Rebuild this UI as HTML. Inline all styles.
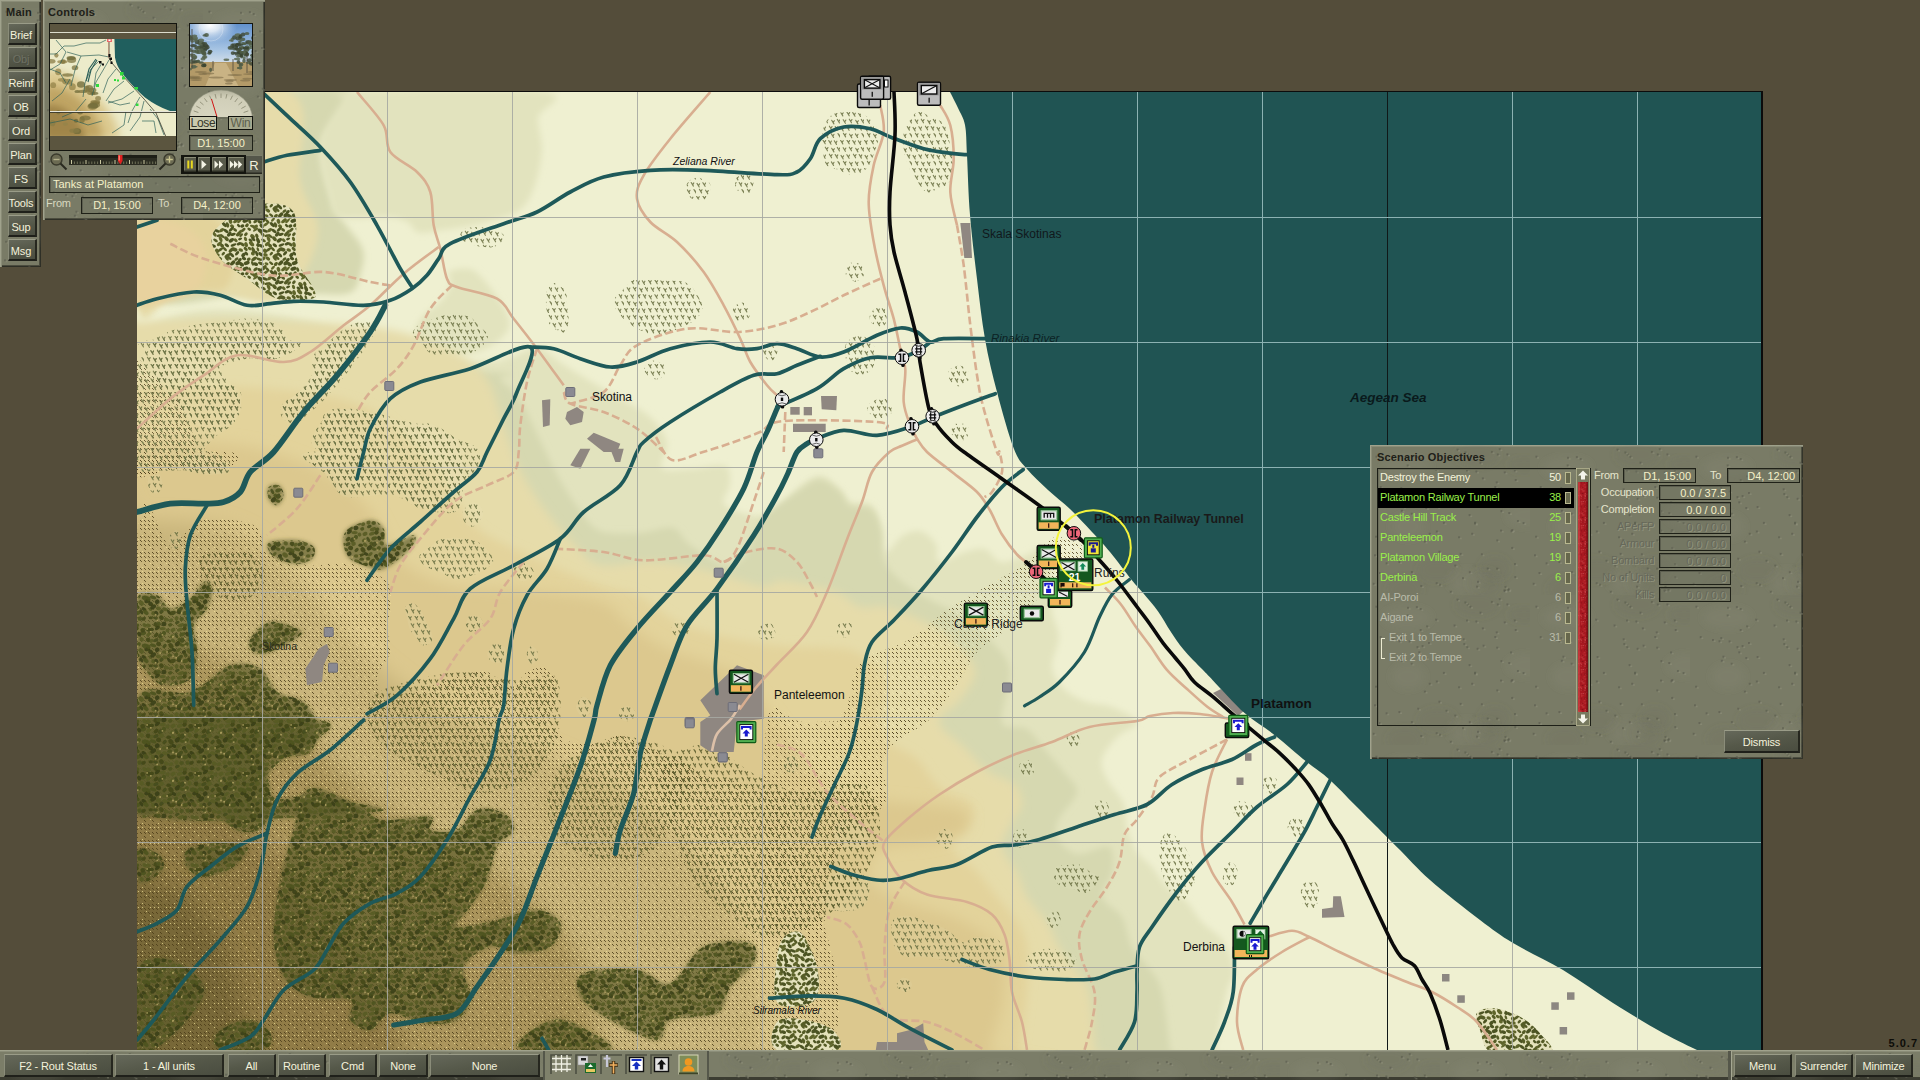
<!DOCTYPE html>
<html><head><meta charset="utf-8"><title>Command Ops - Tanks at Platamon</title>
<style>
html,body{margin:0;padding:0;background:#544d3a;overflow:hidden;}
body{width:1920px;height:1080px;position:relative;font-family:"Liberation Sans",Arial,sans-serif;}
#map{position:absolute;left:0;top:0;width:1920px;height:1080px;}

.p{position:absolute;background:#797b66;box-shadow:inset 1px 1px 0 #a0a28c,inset 2px 2px 0 #8a8c77,inset -1px -1px 0 #2e2f26,inset -2px -2px 0 #4b4c3e;overflow:hidden;}
.p svg.tx{position:absolute;left:0;top:0;width:100%;height:100%;pointer-events:none;}
.a{position:absolute;white-space:nowrap;}
.t{position:absolute;font-weight:bold;font-size:11px;color:#1e2018;letter-spacing:0.25px;white-space:nowrap;}
.b{position:absolute;box-sizing:border-box;background:linear-gradient(170deg,#65685a 0%,#555849 50%,#4a4d40 100%);border-top:1px solid #9a9c88;border-left:1px solid #8a8c79;border-bottom:2px solid #1f201a;border-right:2px solid #26271f;color:#f4f2dc;font-size:11px;text-align:center;white-space:nowrap;letter-spacing:-0.15px;}
.b.dis{color:#6e7164;text-shadow:1px 1px 0 #4a4c40;}
.f{position:absolute;box-sizing:border-box;border:1px solid #1f2118;background:rgba(110,112,94,0.35);color:#f4f0c8;font-size:11px;white-space:nowrap;letter-spacing:0;box-shadow:inset 1px 1px 0 #5c5e4f;}
.lab{position:absolute;color:#e6e5cc;font-size:11px;white-space:nowrap;letter-spacing:-0.25px;}
.lab.dis,.f.dis{color:#66685a;text-shadow:1px 1px 0 #92947e;}
.row{position:absolute;left:1378px;width:196px;height:20px;font-size:11px;letter-spacing:-0.2px;white-space:nowrap;}
.row span{position:absolute;top:3px;}
.row .n{left:2px;}
.row .v{right:13px;text-align:right;}
.row i{position:absolute;left:187px;top:4px;width:4px;height:10px;border:1px solid #b9b88f;background:#66674c;box-sizing:content-box;}

</style></head><body>
<svg id="map" width="1920" height="1080" viewBox="0 0 1920 1080">
<defs><clipPath id="mapclip"><rect x="137" y="92" width="1625" height="958"/></clipPath><filter id="b1" x="-20%" y="-20%" width="140%" height="140%"><feGaussianBlur stdDeviation="0.6"/></filter><filter id="b2" x="-20%" y="-20%" width="140%" height="140%"><feGaussianBlur stdDeviation="2"/></filter><filter id="b3" x="-20%" y="-20%" width="140%" height="140%"><feGaussianBlur stdDeviation="3"/></filter><filter id="b4" x="-20%" y="-20%" width="140%" height="140%"><feGaussianBlur stdDeviation="4"/></filter><filter id="b5" x="-20%" y="-20%" width="140%" height="140%"><feGaussianBlur stdDeviation="5"/></filter><filter id="b6" x="-20%" y="-20%" width="140%" height="140%"><feGaussianBlur stdDeviation="6"/></filter><filter id="b7" x="-20%" y="-20%" width="140%" height="140%"><feGaussianBlur stdDeviation="7"/></filter><filter id="b8" x="-20%" y="-20%" width="140%" height="140%"><feGaussianBlur stdDeviation="8"/></filter><filter id="b10" x="-20%" y="-20%" width="140%" height="140%"><feGaussianBlur stdDeviation="10"/></filter><filter id="b12" x="-20%" y="-20%" width="140%" height="140%"><feGaussianBlur stdDeviation="12"/></filter><filter id="b14" x="-20%" y="-20%" width="140%" height="140%"><feGaussianBlur stdDeviation="14"/></filter><filter id="b20" x="-20%" y="-20%" width="140%" height="140%"><feGaussianBlur stdDeviation="20"/></filter><pattern id="woods" width="24" height="28" patternUnits="userSpaceOnUse"><rect width="24" height="28" fill="#f2f2dc" fill-opacity="0.07"/><path d="M0.6 0.3l2.200 3.600M3.2 0.7l-1 1.700" stroke="#6a7042" stroke-width="1.15" stroke-linecap="round" stroke-opacity="0.85" fill="none"/><path d="M7.0 0.2l2.200 3.600M9.6 0.6l-1 1.700" stroke="#6a7042" stroke-width="1.15" stroke-linecap="round" stroke-opacity="0.85" fill="none"/><path d="M12.8 0.6l2.200 3.600M15.4 1.0l-1 1.700" stroke="#6a7042" stroke-width="1.15" stroke-linecap="round" stroke-opacity="0.85" fill="none"/><path d="M18.3 0.8l2.200 3.600M20.9 1.2l-1 1.700" stroke="#6a7042" stroke-width="1.15" stroke-linecap="round" stroke-opacity="0.85" fill="none"/><path d="M3.2 7.7l2.200 3.600M5.8 8.1l-1 1.700" stroke="#6a7042" stroke-width="1.15" stroke-linecap="round" stroke-opacity="0.85" fill="none"/><path d="M9.3 7.2l2.200 3.600M11.9 7.6l-1 1.700" stroke="#6a7042" stroke-width="1.15" stroke-linecap="round" stroke-opacity="0.85" fill="none"/><path d="M15.7 8.3l2.200 3.600M18.3 8.7l-1 1.700" stroke="#6a7042" stroke-width="1.15" stroke-linecap="round" stroke-opacity="0.85" fill="none"/><path d="M21.3 7.4l2.200 3.600M23.9 7.8l-1 1.700" stroke="#6a7042" stroke-width="1.15" stroke-linecap="round" stroke-opacity="0.85" fill="none"/><path d="M1.0 15.4l2.200 3.600M3.6 15.8l-1 1.700" stroke="#6a7042" stroke-width="1.15" stroke-linecap="round" stroke-opacity="0.85" fill="none"/><path d="M6.9 14.7l2.200 3.600M9.5 15.1l-1 1.700" stroke="#6a7042" stroke-width="1.15" stroke-linecap="round" stroke-opacity="0.85" fill="none"/><path d="M13.4 14.2l2.200 3.600M16.0 14.6l-1 1.700" stroke="#6a7042" stroke-width="1.15" stroke-linecap="round" stroke-opacity="0.85" fill="none"/><path d="M19.2 14.5l2.200 3.600M21.8 14.9l-1 1.700" stroke="#6a7042" stroke-width="1.15" stroke-linecap="round" stroke-opacity="0.85" fill="none"/><path d="M3.4 21.3l2.200 3.600M6.0 21.7l-1 1.700" stroke="#6a7042" stroke-width="1.15" stroke-linecap="round" stroke-opacity="0.85" fill="none"/><path d="M9.6 22.2l2.200 3.600M12.2 22.6l-1 1.700" stroke="#6a7042" stroke-width="1.15" stroke-linecap="round" stroke-opacity="0.85" fill="none"/><path d="M15.4 21.9l2.200 3.600M18.0 22.3l-1 1.700" stroke="#6a7042" stroke-width="1.15" stroke-linecap="round" stroke-opacity="0.85" fill="none"/><path d="M22.0 21.6l2.200 3.600M24.6 22.0l-1 1.700" stroke="#6a7042" stroke-width="1.15" stroke-linecap="round" stroke-opacity="0.85" fill="none"/></pattern><pattern id="woodsd" width="24" height="28" patternUnits="userSpaceOnUse"><path d="M0.6 0.3l2.200 3.600M3.2 0.7l-1 1.700" stroke="#5a5c2c" stroke-width="1.15" stroke-linecap="round" stroke-opacity="0.85" fill="none"/><path d="M7.0 0.2l2.200 3.600M9.6 0.6l-1 1.700" stroke="#5a5c2c" stroke-width="1.15" stroke-linecap="round" stroke-opacity="0.85" fill="none"/><path d="M12.8 0.6l2.200 3.600M15.4 1.0l-1 1.700" stroke="#5a5c2c" stroke-width="1.15" stroke-linecap="round" stroke-opacity="0.85" fill="none"/><path d="M18.3 0.8l2.200 3.600M20.9 1.2l-1 1.700" stroke="#5a5c2c" stroke-width="1.15" stroke-linecap="round" stroke-opacity="0.85" fill="none"/><path d="M3.2 7.7l2.200 3.600M5.8 8.1l-1 1.700" stroke="#5a5c2c" stroke-width="1.15" stroke-linecap="round" stroke-opacity="0.85" fill="none"/><path d="M9.3 7.2l2.200 3.600M11.9 7.6l-1 1.700" stroke="#5a5c2c" stroke-width="1.15" stroke-linecap="round" stroke-opacity="0.85" fill="none"/><path d="M15.7 8.3l2.200 3.600M18.3 8.7l-1 1.700" stroke="#5a5c2c" stroke-width="1.15" stroke-linecap="round" stroke-opacity="0.85" fill="none"/><path d="M21.3 7.4l2.200 3.600M23.9 7.8l-1 1.700" stroke="#5a5c2c" stroke-width="1.15" stroke-linecap="round" stroke-opacity="0.85" fill="none"/><path d="M1.0 15.4l2.200 3.600M3.6 15.8l-1 1.700" stroke="#5a5c2c" stroke-width="1.15" stroke-linecap="round" stroke-opacity="0.85" fill="none"/><path d="M6.9 14.7l2.200 3.600M9.5 15.1l-1 1.700" stroke="#5a5c2c" stroke-width="1.15" stroke-linecap="round" stroke-opacity="0.85" fill="none"/><path d="M13.4 14.2l2.200 3.600M16.0 14.6l-1 1.700" stroke="#5a5c2c" stroke-width="1.15" stroke-linecap="round" stroke-opacity="0.85" fill="none"/><path d="M19.2 14.5l2.200 3.600M21.8 14.9l-1 1.700" stroke="#5a5c2c" stroke-width="1.15" stroke-linecap="round" stroke-opacity="0.85" fill="none"/><path d="M3.4 21.3l2.200 3.600M6.0 21.7l-1 1.700" stroke="#5a5c2c" stroke-width="1.15" stroke-linecap="round" stroke-opacity="0.85" fill="none"/><path d="M9.6 22.2l2.200 3.600M12.2 22.6l-1 1.700" stroke="#5a5c2c" stroke-width="1.15" stroke-linecap="round" stroke-opacity="0.85" fill="none"/><path d="M15.4 21.9l2.200 3.600M18.0 22.3l-1 1.700" stroke="#5a5c2c" stroke-width="1.15" stroke-linecap="round" stroke-opacity="0.85" fill="none"/><path d="M22.0 21.6l2.200 3.600M24.6 22.0l-1 1.700" stroke="#5a5c2c" stroke-width="1.15" stroke-linecap="round" stroke-opacity="0.85" fill="none"/></pattern><pattern id="orch" width="48" height="48" patternUnits="userSpaceOnUse"><g filter="url(#b1)"><ellipse cx="0.1" cy="-1.1" rx="2.1" ry="1.3" transform="rotate(-20 0.1 -1.1)" fill="#4c5322"/><ellipse cx="0.1" cy="46.9" rx="2.1" ry="1.3" transform="rotate(-20 0.1 46.9)" fill="#4c5322"/><ellipse cx="48.1" cy="-1.1" rx="2.1" ry="1.3" transform="rotate(-20 48.1 -1.1)" fill="#4c5322"/><ellipse cx="48.1" cy="46.9" rx="2.1" ry="1.3" transform="rotate(-20 48.1 46.9)" fill="#4c5322"/><ellipse cx="2.2" cy="4.3" rx="2.8" ry="1.5" transform="rotate(35 2.2 4.3)" fill="#555c26"/><ellipse cx="50.2" cy="4.3" rx="2.8" ry="1.5" transform="rotate(35 50.2 4.3)" fill="#555c26"/><ellipse cx="0.8" cy="10.1" rx="2.3" ry="1.6" transform="rotate(20 0.8 10.1)" fill="#5e652c"/><ellipse cx="48.8" cy="10.1" rx="2.3" ry="1.6" transform="rotate(20 48.8 10.1)" fill="#5e652c"/><ellipse cx="3.4" cy="15.0" rx="2.4" ry="1.9" transform="rotate(-45 3.4 15.0)" fill="#4c5322"/><ellipse cx="-0.2" cy="19.9" rx="2.2" ry="1.5" transform="rotate(-45 -0.2 19.9)" fill="#4c5322"/><ellipse cx="47.8" cy="19.9" rx="2.2" ry="1.5" transform="rotate(-45 47.8 19.9)" fill="#4c5322"/><ellipse cx="1.3" cy="24.2" rx="3.0" ry="1.8" transform="rotate(35 1.3 24.2)" fill="#4c5322"/><ellipse cx="49.3" cy="24.2" rx="3.0" ry="1.8" transform="rotate(35 49.3 24.2)" fill="#4c5322"/><ellipse cx="-0.4" cy="28.8" rx="3.0" ry="1.2" transform="rotate(-45 -0.4 28.8)" fill="#5e652c"/><ellipse cx="47.6" cy="28.8" rx="3.0" ry="1.2" transform="rotate(-45 47.6 28.8)" fill="#5e652c"/><ellipse cx="2.3" cy="34.0" rx="2.1" ry="1.7" transform="rotate(-20 2.3 34.0)" fill="#4c5322"/><ellipse cx="50.3" cy="34.0" rx="2.1" ry="1.7" transform="rotate(-20 50.3 34.0)" fill="#4c5322"/><ellipse cx="1.3" cy="39.2" rx="2.4" ry="1.5" transform="rotate(-20 1.3 39.2)" fill="#5e652c"/><ellipse cx="49.3" cy="39.2" rx="2.4" ry="1.5" transform="rotate(-20 49.3 39.2)" fill="#5e652c"/><ellipse cx="1.2" cy="43.1" rx="2.2" ry="1.3" transform="rotate(-45 1.2 43.1)" fill="#555c26"/><ellipse cx="49.2" cy="43.1" rx="2.2" ry="1.3" transform="rotate(-45 49.2 43.1)" fill="#555c26"/><ellipse cx="5.5" cy="-1.0" rx="2.3" ry="1.5" transform="rotate(70 5.5 -1.0)" fill="#5e652c"/><ellipse cx="5.5" cy="47.0" rx="2.3" ry="1.5" transform="rotate(70 5.5 47.0)" fill="#5e652c"/><ellipse cx="6.1" cy="4.7" rx="2.7" ry="1.8" transform="rotate(70 6.1 4.7)" fill="#5e652c"/><ellipse cx="5.7" cy="9.0" rx="2.5" ry="1.5" transform="rotate(45 5.7 9.0)" fill="#555c26"/><ellipse cx="6.3" cy="13.6" rx="2.3" ry="1.4" transform="rotate(45 6.3 13.6)" fill="#4c5322"/><ellipse cx="4.0" cy="18.6" rx="2.2" ry="1.6" transform="rotate(20 4.0 18.6)" fill="#4c5322"/><ellipse cx="6.7" cy="23.0" rx="3.1" ry="1.9" transform="rotate(-20 6.7 23.0)" fill="#4c5322"/><ellipse cx="5.4" cy="28.7" rx="3.1" ry="1.9" transform="rotate(-20 5.4 28.7)" fill="#4c5322"/><ellipse cx="6.9" cy="33.3" rx="2.1" ry="1.6" transform="rotate(-45 6.9 33.3)" fill="#555c26"/><ellipse cx="3.7" cy="37.6" rx="2.2" ry="1.4" transform="rotate(-45 3.7 37.6)" fill="#555c26"/><ellipse cx="5.9" cy="42.3" rx="2.1" ry="1.5" transform="rotate(-45 5.9 42.3)" fill="#555c26"/><ellipse cx="10.6" cy="0.3" rx="2.2" ry="1.4" transform="rotate(35 10.6 0.3)" fill="#4c5322"/><ellipse cx="10.6" cy="48.3" rx="2.2" ry="1.4" transform="rotate(35 10.6 48.3)" fill="#4c5322"/><ellipse cx="11.6" cy="3.8" rx="3.1" ry="1.9" transform="rotate(45 11.6 3.8)" fill="#5e652c"/><ellipse cx="9.6" cy="8.5" rx="2.1" ry="1.4" transform="rotate(35 9.6 8.5)" fill="#5e652c"/><ellipse cx="12.9" cy="13.5" rx="2.0" ry="1.9" transform="rotate(20 12.9 13.5)" fill="#5e652c"/><ellipse cx="8.7" cy="19.3" rx="2.0" ry="1.6" transform="rotate(-20 8.7 19.3)" fill="#555c26"/><ellipse cx="12.5" cy="23.4" rx="2.5" ry="1.3" transform="rotate(70 12.5 23.4)" fill="#555c26"/><ellipse cx="9.7" cy="29.5" rx="2.4" ry="1.4" transform="rotate(70 9.7 29.5)" fill="#555c26"/><ellipse cx="12.8" cy="34.4" rx="3.0" ry="1.4" transform="rotate(20 12.8 34.4)" fill="#5e652c"/><ellipse cx="9.2" cy="37.2" rx="2.0" ry="1.4" transform="rotate(35 9.2 37.2)" fill="#555c26"/><ellipse cx="12.5" cy="44.4" rx="2.6" ry="1.9" transform="rotate(35 12.5 44.4)" fill="#5e652c"/><ellipse cx="13.3" cy="-1.0" rx="2.6" ry="1.4" transform="rotate(45 13.3 -1.0)" fill="#4c5322"/><ellipse cx="13.3" cy="47.0" rx="2.6" ry="1.4" transform="rotate(45 13.3 47.0)" fill="#4c5322"/><ellipse cx="18.1" cy="5.1" rx="2.0" ry="1.8" transform="rotate(35 18.1 5.1)" fill="#4c5322"/><ellipse cx="13.3" cy="10.0" rx="3.2" ry="1.7" transform="rotate(70 13.3 10.0)" fill="#555c26"/><ellipse cx="16.7" cy="13.6" rx="3.0" ry="1.4" transform="rotate(70 16.7 13.6)" fill="#4c5322"/><ellipse cx="14.1" cy="18.9" rx="3.2" ry="1.7" transform="rotate(-35 14.1 18.9)" fill="#555c26"/><ellipse cx="15.6" cy="24.2" rx="2.6" ry="1.7" transform="rotate(20 15.6 24.2)" fill="#4c5322"/><ellipse cx="15.6" cy="29.2" rx="2.5" ry="1.6" transform="rotate(-35 15.6 29.2)" fill="#555c26"/><ellipse cx="15.5" cy="34.8" rx="2.8" ry="1.6" transform="rotate(-35 15.5 34.8)" fill="#5e652c"/><ellipse cx="15.7" cy="37.6" rx="3.1" ry="1.2" transform="rotate(-35 15.7 37.6)" fill="#5e652c"/><ellipse cx="16.8" cy="43.9" rx="2.4" ry="1.6" transform="rotate(70 16.8 43.9)" fill="#555c26"/><ellipse cx="18.1" cy="0.6" rx="3.2" ry="1.7" transform="rotate(70 18.1 0.6)" fill="#4c5322"/><ellipse cx="18.1" cy="48.6" rx="3.2" ry="1.7" transform="rotate(70 18.1 48.6)" fill="#4c5322"/><ellipse cx="21.4" cy="5.9" rx="2.7" ry="1.6" transform="rotate(20 21.4 5.9)" fill="#4c5322"/><ellipse cx="17.9" cy="9.4" rx="2.2" ry="1.2" transform="rotate(70 17.9 9.4)" fill="#555c26"/><ellipse cx="20.7" cy="14.3" rx="2.9" ry="1.6" transform="rotate(35 20.7 14.3)" fill="#4c5322"/><ellipse cx="19.2" cy="19.3" rx="3.0" ry="1.3" transform="rotate(20 19.2 19.3)" fill="#555c26"/><ellipse cx="20.9" cy="23.4" rx="3.0" ry="1.6" transform="rotate(20 20.9 23.4)" fill="#555c26"/><ellipse cx="19.9" cy="29.9" rx="2.6" ry="1.6" transform="rotate(20 19.9 29.9)" fill="#4c5322"/><ellipse cx="21.6" cy="34.1" rx="2.6" ry="1.6" transform="rotate(45 21.6 34.1)" fill="#4c5322"/><ellipse cx="20.3" cy="38.9" rx="3.1" ry="1.9" transform="rotate(35 20.3 38.9)" fill="#4c5322"/><ellipse cx="22.6" cy="42.4" rx="2.6" ry="1.5" transform="rotate(45 22.6 42.4)" fill="#5e652c"/><ellipse cx="23.5" cy="0.4" rx="2.6" ry="1.3" transform="rotate(35 23.5 0.4)" fill="#555c26"/><ellipse cx="23.5" cy="48.4" rx="2.6" ry="1.3" transform="rotate(35 23.5 48.4)" fill="#555c26"/><ellipse cx="27.4" cy="3.9" rx="2.9" ry="1.7" transform="rotate(-35 27.4 3.9)" fill="#5e652c"/><ellipse cx="25.0" cy="10.8" rx="2.3" ry="1.9" transform="rotate(45 25.0 10.8)" fill="#5e652c"/><ellipse cx="25.5" cy="14.8" rx="2.3" ry="1.7" transform="rotate(20 25.5 14.8)" fill="#5e652c"/><ellipse cx="23.6" cy="18.4" rx="2.4" ry="1.7" transform="rotate(-45 23.6 18.4)" fill="#5e652c"/><ellipse cx="26.5" cy="23.8" rx="2.0" ry="1.4" transform="rotate(20 26.5 23.8)" fill="#5e652c"/><ellipse cx="24.0" cy="27.7" rx="3.3" ry="1.8" transform="rotate(-45 24.0 27.7)" fill="#555c26"/><ellipse cx="25.8" cy="32.4" rx="3.0" ry="1.4" transform="rotate(-35 25.8 32.4)" fill="#5e652c"/><ellipse cx="24.9" cy="38.9" rx="3.2" ry="1.5" transform="rotate(20 24.9 38.9)" fill="#4c5322"/><ellipse cx="26.6" cy="43.7" rx="2.1" ry="1.2" transform="rotate(-20 26.6 43.7)" fill="#555c26"/><ellipse cx="28.6" cy="-1.1" rx="3.2" ry="1.6" transform="rotate(70 28.6 -1.1)" fill="#5e652c"/><ellipse cx="28.6" cy="46.9" rx="3.2" ry="1.6" transform="rotate(70 28.6 46.9)" fill="#5e652c"/><ellipse cx="30.1" cy="5.7" rx="2.1" ry="1.8" transform="rotate(45 30.1 5.7)" fill="#555c26"/><ellipse cx="28.4" cy="9.7" rx="3.2" ry="1.4" transform="rotate(-35 28.4 9.7)" fill="#555c26"/><ellipse cx="31.3" cy="13.7" rx="2.1" ry="1.3" transform="rotate(-45 31.3 13.7)" fill="#555c26"/><ellipse cx="28.0" cy="18.7" rx="2.4" ry="1.7" transform="rotate(35 28.0 18.7)" fill="#5e652c"/><ellipse cx="31.2" cy="23.2" rx="2.5" ry="1.2" transform="rotate(35 31.2 23.2)" fill="#555c26"/><ellipse cx="27.5" cy="29.4" rx="2.7" ry="1.3" transform="rotate(45 27.5 29.4)" fill="#555c26"/><ellipse cx="32.3" cy="32.6" rx="3.1" ry="1.5" transform="rotate(45 32.3 32.6)" fill="#4c5322"/><ellipse cx="29.7" cy="38.1" rx="2.7" ry="1.7" transform="rotate(-35 29.7 38.1)" fill="#5e652c"/><ellipse cx="30.4" cy="44.2" rx="2.9" ry="1.3" transform="rotate(35 30.4 44.2)" fill="#555c26"/><ellipse cx="34.5" cy="-1.3" rx="2.8" ry="1.8" transform="rotate(45 34.5 -1.3)" fill="#555c26"/><ellipse cx="34.5" cy="46.7" rx="2.8" ry="1.8" transform="rotate(45 34.5 46.7)" fill="#555c26"/><ellipse cx="34.8" cy="5.2" rx="2.5" ry="1.6" transform="rotate(35 34.8 5.2)" fill="#4c5322"/><ellipse cx="32.9" cy="9.1" rx="2.6" ry="1.3" transform="rotate(45 32.9 9.1)" fill="#555c26"/><ellipse cx="35.4" cy="15.6" rx="3.3" ry="1.6" transform="rotate(-35 35.4 15.6)" fill="#555c26"/><ellipse cx="34.8" cy="18.7" rx="2.5" ry="1.2" transform="rotate(45 34.8 18.7)" fill="#555c26"/><ellipse cx="35.9" cy="24.0" rx="2.3" ry="1.6" transform="rotate(-45 35.9 24.0)" fill="#555c26"/><ellipse cx="33.0" cy="27.7" rx="2.5" ry="1.2" transform="rotate(-45 33.0 27.7)" fill="#5e652c"/><ellipse cx="35.5" cy="32.9" rx="2.8" ry="1.6" transform="rotate(70 35.5 32.9)" fill="#555c26"/><ellipse cx="34.0" cy="39.0" rx="3.1" ry="1.5" transform="rotate(35 34.0 39.0)" fill="#4c5322"/><ellipse cx="37.3" cy="42.3" rx="2.9" ry="1.7" transform="rotate(-45 37.3 42.3)" fill="#4c5322"/><ellipse cx="39.4" cy="0.3" rx="3.0" ry="1.8" transform="rotate(-35 39.4 0.3)" fill="#4c5322"/><ellipse cx="39.4" cy="48.3" rx="3.0" ry="1.8" transform="rotate(-35 39.4 48.3)" fill="#4c5322"/><ellipse cx="41.5" cy="5.0" rx="3.1" ry="1.2" transform="rotate(-20 41.5 5.0)" fill="#4c5322"/><ellipse cx="39.2" cy="10.1" rx="3.2" ry="1.7" transform="rotate(-45 39.2 10.1)" fill="#555c26"/><ellipse cx="39.6" cy="14.8" rx="3.2" ry="1.5" transform="rotate(45 39.6 14.8)" fill="#4c5322"/><ellipse cx="37.2" cy="17.9" rx="2.7" ry="1.4" transform="rotate(35 37.2 17.9)" fill="#555c26"/><ellipse cx="40.7" cy="22.9" rx="3.2" ry="1.8" transform="rotate(-45 40.7 22.9)" fill="#4c5322"/><ellipse cx="38.5" cy="29.4" rx="2.6" ry="1.8" transform="rotate(70 38.5 29.4)" fill="#5e652c"/><ellipse cx="40.1" cy="34.3" rx="2.3" ry="1.7" transform="rotate(45 40.1 34.3)" fill="#5e652c"/><ellipse cx="39.3" cy="37.3" rx="3.2" ry="1.4" transform="rotate(-45 39.3 37.3)" fill="#4c5322"/><ellipse cx="41.1" cy="42.4" rx="2.8" ry="1.4" transform="rotate(-20 41.1 42.4)" fill="#4c5322"/><ellipse cx="43.7" cy="0.3" rx="2.2" ry="1.5" transform="rotate(45 43.7 0.3)" fill="#5e652c"/><ellipse cx="43.7" cy="48.3" rx="2.2" ry="1.5" transform="rotate(45 43.7 48.3)" fill="#5e652c"/><ellipse cx="46.8" cy="3.8" rx="2.3" ry="1.5" transform="rotate(-20 46.8 3.8)" fill="#4c5322"/><ellipse cx="-1.2" cy="3.8" rx="2.3" ry="1.5" transform="rotate(-20 -1.2 3.8)" fill="#4c5322"/><ellipse cx="42.6" cy="9.5" rx="3.0" ry="1.9" transform="rotate(20 42.6 9.5)" fill="#555c26"/><ellipse cx="45.1" cy="13.3" rx="2.6" ry="1.4" transform="rotate(-45 45.1 13.3)" fill="#4c5322"/><ellipse cx="-2.9" cy="13.3" rx="2.6" ry="1.4" transform="rotate(-45 -2.9 13.3)" fill="#4c5322"/><ellipse cx="44.4" cy="19.1" rx="2.3" ry="1.3" transform="rotate(-35 44.4 19.1)" fill="#555c26"/><ellipse cx="45.8" cy="23.1" rx="2.7" ry="1.9" transform="rotate(-35 45.8 23.1)" fill="#4c5322"/><ellipse cx="-2.2" cy="23.1" rx="2.7" ry="1.9" transform="rotate(-35 -2.2 23.1)" fill="#4c5322"/><ellipse cx="44.0" cy="28.8" rx="3.2" ry="1.7" transform="rotate(-35 44.0 28.8)" fill="#5e652c"/><ellipse cx="46.6" cy="33.6" rx="2.0" ry="1.2" transform="rotate(45 46.6 33.6)" fill="#4c5322"/><ellipse cx="-1.4" cy="33.6" rx="2.0" ry="1.2" transform="rotate(45 -1.4 33.6)" fill="#4c5322"/><ellipse cx="43.1" cy="37.9" rx="2.2" ry="1.4" transform="rotate(35 43.1 37.9)" fill="#555c26"/><ellipse cx="46.5" cy="41.9" rx="3.0" ry="1.8" transform="rotate(-45 46.5 41.9)" fill="#555c26"/><ellipse cx="-1.5" cy="41.9" rx="3.0" ry="1.8" transform="rotate(-45 -1.5 41.9)" fill="#555c26"/></g></pattern><pattern id="dense" width="48" height="48" patternUnits="userSpaceOnUse"><g filter="url(#b1)"><ellipse cx="0.7" cy="1.3" rx="2.4" ry="1.8" transform="rotate(40 0.7 1.3)" fill="#565b26" fill-opacity="0.9"/><ellipse cx="0.7" cy="49.3" rx="2.4" ry="1.8" transform="rotate(40 0.7 49.3)" fill="#565b26" fill-opacity="0.9"/><ellipse cx="48.7" cy="1.3" rx="2.4" ry="1.8" transform="rotate(40 48.7 1.3)" fill="#565b26" fill-opacity="0.9"/><ellipse cx="48.7" cy="49.3" rx="2.4" ry="1.8" transform="rotate(40 48.7 49.3)" fill="#565b26" fill-opacity="0.9"/><ellipse cx="4.2" cy="5.6" rx="2.5" ry="1.9" transform="rotate(20 4.2 5.6)" fill="#434819" fill-opacity="0.9"/><ellipse cx="-0.7" cy="9.2" rx="2.9" ry="2.1" transform="rotate(-20 -0.7 9.2)" fill="#4e5320" fill-opacity="0.9"/><ellipse cx="47.3" cy="9.2" rx="2.9" ry="2.1" transform="rotate(-20 47.3 9.2)" fill="#4e5320" fill-opacity="0.9"/><ellipse cx="4.1" cy="15.8" rx="2.4" ry="2.2" transform="rotate(40 4.1 15.8)" fill="#434819" fill-opacity="0.9"/><ellipse cx="1.0" cy="21.7" rx="3.2" ry="2.3" transform="rotate(0 1.0 21.7)" fill="#4e5320" fill-opacity="0.9"/><ellipse cx="49.0" cy="21.7" rx="3.2" ry="2.3" transform="rotate(0 49.0 21.7)" fill="#4e5320" fill-opacity="0.9"/><ellipse cx="3.3" cy="25.2" rx="3.0" ry="1.9" transform="rotate(-20 3.3 25.2)" fill="#3b4015" fill-opacity="0.9"/><ellipse cx="51.3" cy="25.2" rx="3.0" ry="1.9" transform="rotate(-20 51.3 25.2)" fill="#3b4015" fill-opacity="0.9"/><ellipse cx="-0.0" cy="33.3" rx="2.7" ry="1.7" transform="rotate(40 -0.0 33.3)" fill="#3b4015" fill-opacity="0.9"/><ellipse cx="48.0" cy="33.3" rx="2.7" ry="1.7" transform="rotate(40 48.0 33.3)" fill="#3b4015" fill-opacity="0.9"/><ellipse cx="1.9" cy="36.5" rx="3.0" ry="2.1" transform="rotate(40 1.9 36.5)" fill="#4e5320" fill-opacity="0.9"/><ellipse cx="49.9" cy="36.5" rx="3.0" ry="2.1" transform="rotate(40 49.9 36.5)" fill="#4e5320" fill-opacity="0.9"/><ellipse cx="-0.6" cy="42.8" rx="2.5" ry="1.7" transform="rotate(-20 -0.6 42.8)" fill="#434819" fill-opacity="0.9"/><ellipse cx="47.4" cy="42.8" rx="2.5" ry="1.7" transform="rotate(-20 47.4 42.8)" fill="#434819" fill-opacity="0.9"/><ellipse cx="4.4" cy="1.3" rx="2.6" ry="1.7" transform="rotate(20 4.4 1.3)" fill="#565b26" fill-opacity="0.9"/><ellipse cx="4.4" cy="49.3" rx="2.6" ry="1.7" transform="rotate(20 4.4 49.3)" fill="#565b26" fill-opacity="0.9"/><ellipse cx="7.7" cy="5.5" rx="2.3" ry="1.7" transform="rotate(0 7.7 5.5)" fill="#434819" fill-opacity="0.9"/><ellipse cx="4.8" cy="10.2" rx="3.1" ry="1.7" transform="rotate(-40 4.8 10.2)" fill="#565b26" fill-opacity="0.9"/><ellipse cx="7.6" cy="16.8" rx="2.3" ry="1.7" transform="rotate(-40 7.6 16.8)" fill="#565b26" fill-opacity="0.9"/><ellipse cx="4.6" cy="22.8" rx="2.2" ry="2.0" transform="rotate(60 4.6 22.8)" fill="#4e5320" fill-opacity="0.9"/><ellipse cx="6.6" cy="27.9" rx="2.5" ry="2.1" transform="rotate(40 6.6 27.9)" fill="#3b4015" fill-opacity="0.9"/><ellipse cx="6.4" cy="33.2" rx="2.0" ry="1.5" transform="rotate(60 6.4 33.2)" fill="#565b26" fill-opacity="0.9"/><ellipse cx="9.4" cy="37.3" rx="2.1" ry="2.3" transform="rotate(0 9.4 37.3)" fill="#565b26" fill-opacity="0.9"/><ellipse cx="6.8" cy="41.8" rx="2.1" ry="1.6" transform="rotate(0 6.8 41.8)" fill="#434819" fill-opacity="0.9"/><ellipse cx="12.1" cy="0.7" rx="2.8" ry="2.2" transform="rotate(40 12.1 0.7)" fill="#434819" fill-opacity="0.9"/><ellipse cx="12.1" cy="48.7" rx="2.8" ry="2.2" transform="rotate(40 12.1 48.7)" fill="#434819" fill-opacity="0.9"/><ellipse cx="13.4" cy="3.9" rx="3.0" ry="1.7" transform="rotate(-40 13.4 3.9)" fill="#3b4015" fill-opacity="0.9"/><ellipse cx="13.4" cy="51.9" rx="3.0" ry="1.7" transform="rotate(-40 13.4 51.9)" fill="#3b4015" fill-opacity="0.9"/><ellipse cx="12.1" cy="11.1" rx="2.7" ry="1.9" transform="rotate(-40 12.1 11.1)" fill="#434819" fill-opacity="0.9"/><ellipse cx="11.9" cy="16.1" rx="2.8" ry="1.8" transform="rotate(-20 11.9 16.1)" fill="#474c1c" fill-opacity="0.9"/><ellipse cx="9.1" cy="21.4" rx="3.3" ry="1.8" transform="rotate(20 9.1 21.4)" fill="#4e5320" fill-opacity="0.9"/><ellipse cx="13.2" cy="25.8" rx="2.3" ry="2.4" transform="rotate(60 13.2 25.8)" fill="#3b4015" fill-opacity="0.9"/><ellipse cx="9.2" cy="31.0" rx="3.2" ry="2.1" transform="rotate(-40 9.2 31.0)" fill="#3b4015" fill-opacity="0.9"/><ellipse cx="12.4" cy="37.1" rx="2.5" ry="1.9" transform="rotate(60 12.4 37.1)" fill="#3b4015" fill-opacity="0.9"/><ellipse cx="11.4" cy="42.2" rx="2.5" ry="1.5" transform="rotate(20 11.4 42.2)" fill="#474c1c" fill-opacity="0.9"/><ellipse cx="14.6" cy="-0.0" rx="2.3" ry="2.2" transform="rotate(-20 14.6 -0.0)" fill="#4e5320" fill-opacity="0.9"/><ellipse cx="14.6" cy="48.0" rx="2.3" ry="2.2" transform="rotate(-20 14.6 48.0)" fill="#4e5320" fill-opacity="0.9"/><ellipse cx="18.5" cy="4.6" rx="3.2" ry="1.6" transform="rotate(0 18.5 4.6)" fill="#565b26" fill-opacity="0.9"/><ellipse cx="16.3" cy="11.9" rx="2.6" ry="2.3" transform="rotate(-40 16.3 11.9)" fill="#474c1c" fill-opacity="0.9"/><ellipse cx="17.5" cy="15.6" rx="2.3" ry="2.4" transform="rotate(-20 17.5 15.6)" fill="#565b26" fill-opacity="0.9"/><ellipse cx="14.6" cy="19.9" rx="2.5" ry="2.3" transform="rotate(20 14.6 19.9)" fill="#434819" fill-opacity="0.9"/><ellipse cx="20.2" cy="28.0" rx="2.4" ry="1.7" transform="rotate(0 20.2 28.0)" fill="#565b26" fill-opacity="0.9"/><ellipse cx="14.5" cy="32.5" rx="2.5" ry="1.8" transform="rotate(20 14.5 32.5)" fill="#565b26" fill-opacity="0.9"/><ellipse cx="17.5" cy="35.7" rx="2.4" ry="1.8" transform="rotate(-40 17.5 35.7)" fill="#474c1c" fill-opacity="0.9"/><ellipse cx="17.5" cy="41.7" rx="2.5" ry="2.2" transform="rotate(40 17.5 41.7)" fill="#434819" fill-opacity="0.9"/><ellipse cx="19.9" cy="-0.1" rx="2.5" ry="2.3" transform="rotate(-20 19.9 -0.1)" fill="#3b4015" fill-opacity="0.9"/><ellipse cx="19.9" cy="47.9" rx="2.5" ry="2.3" transform="rotate(-20 19.9 47.9)" fill="#3b4015" fill-opacity="0.9"/><ellipse cx="23.5" cy="6.6" rx="2.0" ry="1.9" transform="rotate(60 23.5 6.6)" fill="#565b26" fill-opacity="0.9"/><ellipse cx="19.9" cy="9.2" rx="2.1" ry="2.3" transform="rotate(20 19.9 9.2)" fill="#4e5320" fill-opacity="0.9"/><ellipse cx="24.7" cy="17.3" rx="2.4" ry="1.7" transform="rotate(0 24.7 17.3)" fill="#434819" fill-opacity="0.9"/><ellipse cx="20.6" cy="22.0" rx="2.4" ry="1.7" transform="rotate(-40 20.6 22.0)" fill="#474c1c" fill-opacity="0.9"/><ellipse cx="25.3" cy="27.1" rx="3.2" ry="1.5" transform="rotate(-20 25.3 27.1)" fill="#434819" fill-opacity="0.9"/><ellipse cx="21.2" cy="33.4" rx="3.2" ry="1.8" transform="rotate(20 21.2 33.4)" fill="#565b26" fill-opacity="0.9"/><ellipse cx="24.9" cy="36.1" rx="2.6" ry="1.5" transform="rotate(60 24.9 36.1)" fill="#3b4015" fill-opacity="0.9"/><ellipse cx="22.4" cy="43.5" rx="2.8" ry="1.8" transform="rotate(20 22.4 43.5)" fill="#565b26" fill-opacity="0.9"/><ellipse cx="26.2" cy="0.9" rx="2.1" ry="1.7" transform="rotate(-20 26.2 0.9)" fill="#4e5320" fill-opacity="0.9"/><ellipse cx="26.2" cy="48.9" rx="2.1" ry="1.7" transform="rotate(-20 26.2 48.9)" fill="#4e5320" fill-opacity="0.9"/><ellipse cx="29.0" cy="5.8" rx="2.6" ry="2.0" transform="rotate(-20 29.0 5.8)" fill="#565b26" fill-opacity="0.9"/><ellipse cx="27.9" cy="12.2" rx="2.3" ry="1.6" transform="rotate(-40 27.9 12.2)" fill="#565b26" fill-opacity="0.9"/><ellipse cx="29.2" cy="16.7" rx="2.6" ry="1.7" transform="rotate(40 29.2 16.7)" fill="#565b26" fill-opacity="0.9"/><ellipse cx="27.0" cy="21.9" rx="3.0" ry="2.3" transform="rotate(60 27.0 21.9)" fill="#434819" fill-opacity="0.9"/><ellipse cx="30.1" cy="26.0" rx="2.4" ry="1.7" transform="rotate(20 30.1 26.0)" fill="#3b4015" fill-opacity="0.9"/><ellipse cx="25.7" cy="31.2" rx="2.3" ry="1.6" transform="rotate(0 25.7 31.2)" fill="#4e5320" fill-opacity="0.9"/><ellipse cx="28.7" cy="37.0" rx="3.3" ry="2.0" transform="rotate(-20 28.7 37.0)" fill="#434819" fill-opacity="0.9"/><ellipse cx="27.1" cy="44.2" rx="2.1" ry="1.9" transform="rotate(-20 27.1 44.2)" fill="#565b26" fill-opacity="0.9"/><ellipse cx="27.1" cy="-3.8" rx="2.1" ry="1.9" transform="rotate(-20 27.1 -3.8)" fill="#565b26" fill-opacity="0.9"/><ellipse cx="33.3" cy="-1.5" rx="2.4" ry="1.6" transform="rotate(-20 33.3 -1.5)" fill="#474c1c" fill-opacity="0.9"/><ellipse cx="33.3" cy="46.5" rx="2.4" ry="1.6" transform="rotate(-20 33.3 46.5)" fill="#474c1c" fill-opacity="0.9"/><ellipse cx="36.1" cy="5.6" rx="3.2" ry="1.8" transform="rotate(-20 36.1 5.6)" fill="#565b26" fill-opacity="0.9"/><ellipse cx="32.3" cy="11.5" rx="2.9" ry="1.5" transform="rotate(60 32.3 11.5)" fill="#474c1c" fill-opacity="0.9"/><ellipse cx="35.3" cy="15.5" rx="2.0" ry="1.8" transform="rotate(-40 35.3 15.5)" fill="#4e5320" fill-opacity="0.9"/><ellipse cx="33.6" cy="19.8" rx="3.0" ry="2.3" transform="rotate(-40 33.6 19.8)" fill="#3b4015" fill-opacity="0.9"/><ellipse cx="34.3" cy="26.2" rx="2.8" ry="1.6" transform="rotate(-40 34.3 26.2)" fill="#565b26" fill-opacity="0.9"/><ellipse cx="32.1" cy="30.6" rx="2.1" ry="1.9" transform="rotate(0 32.1 30.6)" fill="#4e5320" fill-opacity="0.9"/><ellipse cx="35.0" cy="36.0" rx="2.2" ry="2.1" transform="rotate(40 35.0 36.0)" fill="#3b4015" fill-opacity="0.9"/><ellipse cx="32.5" cy="42.4" rx="2.1" ry="2.2" transform="rotate(20 32.5 42.4)" fill="#565b26" fill-opacity="0.9"/><ellipse cx="37.0" cy="1.2" rx="3.3" ry="1.8" transform="rotate(-20 37.0 1.2)" fill="#565b26" fill-opacity="0.9"/><ellipse cx="37.0" cy="49.2" rx="3.3" ry="1.8" transform="rotate(-20 37.0 49.2)" fill="#565b26" fill-opacity="0.9"/><ellipse cx="40.6" cy="4.4" rx="2.0" ry="2.3" transform="rotate(40 40.6 4.4)" fill="#434819" fill-opacity="0.9"/><ellipse cx="38.3" cy="10.4" rx="3.1" ry="1.9" transform="rotate(-20 38.3 10.4)" fill="#4e5320" fill-opacity="0.9"/><ellipse cx="38.4" cy="16.2" rx="2.8" ry="2.3" transform="rotate(-40 38.4 16.2)" fill="#474c1c" fill-opacity="0.9"/><ellipse cx="37.7" cy="20.9" rx="2.7" ry="1.6" transform="rotate(20 37.7 20.9)" fill="#4e5320" fill-opacity="0.9"/><ellipse cx="40.0" cy="28.0" rx="2.1" ry="1.9" transform="rotate(-20 40.0 28.0)" fill="#3b4015" fill-opacity="0.9"/><ellipse cx="36.1" cy="33.4" rx="3.3" ry="1.9" transform="rotate(-40 36.1 33.4)" fill="#474c1c" fill-opacity="0.9"/><ellipse cx="41.3" cy="37.0" rx="3.2" ry="2.1" transform="rotate(-20 41.3 37.0)" fill="#4e5320" fill-opacity="0.9"/><ellipse cx="37.7" cy="43.0" rx="2.3" ry="1.9" transform="rotate(0 37.7 43.0)" fill="#4e5320" fill-opacity="0.9"/><ellipse cx="41.2" cy="1.4" rx="2.2" ry="1.8" transform="rotate(-20 41.2 1.4)" fill="#4e5320" fill-opacity="0.9"/><ellipse cx="41.2" cy="49.4" rx="2.2" ry="1.8" transform="rotate(-20 41.2 49.4)" fill="#4e5320" fill-opacity="0.9"/><ellipse cx="46.7" cy="6.3" rx="2.3" ry="2.3" transform="rotate(60 46.7 6.3)" fill="#434819" fill-opacity="0.9"/><ellipse cx="-1.3" cy="6.3" rx="2.3" ry="2.3" transform="rotate(60 -1.3 6.3)" fill="#434819" fill-opacity="0.9"/><ellipse cx="43.2" cy="10.1" rx="2.5" ry="1.9" transform="rotate(60 43.2 10.1)" fill="#3b4015" fill-opacity="0.9"/><ellipse cx="45.7" cy="15.4" rx="2.3" ry="1.9" transform="rotate(20 45.7 15.4)" fill="#565b26" fill-opacity="0.9"/><ellipse cx="-2.3" cy="15.4" rx="2.3" ry="1.9" transform="rotate(20 -2.3 15.4)" fill="#565b26" fill-opacity="0.9"/><ellipse cx="42.7" cy="20.3" rx="2.0" ry="2.4" transform="rotate(40 42.7 20.3)" fill="#4e5320" fill-opacity="0.9"/><ellipse cx="45.1" cy="27.0" rx="3.1" ry="2.3" transform="rotate(40 45.1 27.0)" fill="#565b26" fill-opacity="0.9"/><ellipse cx="-2.9" cy="27.0" rx="3.1" ry="2.3" transform="rotate(40 -2.9 27.0)" fill="#565b26" fill-opacity="0.9"/><ellipse cx="41.4" cy="30.8" rx="2.6" ry="1.6" transform="rotate(40 41.4 30.8)" fill="#474c1c" fill-opacity="0.9"/><ellipse cx="45.3" cy="35.8" rx="2.8" ry="1.6" transform="rotate(60 45.3 35.8)" fill="#3b4015" fill-opacity="0.9"/><ellipse cx="-2.7" cy="35.8" rx="2.8" ry="1.6" transform="rotate(60 -2.7 35.8)" fill="#3b4015" fill-opacity="0.9"/><ellipse cx="43.5" cy="42.7" rx="2.1" ry="2.0" transform="rotate(40 43.5 42.7)" fill="#4e5320" fill-opacity="0.9"/><circle cx="3.1" cy="4.9" r="0.9" fill="#b7a766" fill-opacity="0.8"/><circle cx="29.0" cy="32.5" r="0.9" fill="#b7a766" fill-opacity="0.8"/><circle cx="6.8" cy="7.8" r="0.9" fill="#b7a766" fill-opacity="0.8"/><circle cx="41.0" cy="14.7" r="0.9" fill="#b7a766" fill-opacity="0.8"/><circle cx="37.7" cy="37.0" r="0.9" fill="#b7a766" fill-opacity="0.8"/><circle cx="32.2" cy="33.7" r="0.9" fill="#b7a766" fill-opacity="0.8"/><circle cx="11.7" cy="38.7" r="0.9" fill="#b7a766" fill-opacity="0.8"/><circle cx="28.9" cy="13.1" r="0.9" fill="#b7a766" fill-opacity="0.8"/><circle cx="16.2" cy="29.0" r="0.9" fill="#b7a766" fill-opacity="0.8"/><circle cx="41.8" cy="22.1" r="0.9" fill="#b7a766" fill-opacity="0.8"/><circle cx="13.2" cy="44.4" r="0.9" fill="#b7a766" fill-opacity="0.8"/><circle cx="23.1" cy="28.0" r="0.9" fill="#b7a766" fill-opacity="0.8"/><circle cx="29.1" cy="12.4" r="0.9" fill="#b7a766" fill-opacity="0.8"/><circle cx="18.4" cy="10.8" r="0.9" fill="#b7a766" fill-opacity="0.8"/></g></pattern><pattern id="rough" width="16" height="16" patternUnits="userSpaceOnUse"><rect x="0" y="0" width="1" height="1" fill="#4a3c18" fill-opacity="0.85"/><rect x="1" y="1" width="1" height="1" fill="#4a3c18" fill-opacity="0.75"/><rect x="4" y="0" width="1" height="1" fill="#4a3c18" fill-opacity="0.85"/><rect x="5" y="1" width="1" height="1" fill="#4a3c18" fill-opacity="0.75"/><rect x="6" y="3" width="1" height="1" fill="#f3e39a" fill-opacity="0.7"/><rect x="8" y="0" width="1" height="1" fill="#4a3c18" fill-opacity="0.85"/><rect x="9" y="1" width="1" height="1" fill="#4a3c18" fill-opacity="0.75"/><rect x="12" y="0" width="1" height="1" fill="#4a3c18" fill-opacity="0.85"/><rect x="13" y="1" width="1" height="1" fill="#4a3c18" fill-opacity="0.75"/><rect x="0" y="4" width="1" height="1" fill="#4a3c18" fill-opacity="0.85"/><rect x="1" y="5" width="1" height="1" fill="#4a3c18" fill-opacity="0.75"/><rect x="8" y="4" width="1" height="1" fill="#4a3c18" fill-opacity="0.85"/><rect x="9" y="5" width="1" height="1" fill="#4a3c18" fill-opacity="0.75"/><rect x="14" y="7" width="1" height="1" fill="#f3e39a" fill-opacity="0.7"/><rect x="0" y="8" width="1" height="1" fill="#4a3c18" fill-opacity="0.85"/><rect x="1" y="9" width="1" height="1" fill="#4a3c18" fill-opacity="0.75"/><rect x="4" y="8" width="1" height="1" fill="#4a3c18" fill-opacity="0.85"/><rect x="5" y="9" width="1" height="1" fill="#4a3c18" fill-opacity="0.75"/><rect x="6" y="11" width="1" height="1" fill="#f3e39a" fill-opacity="0.7"/><rect x="8" y="8" width="1" height="1" fill="#4a3c18" fill-opacity="0.85"/><rect x="9" y="9" width="1" height="1" fill="#4a3c18" fill-opacity="0.75"/><rect x="10" y="11" width="1" height="1" fill="#f3e39a" fill-opacity="0.7"/><rect x="12" y="8" width="1" height="1" fill="#4a3c18" fill-opacity="0.85"/><rect x="13" y="9" width="1" height="1" fill="#4a3c18" fill-opacity="0.75"/><rect x="14" y="11" width="1" height="1" fill="#f3e39a" fill-opacity="0.7"/><rect x="0" y="12" width="1" height="1" fill="#4a3c18" fill-opacity="0.85"/><rect x="1" y="13" width="1" height="1" fill="#4a3c18" fill-opacity="0.75"/><rect x="2" y="15" width="1" height="1" fill="#f3e39a" fill-opacity="0.7"/><rect x="4" y="12" width="1" height="1" fill="#4a3c18" fill-opacity="0.85"/><rect x="5" y="13" width="1" height="1" fill="#4a3c18" fill-opacity="0.75"/><rect x="8" y="12" width="1" height="1" fill="#4a3c18" fill-opacity="0.85"/><rect x="9" y="13" width="1" height="1" fill="#4a3c18" fill-opacity="0.75"/><rect x="12" y="12" width="1" height="1" fill="#4a3c18" fill-opacity="0.85"/><rect x="13" y="13" width="1" height="1" fill="#4a3c18" fill-opacity="0.75"/></pattern><pattern id="dimple" width="160" height="150" patternUnits="userSpaceOnUse"><g filter="url(#b1)"><ellipse cx="38.1" cy="81.6" rx="17.2" ry="12.8" fill="#9a9c86" fill-opacity="0.10" filter="url(#b4)"/><ellipse cx="96.9" cy="136.3" rx="18.6" ry="12.4" fill="#9a9c86" fill-opacity="0.10" filter="url(#b4)"/><ellipse cx="159.3" cy="70.5" rx="23.7" ry="11.8" fill="#9a9c86" fill-opacity="0.10" filter="url(#b4)"/><ellipse cx="37.1" cy="22.7" rx="25.0" ry="11.1" fill="#9a9c86" fill-opacity="0.10" filter="url(#b4)"/><ellipse cx="107.4" cy="9.6" rx="22.6" ry="12.7" fill="#5e604f" fill-opacity="0.10" filter="url(#b4)"/><ellipse cx="124.8" cy="123.5" rx="15.8" ry="12.8" fill="#5e604f" fill-opacity="0.10" filter="url(#b4)"/><ellipse cx="114.3" cy="138.2" rx="17.5" ry="14.4" fill="#5e604f" fill-opacity="0.10" filter="url(#b4)"/><ellipse cx="154.3" cy="20.1" rx="17.1" ry="8.3" fill="#5e604f" fill-opacity="0.10" filter="url(#b4)"/><ellipse cx="34.7" cy="144.8" rx="18.1" ry="13.0" fill="#5e604f" fill-opacity="0.10" filter="url(#b4)"/><ellipse cx="67.4" cy="125.0" rx="20.0" ry="12.3" fill="#5e604f" fill-opacity="0.10" filter="url(#b4)"/><rect x="92.0" y="132.2" width="2" height="2" fill="#55574a" fill-opacity="0.55"/><rect x="93.6" y="133.6" width="2" height="1.6" fill="#9a9c86" fill-opacity="0.38"/><rect x="107.0" y="135.8" width="2" height="2" fill="#55574a" fill-opacity="0.55"/><rect x="108.6" y="137.2" width="2" height="1.6" fill="#9a9c86" fill-opacity="0.38"/><rect x="133.9" y="144.7" width="2" height="2" fill="#55574a" fill-opacity="0.55"/><rect x="135.5" y="146.1" width="2" height="1.6" fill="#9a9c86" fill-opacity="0.38"/><rect x="105.4" y="25.5" width="2" height="2" fill="#55574a" fill-opacity="0.55"/><rect x="107.0" y="26.9" width="2" height="1.6" fill="#9a9c86" fill-opacity="0.38"/><rect x="134.5" y="140.9" width="2" height="2" fill="#55574a" fill-opacity="0.55"/><rect x="136.1" y="142.3" width="2" height="1.6" fill="#9a9c86" fill-opacity="0.38"/><rect x="141.3" y="84.0" width="2" height="2" fill="#55574a" fill-opacity="0.55"/><rect x="142.9" y="85.4" width="2" height="1.6" fill="#9a9c86" fill-opacity="0.38"/><rect x="111.9" y="32.4" width="2" height="2" fill="#55574a" fill-opacity="0.55"/><rect x="113.5" y="33.8" width="2" height="1.6" fill="#9a9c86" fill-opacity="0.38"/><rect x="130.1" y="84.6" width="2" height="2" fill="#55574a" fill-opacity="0.55"/><rect x="131.7" y="86.0" width="2" height="1.6" fill="#9a9c86" fill-opacity="0.38"/><rect x="45.9" y="11.1" width="2" height="2" fill="#55574a" fill-opacity="0.55"/><rect x="47.5" y="12.5" width="2" height="1.6" fill="#9a9c86" fill-opacity="0.38"/><rect x="133.5" y="144.5" width="2" height="2" fill="#55574a" fill-opacity="0.55"/><rect x="135.1" y="145.9" width="2" height="1.6" fill="#9a9c86" fill-opacity="0.38"/><rect x="15.6" y="117.3" width="2" height="2" fill="#55574a" fill-opacity="0.55"/><rect x="17.2" y="118.7" width="2" height="1.6" fill="#9a9c86" fill-opacity="0.38"/><rect x="65.2" y="23.7" width="2" height="2" fill="#55574a" fill-opacity="0.55"/><rect x="66.8" y="25.1" width="2" height="1.6" fill="#9a9c86" fill-opacity="0.38"/><rect x="47.3" y="112.7" width="2" height="2" fill="#55574a" fill-opacity="0.55"/><rect x="48.9" y="114.1" width="2" height="1.6" fill="#9a9c86" fill-opacity="0.38"/><rect x="136.4" y="8.4" width="2" height="2" fill="#55574a" fill-opacity="0.55"/><rect x="138.0" y="9.8" width="2" height="1.6" fill="#9a9c86" fill-opacity="0.38"/><rect x="96.6" y="8.5" width="2" height="2" fill="#55574a" fill-opacity="0.55"/><rect x="98.2" y="9.9" width="2" height="1.6" fill="#9a9c86" fill-opacity="0.38"/><rect x="112.6" y="49.7" width="2" height="2" fill="#55574a" fill-opacity="0.55"/><rect x="114.2" y="51.1" width="2" height="1.6" fill="#9a9c86" fill-opacity="0.38"/><rect x="137.7" y="143.2" width="2" height="2" fill="#55574a" fill-opacity="0.55"/><rect x="139.3" y="144.6" width="2" height="1.6" fill="#9a9c86" fill-opacity="0.38"/><rect x="79.8" y="145.8" width="2" height="2" fill="#55574a" fill-opacity="0.55"/><rect x="81.4" y="147.2" width="2" height="1.6" fill="#9a9c86" fill-opacity="0.38"/><rect x="49.7" y="13.1" width="2" height="2" fill="#55574a" fill-opacity="0.55"/><rect x="51.3" y="14.5" width="2" height="1.6" fill="#9a9c86" fill-opacity="0.38"/><rect x="94.4" y="6.5" width="2" height="2" fill="#55574a" fill-opacity="0.55"/><rect x="96.0" y="7.9" width="2" height="1.6" fill="#9a9c86" fill-opacity="0.38"/><rect x="32.4" y="60.7" width="2" height="2" fill="#55574a" fill-opacity="0.55"/><rect x="34.0" y="62.1" width="2" height="1.6" fill="#9a9c86" fill-opacity="0.38"/><rect x="96.0" y="24.5" width="2" height="2" fill="#55574a" fill-opacity="0.55"/><rect x="97.6" y="25.9" width="2" height="1.6" fill="#9a9c86" fill-opacity="0.38"/><rect x="8.5" y="127.0" width="2" height="2" fill="#55574a" fill-opacity="0.55"/><rect x="10.1" y="128.4" width="2" height="1.6" fill="#9a9c86" fill-opacity="0.38"/><rect x="50.3" y="140.0" width="2" height="2" fill="#55574a" fill-opacity="0.55"/><rect x="51.9" y="141.4" width="2" height="1.6" fill="#9a9c86" fill-opacity="0.38"/><rect x="140.1" y="56.4" width="2" height="2" fill="#55574a" fill-opacity="0.55"/><rect x="141.7" y="57.8" width="2" height="1.6" fill="#9a9c86" fill-opacity="0.38"/><rect x="72.9" y="76.9" width="2" height="2" fill="#55574a" fill-opacity="0.55"/><rect x="74.5" y="78.3" width="2" height="1.6" fill="#9a9c86" fill-opacity="0.38"/><rect x="101.2" y="87.8" width="2" height="2" fill="#55574a" fill-opacity="0.55"/><rect x="102.8" y="89.2" width="2" height="1.6" fill="#9a9c86" fill-opacity="0.38"/><rect x="88.1" y="91.3" width="2" height="2" fill="#55574a" fill-opacity="0.55"/><rect x="89.7" y="92.7" width="2" height="1.6" fill="#9a9c86" fill-opacity="0.38"/><rect x="146.9" y="75.0" width="2" height="2" fill="#55574a" fill-opacity="0.55"/><rect x="148.5" y="76.4" width="2" height="1.6" fill="#9a9c86" fill-opacity="0.38"/><rect x="68.4" y="105.7" width="2" height="2" fill="#55574a" fill-opacity="0.55"/><rect x="70.0" y="107.1" width="2" height="1.6" fill="#9a9c86" fill-opacity="0.38"/><rect x="38.6" y="45.4" width="2" height="2" fill="#55574a" fill-opacity="0.55"/><rect x="40.2" y="46.8" width="2" height="1.6" fill="#9a9c86" fill-opacity="0.38"/><rect x="152.6" y="77.0" width="2" height="2" fill="#55574a" fill-opacity="0.55"/><rect x="154.2" y="78.4" width="2" height="1.6" fill="#9a9c86" fill-opacity="0.38"/><rect x="86.5" y="3.6" width="2" height="2" fill="#55574a" fill-opacity="0.55"/><rect x="88.1" y="5.0" width="2" height="1.6" fill="#9a9c86" fill-opacity="0.38"/><rect x="65.9" y="85.5" width="2" height="2" fill="#55574a" fill-opacity="0.55"/><rect x="67.5" y="86.9" width="2" height="1.6" fill="#9a9c86" fill-opacity="0.38"/><rect x="5.1" y="90.7" width="2" height="2" fill="#55574a" fill-opacity="0.55"/><rect x="6.7" y="92.1" width="2" height="1.6" fill="#9a9c86" fill-opacity="0.38"/><rect x="99.4" y="10.7" width="2" height="2" fill="#55574a" fill-opacity="0.55"/><rect x="101.0" y="12.1" width="2" height="1.6" fill="#9a9c86" fill-opacity="0.38"/><rect x="98.6" y="69.1" width="2" height="2" fill="#55574a" fill-opacity="0.55"/><rect x="100.2" y="70.5" width="2" height="1.6" fill="#9a9c86" fill-opacity="0.38"/><rect x="106.6" y="52.8" width="2" height="2" fill="#55574a" fill-opacity="0.55"/><rect x="108.2" y="54.2" width="2" height="1.6" fill="#9a9c86" fill-opacity="0.38"/><rect x="110.9" y="108.3" width="2" height="2" fill="#55574a" fill-opacity="0.55"/><rect x="112.5" y="109.7" width="2" height="1.6" fill="#9a9c86" fill-opacity="0.38"/><rect x="5.4" y="10.7" width="2" height="2" fill="#55574a" fill-opacity="0.55"/><rect x="7.0" y="12.1" width="2" height="1.6" fill="#9a9c86" fill-opacity="0.38"/><rect x="106.1" y="140.7" width="2" height="2" fill="#55574a" fill-opacity="0.55"/><rect x="107.7" y="142.1" width="2" height="1.6" fill="#9a9c86" fill-opacity="0.38"/><rect x="40.7" y="67.7" width="2" height="2" fill="#55574a" fill-opacity="0.55"/><rect x="42.3" y="69.1" width="2" height="1.6" fill="#9a9c86" fill-opacity="0.38"/><rect x="93.3" y="48.1" width="2" height="2" fill="#55574a" fill-opacity="0.55"/><rect x="94.9" y="49.5" width="2" height="1.6" fill="#9a9c86" fill-opacity="0.38"/><rect x="58.0" y="47.0" width="2" height="2" fill="#55574a" fill-opacity="0.55"/><rect x="59.6" y="48.4" width="2" height="1.6" fill="#9a9c86" fill-opacity="0.38"/><rect x="58.8" y="87.8" width="2" height="2" fill="#55574a" fill-opacity="0.55"/><rect x="60.4" y="89.2" width="2" height="1.6" fill="#9a9c86" fill-opacity="0.38"/><rect x="48.3" y="56.3" width="2" height="2" fill="#55574a" fill-opacity="0.55"/><rect x="49.9" y="57.7" width="2" height="1.6" fill="#9a9c86" fill-opacity="0.38"/><rect x="120.9" y="5.9" width="2" height="2" fill="#55574a" fill-opacity="0.55"/><rect x="122.5" y="7.3" width="2" height="1.6" fill="#9a9c86" fill-opacity="0.38"/><rect x="89.7" y="107.9" width="2" height="2" fill="#55574a" fill-opacity="0.55"/><rect x="91.3" y="109.3" width="2" height="1.6" fill="#9a9c86" fill-opacity="0.38"/><rect x="49.7" y="34.0" width="2" height="2" fill="#55574a" fill-opacity="0.55"/><rect x="51.3" y="35.4" width="2" height="1.6" fill="#9a9c86" fill-opacity="0.38"/><rect x="125.8" y="36.4" width="2" height="2" fill="#55574a" fill-opacity="0.55"/><rect x="127.4" y="37.8" width="2" height="1.6" fill="#9a9c86" fill-opacity="0.38"/><rect x="30.9" y="64.7" width="2" height="2" fill="#55574a" fill-opacity="0.55"/><rect x="32.5" y="66.1" width="2" height="1.6" fill="#9a9c86" fill-opacity="0.38"/><rect x="109.5" y="16.7" width="2" height="2" fill="#55574a" fill-opacity="0.55"/><rect x="111.1" y="18.1" width="2" height="1.6" fill="#9a9c86" fill-opacity="0.38"/><rect x="51.6" y="50.1" width="2" height="2" fill="#55574a" fill-opacity="0.55"/><rect x="53.2" y="51.5" width="2" height="1.6" fill="#9a9c86" fill-opacity="0.38"/><rect x="130.4" y="65.1" width="2" height="2" fill="#55574a" fill-opacity="0.55"/><rect x="132.0" y="66.5" width="2" height="1.6" fill="#9a9c86" fill-opacity="0.38"/><rect x="133.8" y="26.4" width="2" height="2" fill="#55574a" fill-opacity="0.55"/><rect x="135.4" y="27.8" width="2" height="1.6" fill="#9a9c86" fill-opacity="0.38"/><rect x="53.9" y="95.6" width="2" height="2" fill="#55574a" fill-opacity="0.55"/><rect x="55.5" y="97.0" width="2" height="1.6" fill="#9a9c86" fill-opacity="0.38"/><rect x="138.3" y="67.0" width="2" height="2" fill="#55574a" fill-opacity="0.55"/><rect x="139.9" y="68.4" width="2" height="1.6" fill="#9a9c86" fill-opacity="0.38"/><rect x="36.7" y="19.4" width="2" height="2" fill="#55574a" fill-opacity="0.55"/><rect x="38.3" y="20.8" width="2" height="1.6" fill="#9a9c86" fill-opacity="0.38"/><rect x="83.6" y="29.5" width="2" height="2" fill="#55574a" fill-opacity="0.55"/><rect x="85.2" y="30.9" width="2" height="1.6" fill="#9a9c86" fill-opacity="0.38"/><rect x="126.2" y="122.7" width="2" height="2" fill="#55574a" fill-opacity="0.55"/><rect x="127.8" y="124.1" width="2" height="1.6" fill="#9a9c86" fill-opacity="0.38"/><rect x="30.3" y="42.1" width="2" height="2" fill="#55574a" fill-opacity="0.55"/><rect x="31.9" y="43.5" width="2" height="1.6" fill="#9a9c86" fill-opacity="0.38"/><rect x="126.3" y="94.4" width="2" height="2" fill="#55574a" fill-opacity="0.55"/><rect x="127.9" y="95.8" width="2" height="1.6" fill="#9a9c86" fill-opacity="0.38"/><rect x="126.2" y="51.7" width="2" height="2" fill="#55574a" fill-opacity="0.55"/><rect x="127.8" y="53.1" width="2" height="1.6" fill="#9a9c86" fill-opacity="0.38"/><rect x="22.0" y="44.0" width="2" height="2" fill="#55574a" fill-opacity="0.55"/><rect x="23.6" y="45.4" width="2" height="1.6" fill="#9a9c86" fill-opacity="0.38"/><rect x="124.3" y="41.0" width="2" height="2" fill="#55574a" fill-opacity="0.55"/><rect x="125.9" y="42.4" width="2" height="1.6" fill="#9a9c86" fill-opacity="0.38"/><rect x="55.3" y="62.0" width="2" height="2" fill="#55574a" fill-opacity="0.55"/><rect x="56.9" y="63.4" width="2" height="1.6" fill="#9a9c86" fill-opacity="0.38"/><rect x="66.6" y="61.0" width="2" height="2" fill="#55574a" fill-opacity="0.55"/><rect x="68.2" y="62.4" width="2" height="1.6" fill="#9a9c86" fill-opacity="0.38"/><rect x="143.8" y="24.5" width="2" height="2" fill="#55574a" fill-opacity="0.55"/><rect x="145.4" y="25.9" width="2" height="1.6" fill="#9a9c86" fill-opacity="0.38"/><rect x="2.7" y="137.8" width="2" height="2" fill="#55574a" fill-opacity="0.55"/><rect x="4.3" y="139.2" width="2" height="1.6" fill="#9a9c86" fill-opacity="0.38"/><rect x="137.5" y="144.1" width="2" height="2" fill="#55574a" fill-opacity="0.55"/><rect x="139.1" y="145.5" width="2" height="1.6" fill="#9a9c86" fill-opacity="0.38"/><rect x="68.9" y="138.8" width="2" height="2" fill="#55574a" fill-opacity="0.55"/><rect x="70.5" y="140.2" width="2" height="1.6" fill="#9a9c86" fill-opacity="0.38"/><rect x="144.8" y="34.0" width="2" height="2" fill="#55574a" fill-opacity="0.55"/><rect x="146.4" y="35.4" width="2" height="1.6" fill="#9a9c86" fill-opacity="0.38"/><rect x="116.8" y="122.5" width="2" height="2" fill="#55574a" fill-opacity="0.55"/><rect x="118.4" y="123.9" width="2" height="1.6" fill="#9a9c86" fill-opacity="0.38"/><rect x="104.1" y="76.7" width="2" height="2" fill="#55574a" fill-opacity="0.55"/><rect x="105.7" y="78.1" width="2" height="1.6" fill="#9a9c86" fill-opacity="0.38"/><rect x="46.5" y="51.1" width="2" height="2" fill="#55574a" fill-opacity="0.55"/><rect x="48.1" y="52.5" width="2" height="1.6" fill="#9a9c86" fill-opacity="0.38"/><rect x="37.0" y="11.8" width="2" height="2" fill="#55574a" fill-opacity="0.55"/><rect x="38.6" y="13.2" width="2" height="1.6" fill="#9a9c86" fill-opacity="0.38"/><rect x="92.7" y="43.3" width="2" height="2" fill="#55574a" fill-opacity="0.55"/><rect x="94.3" y="44.7" width="2" height="1.6" fill="#9a9c86" fill-opacity="0.38"/><rect x="126.8" y="8.5" width="2" height="2" fill="#55574a" fill-opacity="0.55"/><rect x="128.4" y="9.9" width="2" height="1.6" fill="#9a9c86" fill-opacity="0.38"/><rect x="141.2" y="101.9" width="2" height="2" fill="#55574a" fill-opacity="0.55"/><rect x="142.8" y="103.3" width="2" height="1.6" fill="#9a9c86" fill-opacity="0.38"/><rect x="144.3" y="131.1" width="2" height="2" fill="#55574a" fill-opacity="0.55"/><rect x="145.9" y="132.5" width="2" height="1.6" fill="#9a9c86" fill-opacity="0.38"/><rect x="140.5" y="85.1" width="2" height="2" fill="#55574a" fill-opacity="0.55"/><rect x="142.1" y="86.5" width="2" height="1.6" fill="#9a9c86" fill-opacity="0.38"/><rect x="4.0" y="109.3" width="2" height="2" fill="#55574a" fill-opacity="0.55"/><rect x="5.6" y="110.7" width="2" height="1.6" fill="#9a9c86" fill-opacity="0.38"/><rect x="28.5" y="45.2" width="2" height="2" fill="#55574a" fill-opacity="0.55"/><rect x="30.1" y="46.6" width="2" height="1.6" fill="#9a9c86" fill-opacity="0.38"/><rect x="104.1" y="77.6" width="2" height="2" fill="#55574a" fill-opacity="0.55"/><rect x="105.7" y="79.0" width="2" height="1.6" fill="#9a9c86" fill-opacity="0.38"/><rect x="65.7" y="137.2" width="2" height="2" fill="#55574a" fill-opacity="0.55"/><rect x="67.3" y="138.6" width="2" height="1.6" fill="#9a9c86" fill-opacity="0.38"/><rect x="96.3" y="51.2" width="2" height="2" fill="#55574a" fill-opacity="0.55"/><rect x="97.9" y="52.6" width="2" height="1.6" fill="#9a9c86" fill-opacity="0.38"/><rect x="40.9" y="126.1" width="2" height="2" fill="#55574a" fill-opacity="0.55"/><rect x="42.5" y="127.5" width="2" height="1.6" fill="#9a9c86" fill-opacity="0.38"/><rect x="75.5" y="114.7" width="2" height="2" fill="#55574a" fill-opacity="0.55"/><rect x="77.1" y="116.1" width="2" height="1.6" fill="#9a9c86" fill-opacity="0.38"/><rect x="56.2" y="30.4" width="2" height="2" fill="#55574a" fill-opacity="0.55"/><rect x="57.8" y="31.8" width="2" height="1.6" fill="#9a9c86" fill-opacity="0.38"/><rect x="84.3" y="119.6" width="2" height="2" fill="#55574a" fill-opacity="0.55"/><rect x="85.9" y="121.0" width="2" height="1.6" fill="#9a9c86" fill-opacity="0.38"/><rect x="28.4" y="116.0" width="2" height="2" fill="#55574a" fill-opacity="0.55"/><rect x="30.0" y="117.4" width="2" height="1.6" fill="#9a9c86" fill-opacity="0.38"/><rect x="144.0" y="118.1" width="2" height="2" fill="#55574a" fill-opacity="0.55"/><rect x="145.6" y="119.5" width="2" height="1.6" fill="#9a9c86" fill-opacity="0.38"/><rect x="128.8" y="3.1" width="2" height="2" fill="#55574a" fill-opacity="0.55"/><rect x="130.4" y="4.5" width="2" height="1.6" fill="#9a9c86" fill-opacity="0.38"/><rect x="98.8" y="126.2" width="2" height="2" fill="#55574a" fill-opacity="0.55"/><rect x="100.4" y="127.6" width="2" height="1.6" fill="#9a9c86" fill-opacity="0.38"/><rect x="9.7" y="41.1" width="2" height="2" fill="#55574a" fill-opacity="0.55"/><rect x="11.3" y="42.5" width="2" height="1.6" fill="#9a9c86" fill-opacity="0.38"/></g></pattern><pattern id="redtx" width="10" height="24" patternUnits="userSpaceOnUse"><rect x="2.7" y="12.7" width="1" height="1" fill="#6a0a10" fill-opacity="0.5"/><rect x="0.5" y="7.8" width="1" height="1" fill="#e86a6a" fill-opacity="0.5"/><rect x="8.6" y="18.6" width="1" height="1" fill="#e86a6a" fill-opacity="0.5"/><rect x="1.2" y="1.6" width="1" height="1" fill="#e86a6a" fill-opacity="0.5"/><rect x="8.5" y="2.1" width="1" height="1" fill="#d04040" fill-opacity="0.5"/><rect x="4.9" y="3.8" width="1" height="1" fill="#e86a6a" fill-opacity="0.5"/><rect x="3.5" y="15.5" width="1" height="1" fill="#d04040" fill-opacity="0.5"/><rect x="3.0" y="6.4" width="1" height="1" fill="#6a0a10" fill-opacity="0.5"/><rect x="4.3" y="3.1" width="1" height="1" fill="#e86a6a" fill-opacity="0.5"/><rect x="7.2" y="9.1" width="1" height="1" fill="#e86a6a" fill-opacity="0.5"/><rect x="5.7" y="1.0" width="1" height="1" fill="#6a0a10" fill-opacity="0.5"/><rect x="6.0" y="18.8" width="1" height="1" fill="#6a0a10" fill-opacity="0.5"/><rect x="6.4" y="1.0" width="1" height="1" fill="#6a0a10" fill-opacity="0.5"/><rect x="0.5" y="15.1" width="1" height="1" fill="#d04040" fill-opacity="0.5"/><rect x="3.1" y="22.8" width="1" height="1" fill="#6a0a10" fill-opacity="0.5"/><rect x="4.6" y="5.9" width="1" height="1" fill="#d04040" fill-opacity="0.5"/><rect x="2.7" y="14.2" width="1" height="1" fill="#6a0a10" fill-opacity="0.5"/><rect x="2.2" y="3.1" width="1" height="1" fill="#e86a6a" fill-opacity="0.5"/><rect x="9.4" y="9.0" width="1" height="1" fill="#d04040" fill-opacity="0.5"/><rect x="7.9" y="6.3" width="1" height="1" fill="#6a0a10" fill-opacity="0.5"/><rect x="6.9" y="22.5" width="1" height="1" fill="#d04040" fill-opacity="0.5"/><rect x="6.6" y="21.3" width="1" height="1" fill="#6a0a10" fill-opacity="0.5"/><rect x="6.7" y="17.6" width="1" height="1" fill="#d04040" fill-opacity="0.5"/><rect x="5.3" y="19.5" width="1" height="1" fill="#d04040" fill-opacity="0.5"/><rect x="0.0" y="3.4" width="1" height="1" fill="#6a0a10" fill-opacity="0.5"/><rect x="0.4" y="2.2" width="1" height="1" fill="#e86a6a" fill-opacity="0.5"/><rect x="6.6" y="9.0" width="1" height="1" fill="#e86a6a" fill-opacity="0.5"/><rect x="3.4" y="20.5" width="1" height="1" fill="#e86a6a" fill-opacity="0.5"/><rect x="8.4" y="16.2" width="1" height="1" fill="#d04040" fill-opacity="0.5"/><rect x="9.5" y="13.9" width="1" height="1" fill="#e86a6a" fill-opacity="0.5"/><rect x="0.4" y="18.4" width="1" height="1" fill="#d04040" fill-opacity="0.5"/><rect x="5.3" y="5.7" width="1" height="1" fill="#d04040" fill-opacity="0.5"/><rect x="7.5" y="22.4" width="1" height="1" fill="#e86a6a" fill-opacity="0.5"/><rect x="5.5" y="20.9" width="1" height="1" fill="#e86a6a" fill-opacity="0.5"/><rect x="8.3" y="5.8" width="1" height="1" fill="#e86a6a" fill-opacity="0.5"/><rect x="6.5" y="10.9" width="1" height="1" fill="#d04040" fill-opacity="0.5"/><rect x="7.5" y="9.4" width="1" height="1" fill="#6a0a10" fill-opacity="0.5"/><rect x="6.0" y="22.5" width="1" height="1" fill="#d04040" fill-opacity="0.5"/><rect x="4.2" y="2.0" width="1" height="1" fill="#d04040" fill-opacity="0.5"/><rect x="2.4" y="22.3" width="1" height="1" fill="#d04040" fill-opacity="0.5"/><rect x="9.7" y="10.0" width="1" height="1" fill="#d04040" fill-opacity="0.5"/><rect x="7.6" y="16.2" width="1" height="1" fill="#d04040" fill-opacity="0.5"/><rect x="6.9" y="3.7" width="1" height="1" fill="#6a0a10" fill-opacity="0.5"/><rect x="9.0" y="3.6" width="1" height="1" fill="#e86a6a" fill-opacity="0.5"/><rect x="5.0" y="11.6" width="1" height="1" fill="#d04040" fill-opacity="0.5"/><rect x="5.2" y="10.6" width="1" height="1" fill="#d04040" fill-opacity="0.5"/><rect x="8.6" y="3.3" width="1" height="1" fill="#e86a6a" fill-opacity="0.5"/><rect x="1.5" y="12.4" width="1" height="1" fill="#e86a6a" fill-opacity="0.5"/><rect x="8.5" y="12.9" width="1" height="1" fill="#6a0a10" fill-opacity="0.5"/><rect x="6.7" y="20.5" width="1" height="1" fill="#d04040" fill-opacity="0.5"/><rect x="8.5" y="14.0" width="1" height="1" fill="#6a0a10" fill-opacity="0.5"/><rect x="8.9" y="7.4" width="1" height="1" fill="#6a0a10" fill-opacity="0.5"/><rect x="4.8" y="9.2" width="1" height="1" fill="#e86a6a" fill-opacity="0.5"/><rect x="5.7" y="5.7" width="1" height="1" fill="#6a0a10" fill-opacity="0.5"/><rect x="7.7" y="3.4" width="1" height="1" fill="#d04040" fill-opacity="0.5"/><rect x="4.8" y="14.4" width="1" height="1" fill="#6a0a10" fill-opacity="0.5"/><rect x="5.8" y="21.6" width="1" height="1" fill="#d04040" fill-opacity="0.5"/><rect x="5.6" y="11.6" width="1" height="1" fill="#d04040" fill-opacity="0.5"/><rect x="0.7" y="22.7" width="1" height="1" fill="#d04040" fill-opacity="0.5"/><rect x="8.8" y="1.1" width="1" height="1" fill="#e86a6a" fill-opacity="0.5"/></pattern></defs>
<g clip-path="url(#mapclip)">
<rect x="137" y="92" width="1625" height="958" fill="#eff0d1"/>
<path d="M262.0 92.0C298.0 92.0 338.0 83.3 347.9 92.0C357.9 100.7 324.7 126.7 321.9 144.1C319.1 161.4 328.0 184.0 331.0 196.2C334.0 208.3 334.9 208.3 340.1 217.0C345.3 225.7 358.8 239.1 362.3 248.2C365.7 257.4 362.9 264.3 361.0 271.7C359.0 279.1 358.4 288.8 350.5 292.5C342.7 296.2 328.8 294.0 314.1 293.8C299.3 293.6 292.4 292.1 262.0 291.2C231.6 290.4 153.5 321.8 131.8 288.6C110.1 255.4 110.1 124.8 131.8 92.0C153.5 59.2 226.0 92.0 262.0 92.0Z" fill="#d6d8b0" filter="url(#b3)"/>
<path d="M342.7 92.0C376.1 90.7 510.7 87.7 543.2 92.0C575.8 96.3 538.3 108.1 538.0 118.0C537.8 128.0 542.8 139.7 541.9 151.9C541.1 164.0 537.0 181.0 532.8 191.0C528.7 200.9 525.0 206.6 517.2 211.8C509.4 217.0 495.5 219.6 486.0 222.2C476.4 224.8 467.3 226.1 459.9 227.4C452.5 228.7 448.6 229.2 441.7 230.0C434.7 230.9 423.9 233.9 418.2 232.6C412.6 231.3 413.0 224.8 407.8 222.2C402.6 219.6 398.3 217.9 387.0 217.0C375.7 216.1 349.7 220.5 340.1 217.0C330.6 213.5 333.1 208.3 329.7 196.2C326.3 184.0 317.6 160.1 319.8 144.1C322.0 128.0 338.9 108.5 342.7 99.8C346.5 91.1 309.3 93.3 342.7 92.0Z" fill="#e2e3be" filter="url(#b3)"/>
<path d="M449.5 271.7C452.8 269.1 464.7 267.8 470.3 269.1C476.0 270.4 479.4 275.6 483.4 279.5C487.3 283.4 490.3 287.7 493.8 292.5C497.2 297.3 501.6 302.5 504.2 308.1C506.8 313.8 510.7 320.7 509.4 326.4C508.1 332.0 502.0 337.7 496.4 342.0C490.7 346.3 484.2 350.2 475.5 352.4C466.9 354.6 453.0 355.5 444.3 355.0C435.6 354.6 428.2 353.7 423.5 349.8C418.7 345.9 415.6 337.2 415.6 331.6C415.6 325.9 419.1 321.2 423.5 316.0C427.8 310.8 437.1 305.5 441.7 300.3C446.2 295.1 449.5 289.5 450.8 284.7C452.1 279.9 446.2 274.3 449.5 271.7Z" fill="#e2e3be" filter="url(#b3)"/>
<path d="M137.0 92.0C162.5 56.5 262.8 77.3 290.0 92.0C317.2 106.7 295.3 157.0 300.0 180.0C304.7 203.0 318.0 213.3 318.0 230.0C318.0 246.7 308.0 268.0 300.0 280.0C292.0 292.0 281.7 299.3 270.0 302.0C258.3 304.7 241.7 297.7 230.0 296.0C218.3 294.3 210.0 291.8 200.0 292.0C190.0 292.2 180.5 294.8 170.0 297.0C159.5 299.2 142.5 339.2 137.0 305.0C131.5 270.8 111.5 127.5 137.0 92.0Z" fill="#e6dcaa" filter="url(#b3)"/>
<path d="M137.0 215.0C147.5 199.8 184.2 207.8 200.0 212.0C215.8 216.2 227.3 227.8 232.0 240.0C236.7 252.2 233.3 276.5 228.0 285.0C222.7 293.5 209.7 289.2 200.0 291.0C190.3 292.8 180.5 294.0 170.0 296.0C159.5 298.0 142.5 316.5 137.0 303.0C131.5 289.5 126.5 230.2 137.0 215.0Z" fill="#e3d39b" filter="url(#b3)"/>
<path d="M137.0 225.0C144.2 212.5 168.7 220.8 180.0 225.0C191.3 229.2 202.5 239.2 205.0 250.0C207.5 260.8 206.3 281.7 195.0 290.0C183.7 298.3 146.7 310.8 137.0 300.0C127.3 289.2 129.8 237.5 137.0 225.0Z" fill="#e8d29e" filter="url(#b3)"/>
<path d="M470.0 362.0C533.3 361.3 492.8 358.8 500.0 358.0C507.2 357.2 506.7 358.7 513.0 357.0C519.3 355.3 529.5 346.7 538.0 348.0C546.5 349.3 552.5 357.8 564.0 365.0C575.5 372.2 592.8 382.5 607.0 391.0C621.2 399.5 639.0 407.5 649.0 416.0C659.0 424.5 664.8 433.3 667.0 442.0C669.2 450.7 658.0 463.5 662.0 468.0C666.0 472.5 680.5 469.3 691.0 469.0C701.5 468.7 718.5 463.5 725.0 466.0C731.5 468.5 730.0 477.5 730.0 484.0C730.0 490.5 719.8 499.7 725.0 505.0C730.2 510.3 751.5 516.0 761.0 516.0C770.5 516.0 775.0 510.3 782.0 505.0C789.0 499.7 796.5 488.8 803.0 484.0C809.5 479.2 814.8 475.2 821.0 476.0C827.2 476.8 835.2 484.7 840.0 489.0C844.8 493.3 844.8 499.3 850.0 502.0C855.2 504.7 865.8 501.0 871.0 505.0C876.2 509.0 878.5 518.2 881.0 526.0C883.5 533.8 882.5 550.3 886.0 552.0C889.5 553.7 896.3 539.5 902.0 536.0C907.7 532.5 914.3 529.7 920.0 531.0C925.7 532.3 932.8 538.8 936.0 544.0C939.2 549.2 934.2 560.7 939.0 562.0C943.8 563.3 957.3 554.2 965.0 552.0C972.7 549.8 979.0 547.3 985.0 549.0C991.0 550.7 994.0 561.0 1001.0 562.0C1008.0 563.0 1020.0 557.2 1027.0 555.0C1034.0 552.8 1038.8 544.8 1043.0 549.0C1047.2 553.2 1050.5 569.5 1052.0 580.0C1053.5 590.5 1050.8 602.5 1052.0 612.0C1053.2 621.5 1059.0 627.8 1059.0 637.0C1059.0 646.2 1051.2 658.3 1052.0 667.0C1052.8 675.7 1058.2 683.2 1064.0 689.0C1069.8 694.8 1079.0 699.0 1087.0 702.0C1095.0 705.0 1103.7 703.7 1112.0 707.0C1120.3 710.3 1136.2 717.0 1137.0 722.0C1137.8 727.0 1122.8 730.8 1117.0 737.0C1111.2 743.2 1103.7 752.0 1102.0 759.0C1100.3 766.0 1103.3 771.5 1107.0 779.0C1110.7 786.5 1120.7 796.0 1124.0 804.0C1127.3 812.0 1124.8 819.0 1127.0 827.0C1129.2 835.0 1132.8 845.3 1137.0 852.0C1141.2 858.7 1147.0 861.2 1152.0 867.0C1157.0 872.8 1161.2 881.2 1167.0 887.0C1172.8 892.8 1181.2 896.2 1187.0 902.0C1192.8 907.8 1195.8 915.3 1202.0 922.0C1208.2 928.7 1218.7 933.7 1224.0 942.0C1229.3 950.3 1233.5 963.7 1234.0 972.0C1234.5 980.3 1230.2 979.0 1227.0 992.0C1223.8 1005.0 1217.0 1037.0 1215.0 1050.0C1213.0 1063.0 1397.5 1066.7 1215.0 1070.0C1032.5 1073.3 302.5 1188.0 120.0 1070.0C-62.5 952.0 61.7 480.0 120.0 362.0C178.3 244.0 406.7 362.7 470.0 362.0Z" fill="#e2e3be" filter="url(#b3)"/>
<path d="M480.0 372.0C543.3 373.3 493.3 375.3 500.0 380.0C506.7 384.7 513.3 390.0 520.0 400.0C526.7 410.0 533.3 426.7 540.0 440.0C546.7 453.3 553.3 468.3 560.0 480.0C566.7 491.7 573.3 501.5 580.0 510.0C586.7 518.5 590.0 527.2 600.0 531.0C610.0 534.8 627.8 533.5 640.0 533.0C652.2 532.5 664.7 526.0 673.0 528.0C681.3 530.0 681.3 538.8 690.0 545.0C698.7 551.2 715.7 563.3 725.0 565.0C734.3 566.7 740.0 562.5 746.0 555.0C752.0 547.5 751.5 531.2 761.0 520.0C770.5 508.8 793.0 494.7 803.0 488.0C813.0 481.3 814.8 479.3 821.0 480.0C827.2 480.7 835.2 487.7 840.0 492.0C844.8 496.3 844.8 503.2 850.0 506.0C855.2 508.8 865.8 505.0 871.0 509.0C876.2 513.0 878.8 521.5 881.0 530.0C883.2 538.5 880.8 551.7 884.0 560.0C887.2 568.3 892.3 573.3 900.0 580.0C907.7 586.7 920.0 594.2 930.0 600.0C940.0 605.8 950.0 608.3 960.0 615.0C970.0 621.7 981.7 630.8 990.0 640.0C998.3 649.2 1008.0 656.3 1010.0 670.0C1012.0 683.7 999.2 712.2 1002.0 722.0C1004.8 731.8 1019.5 724.0 1027.0 729.0C1034.5 734.0 1040.8 744.8 1047.0 752.0C1053.2 759.2 1059.0 765.3 1064.0 772.0C1069.0 778.7 1077.8 784.2 1077.0 792.0C1076.2 799.8 1062.3 811.5 1059.0 819.0C1055.7 826.5 1054.0 831.2 1057.0 837.0C1060.0 842.8 1068.3 852.3 1077.0 854.0C1085.7 855.7 1103.2 844.0 1109.0 847.0C1114.8 850.0 1113.2 863.7 1112.0 872.0C1110.8 880.3 1100.3 889.5 1102.0 897.0C1103.7 904.5 1117.0 908.7 1122.0 917.0C1127.0 925.3 1127.0 937.8 1132.0 947.0C1137.0 956.2 1147.0 964.5 1152.0 972.0C1157.0 979.5 1159.0 979.0 1162.0 992.0C1165.0 1005.0 1168.7 1037.0 1170.0 1050.0C1171.3 1063.0 1345.0 1066.7 1170.0 1070.0C995.0 1073.3 295.0 1186.3 120.0 1070.0C-55.0 953.7 60.0 488.3 120.0 372.0C180.0 255.7 416.7 370.7 480.0 372.0Z" fill="#d6d8b0" filter="url(#b3)"/>
<path d="M137.0 322.0C153.7 321.3 192.8 318.0 220.0 318.0C247.2 318.0 276.7 320.7 300.0 322.0C323.3 323.3 343.3 324.3 360.0 326.0C376.7 327.7 386.7 328.8 400.0 332.0C413.3 335.2 428.3 340.0 440.0 345.0C451.7 350.0 461.7 355.3 470.0 362.0C478.3 368.7 484.2 373.7 490.0 385.0C495.8 396.3 500.0 415.8 505.0 430.0C510.0 444.2 513.3 456.7 520.0 470.0C526.7 483.3 535.8 497.5 545.0 510.0C554.2 522.5 565.8 535.8 575.0 545.0C584.2 554.2 587.2 562.2 600.0 565.0C612.8 567.8 634.7 561.2 652.0 562.0C669.3 562.8 685.8 566.0 704.0 570.0C722.2 574.0 748.0 584.2 761.0 586.0C774.0 587.8 769.8 580.2 782.0 581.0C794.2 581.8 821.0 586.7 834.0 591.0C847.0 595.3 851.3 604.3 860.0 607.0C868.7 609.7 875.2 604.5 886.0 607.0C896.8 609.5 914.2 616.8 925.0 622.0C935.8 627.2 942.7 630.0 951.0 638.0C959.3 646.0 973.5 659.7 975.0 670.0C976.5 680.3 966.0 691.3 960.0 700.0C954.0 708.7 938.3 714.2 939.0 722.0C939.7 729.8 955.7 738.7 964.0 747.0C972.3 755.3 980.7 765.8 989.0 772.0C997.3 778.2 1008.5 778.7 1014.0 784.0C1019.5 789.3 1022.3 797.7 1022.0 804.0C1021.7 810.3 1015.3 814.8 1012.0 822.0C1008.7 829.2 1001.2 838.7 1002.0 847.0C1002.8 855.3 1012.8 863.7 1017.0 872.0C1021.2 880.3 1022.0 888.7 1027.0 897.0C1032.0 905.3 1041.7 913.7 1047.0 922.0C1052.3 930.3 1054.0 938.7 1059.0 947.0C1064.0 955.3 1072.0 964.5 1077.0 972.0C1082.0 979.5 1086.0 979.0 1089.0 992.0C1092.0 1005.0 1094.0 1037.0 1095.0 1050.0C1096.0 1063.0 1257.5 1066.7 1095.0 1070.0C932.5 1073.3 282.5 1194.7 120.0 1070.0C-42.5 945.3 117.2 446.7 120.0 322.0C122.8 197.3 120.3 322.7 137.0 322.0Z" fill="#e6dcaa" filter="url(#b4)"/>
<path d="M137.0 385.0C160.3 385.5 222.8 384.7 260.0 388.0C297.2 391.3 333.3 394.7 360.0 405.0C386.7 415.3 405.0 435.8 420.0 450.0C435.0 464.2 440.0 476.7 450.0 490.0C460.0 503.3 465.0 518.3 480.0 530.0C495.0 541.7 520.0 550.7 540.0 560.0C560.0 569.3 583.5 580.0 600.0 586.0C616.5 592.0 626.0 590.0 639.0 596.0C652.0 602.0 662.8 615.0 678.0 622.0C693.2 629.0 712.7 634.0 730.0 638.0C747.3 642.0 764.7 644.3 782.0 646.0C799.3 647.7 821.0 646.7 834.0 648.0C847.0 649.3 851.5 648.7 860.0 654.0C868.5 659.3 881.7 669.0 885.0 680.0C888.3 691.0 879.3 709.7 880.0 720.0C880.7 730.3 882.8 735.5 889.0 742.0C895.2 748.5 908.7 751.5 917.0 759.0C925.3 766.5 929.8 779.5 939.0 787.0C948.2 794.5 967.3 797.3 972.0 804.0C976.7 810.7 970.3 819.8 967.0 827.0C963.7 834.2 950.3 839.5 952.0 847.0C953.7 854.5 969.5 863.7 977.0 872.0C984.5 880.3 990.3 888.7 997.0 897.0C1003.7 905.3 1012.0 913.7 1017.0 922.0C1022.0 930.3 1025.3 935.3 1027.0 947.0C1028.7 958.7 1028.2 974.8 1027.0 992.0C1025.8 1009.2 1021.2 1037.0 1020.0 1050.0C1018.8 1063.0 1170.0 1066.7 1020.0 1070.0C870.0 1073.3 270.0 1184.2 120.0 1070.0C-30.0 955.8 117.2 499.2 120.0 385.0C122.8 270.8 113.7 384.5 137.0 385.0Z" fill="#e3d39b" filter="url(#b5)"/>
<path d="M137.0 440.0C157.0 440.8 209.5 440.0 240.0 445.0C270.5 450.0 298.3 459.2 320.0 470.0C341.7 480.8 356.7 495.0 370.0 510.0C383.3 525.0 386.7 547.5 400.0 560.0C413.3 572.5 430.0 580.0 450.0 585.0C470.0 590.0 495.0 587.3 520.0 590.0C545.0 592.7 582.3 595.7 600.0 601.0C617.7 606.3 615.2 614.2 626.0 622.0C636.8 629.8 652.0 641.5 665.0 648.0C678.0 654.5 691.5 656.5 704.0 661.0C716.5 665.5 730.7 668.5 740.0 675.0C749.3 681.5 751.7 689.2 760.0 700.0C768.3 710.8 778.3 725.0 790.0 740.0C801.7 755.0 815.0 780.0 830.0 790.0C845.0 800.0 858.3 796.7 880.0 800.0C901.7 803.3 945.8 805.0 960.0 810.0C974.2 815.0 970.0 824.7 965.0 830.0C960.0 835.3 944.2 838.7 930.0 842.0C915.8 845.3 890.0 843.7 880.0 850.0C870.0 856.3 866.7 871.7 870.0 880.0C873.3 888.3 885.0 893.3 900.0 900.0C915.0 906.7 943.3 911.7 960.0 920.0C976.7 928.3 992.8 936.7 1000.0 950.0C1007.2 963.3 1004.7 983.3 1003.0 1000.0C1001.3 1016.7 992.2 1038.3 990.0 1050.0C987.8 1061.7 1135.0 1066.7 990.0 1070.0C845.0 1073.3 265.0 1175.0 120.0 1070.0C-25.0 965.0 117.2 545.0 120.0 440.0C122.8 335.0 117.0 439.2 137.0 440.0Z" fill="#dcc88e" filter="url(#b7)"/>
<path d="M137.0 520.0C155.3 521.7 202.8 520.0 230.0 530.0C257.2 540.0 278.3 560.0 300.0 580.0C321.7 600.0 336.7 628.3 360.0 650.0C383.3 671.7 410.0 693.3 440.0 710.0C470.0 726.7 510.0 736.7 540.0 750.0C570.0 763.3 595.0 773.3 620.0 790.0C645.0 806.7 670.0 828.3 690.0 850.0C710.0 871.7 728.3 895.0 740.0 920.0C751.7 945.0 756.7 978.3 760.0 1000.0C763.3 1021.7 760.0 1038.3 760.0 1050.0C760.0 1061.7 866.7 1066.7 760.0 1070.0C653.3 1073.3 226.7 1161.7 120.0 1070.0C13.3 978.3 117.2 611.7 120.0 520.0C122.8 428.3 118.7 518.3 137.0 520.0Z" fill="#c9b57c" filter="url(#b10)"/>
<path d="M137.0 640.0C153.7 643.3 194.5 646.7 220.0 660.0C245.5 673.3 266.7 698.3 290.0 720.0C313.3 741.7 335.0 770.0 360.0 790.0C385.0 810.0 413.3 823.3 440.0 840.0C466.7 856.7 496.7 870.0 520.0 890.0C543.3 910.0 566.7 933.3 580.0 960.0C593.3 986.7 596.7 1031.7 600.0 1050.0C603.3 1068.3 680.0 1066.7 600.0 1070.0C520.0 1073.3 200.0 1141.7 120.0 1070.0C40.0 998.3 117.2 711.7 120.0 640.0C122.8 568.3 120.3 636.7 137.0 640.0Z" fill="#ab955b" filter="url(#b12)"/>
<path d="M137.0 760.0C150.3 763.3 179.5 766.7 200.0 780.0C220.5 793.3 240.0 820.0 260.0 840.0C280.0 860.0 300.0 878.3 320.0 900.0C340.0 921.7 366.7 945.0 380.0 970.0C393.3 995.0 396.7 1033.3 400.0 1050.0C403.3 1066.7 446.7 1066.7 400.0 1070.0C353.3 1073.3 166.7 1121.7 120.0 1070.0C73.3 1018.3 117.2 811.7 120.0 760.0C122.8 708.3 123.7 756.7 137.0 760.0Z" fill="#917c46" filter="url(#b12)"/>
<path d="M137.0 880.0C148.7 883.3 174.5 886.7 190.0 900.0C205.5 913.3 220.0 935.0 230.0 960.0C240.0 985.0 246.7 1031.7 250.0 1050.0C253.3 1068.3 271.7 1066.7 250.0 1070.0C228.3 1073.3 141.7 1101.7 120.0 1070.0C98.3 1038.3 117.2 911.7 120.0 880.0C122.8 848.3 125.3 876.7 137.0 880.0Z" fill="#786739" filter="url(#b12)"/>
<g>
<path d="M137.0 542.0C142.6 452.0 160.3 548.7 170.3 545.3C180.3 542.0 188.7 526.4 197.0 522.0C205.3 517.6 210.3 517.8 220.3 518.7C230.3 519.5 249.2 521.4 257.0 527.0C264.8 532.6 258.1 545.6 267.0 552.0C275.9 558.4 297.6 563.7 310.3 565.3C323.1 567.0 334.2 561.2 343.7 562.0C353.1 562.8 359.8 567.0 367.0 570.3C374.2 573.7 382.8 576.7 387.0 582.0C391.2 587.3 392.0 594.5 392.0 602.0C392.0 609.5 387.3 618.7 387.0 627.0C386.7 635.3 392.0 643.7 390.3 652.0C388.7 660.3 377.6 668.7 377.0 677.0C376.4 685.3 381.2 699.5 387.0 702.0C392.8 704.5 399.5 696.4 412.0 692.0C424.5 687.6 449.5 678.7 462.0 675.3C474.5 672.0 478.7 670.1 487.0 672.0C495.3 673.9 505.3 687.0 512.0 687.0C518.7 687.0 521.2 675.1 527.0 672.0C532.8 668.9 542.0 665.9 547.0 668.7C552.0 671.4 556.2 679.8 557.0 688.7C557.8 697.6 549.8 713.1 552.0 722.0C554.2 730.9 561.7 738.7 570.3 742.0C578.9 745.3 595.3 743.1 603.7 742.0C612.0 740.9 611.4 733.7 620.3 735.3C629.2 737.0 646.4 747.6 657.0 752.0C667.6 756.4 675.9 758.1 683.7 762.0C691.4 765.9 694.8 772.0 703.7 775.3C712.6 778.7 724.8 778.7 737.0 782.0C749.2 785.3 768.1 789.2 777.0 795.3C785.9 801.4 788.1 770.3 790.3 818.7C792.6 867.0 899.2 1040.9 790.3 1085.3C681.4 1129.8 245.9 1175.9 137.0 1085.3C28.1 994.8 131.4 632.0 137.0 542.0Z" fill="url(#rough)"/>
<path d="M137.0 452.0C152.6 447.8 214.8 449.5 230.3 452.0C245.9 454.5 234.8 463.7 230.3 467.0C225.9 470.3 213.7 471.7 203.7 472.0C193.7 472.3 181.4 467.8 170.3 468.7C159.2 469.5 142.6 479.8 137.0 477.0C131.4 474.2 121.4 456.2 137.0 452.0Z" fill="url(#rough)"/>
<path d="M1059.5 537.0C1066.6 537.8 1084.1 545.3 1087.0 549.5C1089.9 553.7 1084.1 554.9 1077.0 562.0C1069.9 569.1 1055.8 581.2 1044.5 592.0C1033.2 602.8 1020.8 617.0 1009.5 627.0C998.2 637.0 985.8 642.4 977.0 652.0C968.2 661.6 964.9 673.2 957.0 684.5C949.1 695.8 941.2 708.2 929.5 719.5C917.8 730.8 895.8 736.6 887.0 752.0C878.2 767.4 889.9 802.0 877.0 812.0C864.1 822.0 821.6 819.1 809.5 812.0C797.4 804.9 798.7 786.2 804.5 769.5C810.3 752.8 835.3 729.5 844.5 712.0C853.7 694.5 848.7 676.6 859.5 664.5C870.3 652.4 895.3 648.2 909.5 639.5C923.7 630.8 931.2 621.2 944.5 612.0C957.8 602.8 976.2 592.4 989.5 584.5C1002.8 576.6 1015.3 571.2 1024.5 564.5C1033.7 557.8 1038.7 549.1 1044.5 544.5C1050.3 539.9 1052.4 536.2 1059.5 537.0Z" fill="url(#rough)"/>
<path d="M804.5 722.0C828.7 722.0 899.9 717.8 912.0 722.0C924.1 726.2 881.6 737.4 877.0 747.0C872.4 756.6 882.8 771.2 884.5 779.5C886.2 787.8 888.2 791.6 887.0 797.0C885.8 802.4 882.8 807.0 877.0 812.0C871.2 817.0 858.2 820.3 852.0 827.0C845.8 833.7 843.7 842.8 839.5 852.0C835.3 861.2 829.5 870.3 827.0 882.0C824.5 893.7 826.2 912.4 824.5 922.0C822.8 931.6 822.4 937.8 817.0 939.5C811.6 941.2 798.7 933.7 792.0 932.0C785.3 930.3 781.2 929.9 777.0 929.5C772.8 929.1 768.7 964.1 767.0 929.5C765.3 894.9 760.8 756.6 767.0 722.0C773.2 687.4 780.3 722.0 804.5 722.0Z" fill="url(#rough)"/>
<path d="M132.9 364.4C135.6 348.5 144.1 367.2 149.2 370.5C154.3 373.9 158.7 379.7 163.5 384.8C168.2 389.9 173.3 394.3 177.7 401.1C182.1 407.9 187.2 418.1 190.0 425.5C192.7 433.0 194.4 439.8 194.0 445.9C193.7 452.0 192.3 458.1 187.9 462.2C183.5 466.3 176.7 469.7 167.5 470.3C158.4 471.0 138.7 483.9 132.9 466.3C127.2 448.6 130.2 380.4 132.9 364.4Z" fill="url(#rough)"/>
</g>
<path d="M502.4 240.6C501.5 242.1 500.6 243.4 498.8 244.5C497.0 245.6 494.7 246.9 491.7 247.2C488.6 247.6 484.1 247.3 480.3 246.6C476.6 246.0 472.6 244.8 469.2 243.4C465.7 242.1 460.9 240.2 459.5 238.5C458.1 236.8 460.2 234.9 460.9 233.3C461.7 231.7 462.0 230.0 464.0 229.0C466.0 228.0 469.5 227.5 472.7 227.2C476.0 227.0 479.8 227.1 483.7 227.5C487.6 228.0 492.7 228.6 496.1 229.9C499.6 231.3 503.3 233.7 504.3 235.5C505.4 237.3 503.3 239.1 502.4 240.6Z" fill="url(#woods)"/>
<path d="M710.9 188.7C710.8 190.6 709.5 192.6 708.5 194.4C707.5 196.1 706.4 198.5 704.8 199.3C703.2 200.1 700.7 199.4 698.7 199.4C696.7 199.3 694.6 199.6 692.8 198.9C690.9 198.2 688.8 196.8 687.6 195.1C686.4 193.3 685.6 190.8 685.6 188.7C685.6 186.6 686.6 184.1 687.8 182.4C689.0 180.7 691.0 179.3 692.8 178.5C694.6 177.7 696.8 177.5 698.7 177.7C700.5 177.9 702.1 178.9 703.8 179.7C705.6 180.6 707.9 181.1 709.1 182.6C710.3 184.1 711.0 186.7 710.9 188.7Z" fill="url(#woods)"/>
<path d="M753.4 183.7C753.2 185.4 752.2 186.9 751.4 188.5C750.7 190.1 750.1 192.4 748.8 193.2C747.5 194.1 745.2 193.8 743.7 193.6C742.1 193.3 740.7 192.5 739.4 191.6C738.0 190.8 736.4 189.9 735.7 188.6C735.0 187.3 735.2 185.3 735.2 183.7C735.3 182.0 735.1 180.2 735.8 178.8C736.5 177.4 737.9 176.1 739.2 175.4C740.5 174.6 742.1 174.5 743.7 174.3C745.3 174.1 747.3 173.6 748.8 174.2C750.3 174.9 751.9 176.5 752.7 178.1C753.4 179.7 753.6 181.9 753.4 183.7Z" fill="url(#woods)"/>
<path d="M702.5 309.2C701.8 313.2 698.1 317.3 694.1 320.6C690.1 323.8 684.9 326.3 678.5 328.7C672.2 331.2 663.6 335.5 656.1 335.1C648.5 334.7 639.4 329.8 633.3 326.4C627.3 323.0 623.1 318.7 619.8 314.5C616.5 310.3 613.0 305.5 613.5 301.4C614.0 297.3 618.9 293.6 622.7 289.9C626.5 286.1 630.0 280.5 636.3 279.0C642.7 277.5 652.6 280.0 660.8 280.6C669.1 281.2 679.8 280.1 686.0 282.7C692.1 285.2 695.1 291.7 697.9 296.1C700.6 300.5 703.1 305.1 702.5 309.2Z" fill="url(#woods)"/>
<path d="M567.3 306.1C567.7 310.9 568.9 316.2 568.6 320.6C568.3 324.9 567.0 330.5 565.4 332.2C563.8 333.8 561.0 331.1 559.1 330.5C557.1 329.9 555.6 330.0 553.8 328.5C552.0 327.1 549.5 325.2 548.3 321.8C547.1 318.3 546.8 312.5 546.4 307.9C546.0 303.3 545.4 297.8 546.0 294.1C546.5 290.4 548.5 287.7 550.0 285.9C551.5 284.0 553.2 283.0 554.9 283.0C556.6 283.1 558.2 284.7 560.1 286.2C561.9 287.7 564.7 288.6 565.9 291.9C567.1 295.2 566.8 301.3 567.3 306.1Z" fill="url(#woods)"/>
<path d="M751.1 312.0C751.2 313.6 750.0 315.5 749.1 316.9C748.3 318.3 747.2 319.7 746.0 320.4C744.8 321.1 743.4 320.9 742.0 320.9C740.6 321.0 739.0 321.5 737.7 320.9C736.4 320.3 734.8 319.0 734.0 317.5C733.2 316.0 732.7 313.8 732.7 312.0C732.7 310.2 733.1 307.8 734.0 306.5C734.9 305.1 736.8 304.6 738.1 303.9C739.4 303.2 740.7 302.5 742.0 302.5C743.3 302.6 744.7 303.4 745.8 304.2C746.9 305.0 747.7 306.1 748.6 307.4C749.5 308.7 751.0 310.4 751.1 312.0Z" fill="url(#woods)"/>
<path d="M487.9 335.3C488.5 338.6 485.7 342.6 482.7 345.7C479.6 348.7 474.9 352.3 469.6 353.7C464.2 355.1 456.7 354.0 450.3 354.0C443.9 354.0 435.7 355.3 431.1 353.7C426.6 352.0 425.9 347.2 422.8 344.1C419.8 341.0 413.5 338.5 412.7 335.3C412.0 332.2 414.7 327.8 418.1 325.1C421.5 322.3 427.8 320.7 433.1 318.9C438.5 317.0 444.3 314.2 450.3 313.9C456.4 313.6 464.5 315.1 469.3 317.1C474.1 319.2 476.0 323.1 479.1 326.2C482.2 329.2 487.3 332.1 487.9 335.3Z" fill="url(#woods)"/>
<path d="M665.1 370.3C664.9 372.1 664.7 373.9 663.9 375.3C663.1 376.7 661.6 378.1 660.2 378.7C658.8 379.4 657.0 379.1 655.3 379.2C653.7 379.2 651.8 379.5 650.4 378.8C649.1 378.1 648.4 376.4 647.3 374.9C646.3 373.5 644.4 372.0 644.2 370.3C644.1 368.7 645.3 366.6 646.3 365.1C647.4 363.7 648.8 362.4 650.3 361.7C651.8 360.9 653.7 360.5 655.3 360.6C656.9 360.7 658.3 361.7 659.9 362.4C661.5 363.2 663.9 363.6 664.7 364.9C665.6 366.2 665.2 368.6 665.1 370.3Z" fill="url(#woods)"/>
<path d="M777.4 352.0C777.4 353.3 776.2 354.5 775.6 355.8C775.0 357.0 774.7 358.7 773.8 359.5C772.9 360.4 771.5 361.0 770.3 360.9C769.2 360.8 768.0 359.8 767.1 359.0C766.2 358.2 765.3 357.2 764.7 356.1C764.1 354.9 763.3 353.4 763.3 352.0C763.2 350.6 763.7 348.9 764.3 347.7C764.9 346.4 765.9 345.2 766.9 344.6C767.9 344.1 769.2 344.6 770.3 344.6C771.5 344.6 772.8 344.2 773.7 344.7C774.6 345.3 775.2 346.8 775.9 348.0C776.5 349.2 777.5 350.7 777.4 352.0Z" fill="url(#woods)"/>
<path d="M150.3 345.3C153.7 337.0 165.3 332.6 177.0 328.7C188.7 324.8 208.1 323.7 220.3 322.0C232.6 320.3 240.9 318.1 250.3 318.7C259.8 319.2 270.3 320.9 277.0 325.3C283.7 329.8 290.3 339.8 290.3 345.3C290.3 350.9 284.2 356.4 277.0 358.7C269.8 360.9 256.4 357.0 247.0 358.7C237.6 360.3 222.0 363.1 220.3 368.7C218.7 374.2 233.7 384.8 237.0 392.0C240.3 399.2 242.6 405.9 240.3 412.0C238.1 418.1 230.9 426.4 223.7 428.7C216.4 430.9 204.8 429.2 197.0 425.3C189.2 421.4 183.7 413.1 177.0 405.3C170.3 397.6 161.4 388.7 157.0 378.7C152.6 368.7 147.0 353.7 150.3 345.3Z" fill="url(#woods)"/>
<path d="M323.7 348.7C330.3 339.2 341.4 329.8 350.3 325.3C359.2 320.9 374.2 318.7 377.0 322.0C379.8 325.3 373.7 334.8 367.0 345.3C360.3 355.9 346.4 374.2 337.0 385.3C327.6 396.4 318.1 406.4 310.3 412.0C302.6 417.6 294.8 419.8 290.3 418.7C285.9 417.6 280.3 411.4 283.7 405.3C287.0 399.2 303.7 391.4 310.3 382.0C317.0 372.6 317.0 358.1 323.7 348.7Z" fill="url(#woods)"/>
<path d="M323.7 418.7C328.1 411.4 339.2 408.7 350.3 408.7C361.4 408.7 378.1 415.9 390.3 418.7C402.6 421.4 412.6 422.0 423.7 425.3C434.8 428.7 449.2 434.2 457.0 438.7C464.8 443.1 492.6 449.8 470.3 452.0C448.1 454.2 348.1 457.6 323.7 452.0C299.2 446.4 319.2 425.9 323.7 418.7Z" fill="url(#woods)"/>
<path d="M874.7 151.5C872.6 157.3 870.4 164.4 866.6 168.4C862.7 172.3 856.1 174.9 851.4 175.1C846.8 175.3 842.8 171.5 838.5 169.8C834.3 168.1 828.5 168.3 825.9 164.9C823.3 161.5 823.7 154.7 823.1 149.3C822.4 143.8 820.9 138.0 822.2 132.4C823.5 126.8 826.8 119.1 830.8 115.7C834.8 112.3 841.4 112.5 846.2 112.1C850.9 111.7 855.0 112.0 859.1 113.3C863.2 114.5 867.6 116.2 870.9 119.6C874.2 123.0 878.3 128.1 878.9 133.4C879.6 138.7 876.7 145.6 874.7 151.5Z" fill="url(#woods)"/>
<path d="M950.4 146.2C951.9 153.2 953.4 160.5 953.1 166.6C952.9 172.8 951.3 179.5 948.8 183.1C946.3 186.7 942.1 186.7 938.4 188.2C934.7 189.7 930.6 193.8 926.6 192.0C922.6 190.3 917.9 183.3 914.4 177.7C910.9 172.0 907.5 165.0 905.6 158.2C903.7 151.4 902.5 142.8 903.1 136.7C903.7 130.6 906.6 125.8 909.1 121.7C911.5 117.6 914.4 112.7 917.9 111.9C921.5 111.1 926.1 114.8 930.5 116.9C934.8 119.0 940.7 119.5 944.0 124.4C947.4 129.3 948.9 139.1 950.4 146.2Z" fill="url(#woods)"/>
<path d="M864.3 272.0C864.4 273.5 863.9 275.3 863.2 276.5C862.4 277.8 861.0 278.7 859.7 279.6C858.4 280.5 856.8 282.0 855.3 282.0C853.9 281.9 852.5 280.1 851.1 279.3C849.7 278.4 848.0 278.0 847.0 276.8C846.1 275.6 845.3 273.5 845.4 272.0C845.5 270.5 846.9 269.1 847.7 267.6C848.5 266.1 848.9 263.7 850.1 263.0C851.4 262.4 853.6 263.6 855.3 263.6C857.0 263.7 859.1 262.6 860.4 263.3C861.6 264.0 862.1 266.3 862.8 267.7C863.4 269.2 864.2 270.5 864.3 272.0Z" fill="url(#woods)"/>
<path d="M886.5 317.0C886.5 318.7 886.8 320.4 886.3 321.9C885.7 323.4 884.6 325.3 883.3 326.0C882.0 326.8 880.1 326.6 878.7 326.4C877.2 326.2 875.9 325.6 874.6 324.9C873.3 324.2 871.7 323.3 870.9 322.0C870.1 320.7 869.5 318.6 869.6 317.0C869.6 315.4 870.5 313.6 871.3 312.3C872.2 311.0 873.4 310.0 874.6 309.1C875.8 308.3 877.2 307.4 878.7 307.2C880.1 307.0 882.0 307.3 883.3 308.0C884.6 308.8 886.1 310.3 886.6 311.8C887.2 313.3 886.6 315.3 886.5 317.0Z" fill="url(#woods)"/>
<path d="M875.8 349.7C876.7 352.9 875.5 356.9 874.9 360.0C874.4 363.0 873.8 366.0 872.5 368.2C871.1 370.3 869.0 372.0 866.8 373.1C864.6 374.1 861.9 375.0 859.2 374.6C856.5 374.2 852.7 373.1 850.6 370.7C848.5 368.3 847.5 363.8 846.5 360.4C845.4 357.0 844.1 353.3 844.2 350.2C844.4 347.1 845.8 343.8 847.4 341.7C849.0 339.5 851.4 338.2 853.7 337.2C856.1 336.2 858.9 335.1 861.5 335.7C864.1 336.3 867.2 338.4 869.6 340.7C872.0 343.1 874.9 346.5 875.8 349.7Z" fill="url(#woods)"/>
<path d="M968.6 375.3C968.6 377.1 969.0 379.5 968.1 380.8C967.2 382.1 964.8 382.3 963.2 383.2C961.6 384.1 960.3 386.1 958.7 386.3C957.1 386.5 955.0 385.2 953.5 384.2C952.1 383.2 950.9 381.8 950.0 380.3C949.1 378.8 948.4 377.1 948.2 375.3C948.0 373.6 948.1 371.1 949.0 369.8C950.0 368.5 952.5 368.2 954.1 367.5C955.7 366.7 957.1 365.7 958.7 365.6C960.2 365.5 962.0 366.1 963.6 366.9C965.1 367.6 966.9 368.7 967.8 370.1C968.6 371.5 968.5 373.5 968.6 375.3Z" fill="url(#woods)"/>
<path d="M891.6 408.7C891.7 410.4 891.8 412.2 891.0 413.9C890.2 415.5 888.8 417.6 887.0 418.4C885.3 419.3 882.5 418.8 880.3 418.7C878.1 418.7 875.6 418.9 873.9 418.1C872.2 417.2 871.1 415.2 870.0 413.7C868.9 412.1 867.2 410.3 867.2 408.7C867.2 407.0 868.7 405.0 869.9 403.6C871.2 402.2 873.0 401.3 874.7 400.4C876.4 399.6 878.4 398.7 880.3 398.6C882.3 398.4 884.9 398.7 886.6 399.6C888.3 400.4 889.7 402.2 890.5 403.7C891.4 405.2 891.5 407.0 891.6 408.7Z" fill="url(#woods)"/>
<path d="M968.8 432.0C968.7 433.4 968.2 434.6 967.7 435.9C967.1 437.3 966.6 439.1 965.4 440.1C964.1 441.0 962.0 441.7 960.3 441.6C958.7 441.5 956.9 440.5 955.6 439.6C954.4 438.6 953.7 437.3 952.9 436.0C952.1 434.7 950.8 433.4 950.7 432.0C950.6 430.6 951.7 429.1 952.4 427.8C953.2 426.4 954.0 424.5 955.3 424.0C956.6 423.4 958.6 424.3 960.3 424.2C962.0 424.2 964.2 423.1 965.5 423.6C966.9 424.2 968.0 426.2 968.5 427.6C969.1 429.0 969.0 430.6 968.8 432.0Z" fill="url(#woods)"/>
<path d="M310.3 452.0C334.8 448.7 443.1 448.7 470.3 452.0C497.6 455.3 475.9 465.9 473.7 472.0C471.4 478.1 464.2 482.6 457.0 488.7C449.8 494.8 439.2 507.6 430.3 508.7C421.4 509.8 413.7 499.8 403.7 495.3C393.7 490.9 380.3 482.0 370.3 482.0C360.3 482.0 351.4 497.0 343.7 495.3C335.9 493.7 329.2 479.2 323.7 472.0C318.1 464.8 285.9 455.3 310.3 452.0Z" fill="url(#woods)"/>
<path d="M230.2 463.7C230.3 465.5 228.3 467.6 226.3 469.3C224.4 470.9 221.8 472.8 218.6 473.7C215.4 474.7 210.7 475.1 207.0 474.9C203.3 474.8 200.0 473.8 196.3 473.0C192.6 472.1 187.2 471.6 184.9 470.1C182.5 468.5 182.3 465.8 182.4 463.7C182.4 461.5 182.7 458.9 184.9 457.3C187.1 455.7 191.9 454.8 195.6 453.8C199.3 452.8 203.2 451.0 207.0 451.0C210.8 451.1 215.2 452.7 218.3 453.9C221.4 455.1 223.6 456.7 225.6 458.3C227.6 459.9 230.0 461.8 230.2 463.7Z" fill="url(#woods)"/>
<path d="M162.4 483.7C162.4 485.2 161.7 486.8 161.1 488.2C160.5 489.6 159.9 491.2 158.9 492.1C158.0 493.0 156.5 493.6 155.3 493.6C154.1 493.6 152.8 492.9 151.8 492.1C150.8 491.2 149.8 489.9 149.2 488.5C148.5 487.1 148.1 485.4 148.0 483.7C147.9 481.9 147.6 479.4 148.3 478.1C149.0 476.8 150.8 476.5 152.0 475.8C153.2 475.2 154.1 474.5 155.3 474.2C156.5 474.0 158.3 473.5 159.3 474.3C160.3 475.1 160.9 477.3 161.4 478.9C161.9 480.5 162.5 482.1 162.4 483.7Z" fill="url(#woods)"/>
<path d="M482.9 515.3C482.6 517.3 480.7 518.9 479.6 520.5C478.6 522.0 477.9 523.6 476.6 524.6C475.3 525.7 473.6 526.6 472.0 526.7C470.4 526.8 468.4 526.3 467.1 525.3C465.7 524.3 464.5 522.5 463.8 520.8C463.1 519.2 462.9 517.2 462.8 515.3C462.7 513.4 462.4 510.9 463.2 509.4C464.0 507.9 466.1 507.6 467.6 506.4C469.1 505.3 470.3 502.8 472.0 502.4C473.7 502.0 475.9 503.0 477.6 504.1C479.2 505.2 480.8 506.9 481.7 508.8C482.6 510.7 483.2 513.4 482.9 515.3Z" fill="url(#woods)"/>
<path d="M493.1 561.8C492.3 564.9 487.8 567.8 484.3 570.1C480.7 572.3 476.5 573.9 471.7 575.4C466.9 576.9 460.4 579.8 455.2 579.3C450.0 578.7 445.4 574.3 440.3 572.1C435.2 569.9 428.2 568.7 424.7 565.9C421.3 563.2 418.8 558.5 419.6 555.4C420.4 552.3 426.3 549.9 429.8 547.3C433.2 544.6 435.4 541.1 440.2 539.5C445.0 538.0 452.5 537.5 458.8 537.9C465.1 538.3 472.9 539.6 477.9 541.9C482.9 544.2 486.2 548.2 488.7 551.5C491.2 554.8 493.8 558.7 493.1 561.8Z" fill="url(#woods)"/>
<path d="M533.7 572.0C533.8 573.6 532.9 575.8 532.0 577.1C531.0 578.4 529.2 579.1 527.9 579.8C526.5 580.5 525.1 581.2 523.7 581.3C522.2 581.4 520.5 581.0 519.3 580.2C518.1 579.4 517.3 577.8 516.5 576.4C515.7 575.1 514.5 573.7 514.2 572.0C513.9 570.3 513.9 567.8 514.8 566.5C515.6 565.2 518.0 564.8 519.4 564.1C520.9 563.5 522.3 562.9 523.7 562.9C525.1 562.9 526.6 563.5 527.9 564.2C529.2 564.9 530.4 565.9 531.4 567.2C532.3 568.5 533.6 570.4 533.7 572.0Z" fill="url(#woods)"/>
<path d="M182.0 540.3C182.1 542.0 181.6 544.1 181.0 545.4C180.3 546.6 179.1 547.2 178.1 547.8C177.2 548.4 176.3 548.9 175.3 549.1C174.3 549.2 172.9 549.7 172.1 549.0C171.3 548.2 171.1 546.0 170.6 544.6C170.2 543.1 169.7 541.8 169.6 540.3C169.5 538.8 169.4 536.7 169.9 535.5C170.5 534.3 171.7 533.9 172.6 533.0C173.5 532.2 174.3 530.5 175.3 530.2C176.3 530.0 177.7 530.7 178.6 531.5C179.5 532.4 180.2 534.0 180.8 535.4C181.4 536.9 182.0 538.7 182.0 540.3Z" fill="url(#woods)"/>
<path d="M426.3 621.8C428.1 625.4 430.8 629.6 431.6 632.9C432.5 636.3 432.3 639.9 431.6 641.9C430.9 643.8 429.0 643.9 427.6 644.5C426.1 645.0 424.7 646.3 422.9 645.2C421.0 644.1 418.7 640.6 416.5 637.9C414.4 635.3 411.6 632.6 410.0 629.4C408.5 626.2 408.1 622.3 407.3 618.7C406.5 615.1 404.8 610.3 405.1 608.0C405.4 605.6 407.4 605.2 408.9 604.4C410.4 603.7 412.0 602.4 414.0 603.5C416.1 604.6 419.1 608.0 421.1 611.1C423.2 614.1 424.6 618.1 426.3 621.8Z" fill="url(#woods)"/>
<path d="M482.7 623.7C482.5 625.0 481.0 626.2 480.2 627.4C479.4 628.6 479.0 630.3 477.9 631.0C476.8 631.6 475.1 631.2 473.7 631.2C472.2 631.3 470.4 632.0 469.2 631.4C468.0 630.8 467.1 629.0 466.6 627.8C466.0 626.5 465.7 625.0 465.9 623.7C466.0 622.4 466.7 621.3 467.3 620.0C467.8 618.7 468.1 616.7 469.2 615.9C470.3 615.2 472.2 615.5 473.7 615.5C475.2 615.5 476.8 615.4 478.1 616.0C479.4 616.6 480.7 617.9 481.5 619.2C482.3 620.4 483.0 622.3 482.7 623.7Z" fill="url(#woods)"/>
<path d="M505.9 653.7C505.7 655.2 505.3 656.6 504.7 658.1C504.1 659.6 503.4 661.8 502.2 662.6C500.9 663.4 498.6 662.9 497.0 662.8C495.4 662.7 493.6 662.6 492.3 661.9C490.9 661.1 489.6 659.8 488.8 658.4C488.0 657.0 487.3 655.2 487.4 653.7C487.5 652.2 488.8 650.8 489.6 649.4C490.4 648.0 490.8 645.9 492.0 645.1C493.3 644.2 495.4 644.0 497.0 644.1C498.6 644.2 500.2 644.9 501.6 645.7C503.0 646.4 504.8 647.4 505.5 648.8C506.2 650.1 506.0 652.1 505.9 653.7Z" fill="url(#woods)"/>
<path d="M537.9 655.3C537.9 656.8 538.1 658.6 537.5 659.8C537.0 660.9 535.8 661.4 534.9 662.2C533.9 663.0 533.0 664.6 532.0 664.6C531.0 664.6 529.9 663.2 529.1 662.3C528.3 661.4 527.7 660.3 527.3 659.1C526.9 657.9 526.7 656.6 526.7 655.3C526.7 654.1 526.9 652.8 527.3 651.5C527.6 650.3 528.1 648.6 528.8 647.7C529.6 646.9 531.0 646.2 532.0 646.2C533.0 646.3 534.1 647.4 535.0 648.2C535.8 649.0 536.8 649.9 537.2 651.1C537.7 652.3 537.8 653.9 537.9 655.3Z" fill="url(#woods)"/>
<path d="M590.5 707.0C590.4 708.7 590.8 710.4 590.3 711.8C589.8 713.3 588.6 714.6 587.5 715.5C586.4 716.4 584.9 717.4 583.7 717.2C582.4 717.1 581.2 715.7 580.1 714.8C579.1 713.8 578.3 712.7 577.6 711.4C576.9 710.2 575.8 708.4 575.9 707.0C576.0 705.6 577.3 704.1 578.0 702.8C578.7 701.5 579.2 700.1 580.1 699.1C581.0 698.1 582.4 696.9 583.7 696.8C584.9 696.7 586.3 697.8 587.4 698.7C588.6 699.5 590.1 700.5 590.6 701.9C591.1 703.3 590.5 705.3 590.5 707.0Z" fill="url(#woods)"/>
<path d="M635.8 713.7C635.8 714.9 635.1 716.4 634.3 717.4C633.5 718.4 632.1 718.9 630.9 719.6C629.7 720.3 628.3 721.3 627.0 721.3C625.7 721.4 624.2 720.5 622.9 719.9C621.6 719.3 619.7 718.7 619.1 717.7C618.5 716.6 619.2 715.0 619.3 713.7C619.3 712.4 618.8 710.8 619.4 709.8C620.0 708.8 621.7 708.3 623.0 707.6C624.3 706.9 625.6 705.8 627.0 705.7C628.4 705.6 630.1 706.4 631.3 707.1C632.5 707.8 633.2 709.0 634.0 710.1C634.7 711.2 635.7 712.5 635.8 713.7Z" fill="url(#woods)"/>
<path d="M689.6 628.7C689.6 630.1 688.6 631.7 687.8 633.0C687.1 634.3 686.2 635.9 685.0 636.7C683.7 637.5 681.8 637.9 680.3 637.8C678.9 637.7 677.3 636.8 676.1 636.0C674.9 635.2 673.7 634.2 672.9 632.9C672.2 631.7 671.5 630.1 671.5 628.7C671.6 627.3 672.4 625.8 673.1 624.5C673.8 623.2 674.6 621.4 675.8 620.8C677.0 620.2 678.8 620.8 680.3 620.9C681.8 620.9 683.6 620.4 684.8 620.9C686.0 621.5 687.0 623.1 687.8 624.4C688.6 625.7 689.6 627.2 689.6 628.7Z" fill="url(#woods)"/>
<path d="M775.3 632.0C775.5 633.4 775.6 635.4 774.8 636.5C774.1 637.6 772.1 638.1 770.8 638.6C769.5 639.1 768.4 639.3 767.0 639.5C765.6 639.6 763.9 640.2 762.6 639.7C761.2 639.2 759.8 637.9 759.1 636.6C758.3 635.3 758.1 633.5 758.2 632.0C758.3 630.5 758.8 628.9 759.6 627.7C760.4 626.5 761.7 625.7 763.0 625.0C764.2 624.4 765.6 623.9 767.0 623.8C768.4 623.6 770.4 623.4 771.6 624.1C772.7 624.8 773.2 626.8 773.8 628.1C774.4 629.4 775.1 630.6 775.3 632.0Z" fill="url(#woods)"/>
<path d="M851.3 629.5C851.1 630.8 851.1 631.9 850.6 633.0C850.0 634.1 849.2 635.1 848.2 635.9C847.2 636.6 845.7 637.6 844.5 637.5C843.3 637.4 842.2 636.1 841.1 635.4C839.9 634.8 838.3 634.5 837.6 633.5C836.9 632.5 836.8 630.8 836.8 629.5C836.8 628.2 837.0 626.6 837.7 625.6C838.4 624.5 839.6 623.7 840.8 623.0C841.9 622.4 843.2 621.6 844.5 621.5C845.8 621.4 847.4 621.7 848.6 622.4C849.8 623.0 851.3 624.1 851.7 625.3C852.2 626.5 851.5 628.2 851.3 629.5Z" fill="url(#woods)"/>
<path d="M1079.5 739.5C1079.7 740.9 1080.5 742.9 1080.0 743.9C1079.4 745.0 1077.5 745.2 1076.4 745.7C1075.3 746.2 1074.3 747.0 1073.2 747.0C1072.2 747.1 1071.1 746.4 1070.0 745.9C1068.9 745.4 1067.2 745.0 1066.6 743.9C1066.0 742.8 1066.4 740.9 1066.5 739.5C1066.6 738.1 1066.6 736.7 1067.2 735.5C1067.7 734.3 1068.7 733.1 1069.7 732.5C1070.7 731.9 1072.0 732.1 1073.2 732.0C1074.5 731.9 1076.1 731.3 1077.1 732.0C1078.0 732.6 1078.4 734.6 1078.8 735.8C1079.3 737.1 1079.3 738.1 1079.5 739.5Z" fill="url(#woods)"/>
<path d="M1034.6 768.2C1034.7 769.7 1034.2 771.4 1033.5 772.7C1032.9 774.0 1032.0 775.5 1030.9 776.1C1029.8 776.7 1028.3 776.4 1027.0 776.4C1025.7 776.3 1024.2 776.7 1023.2 776.0C1022.2 775.3 1021.6 773.6 1021.0 772.3C1020.4 771.0 1019.8 769.7 1019.6 768.2C1019.4 766.8 1019.4 764.8 1020.0 763.6C1020.7 762.3 1022.2 761.5 1023.4 761.0C1024.6 760.5 1025.8 760.5 1027.0 760.5C1028.2 760.5 1029.5 760.6 1030.5 761.2C1031.5 761.8 1032.6 762.9 1033.3 764.0C1034.0 765.2 1034.6 766.8 1034.6 768.2Z" fill="url(#woods)"/>
<path d="M1108.7 807.1C1109.1 808.6 1109.1 810.0 1109.2 811.6C1109.2 813.2 1109.6 815.5 1109.0 816.6C1108.4 817.8 1106.6 818.3 1105.3 818.6C1104.0 818.8 1102.7 818.2 1101.3 817.9C1100.0 817.6 1098.2 817.6 1097.2 816.6C1096.3 815.6 1096.2 813.3 1095.8 811.8C1095.4 810.2 1095.1 809.0 1095.0 807.5C1094.9 806.0 1094.8 803.9 1095.4 802.8C1096.1 801.7 1097.7 801.2 1098.9 801.0C1100.1 800.7 1101.4 801.0 1102.7 801.2C1103.9 801.5 1105.6 801.6 1106.6 802.6C1107.7 803.5 1108.3 805.5 1108.7 807.1Z" fill="url(#woods)"/>
<path d="M952.4 839.0C952.4 840.6 952.3 842.2 951.7 843.6C951.2 845.0 950.3 846.6 949.1 847.5C948.0 848.4 946.3 849.1 945.0 848.9C943.7 848.7 942.6 847.2 941.5 846.3C940.3 845.4 939.1 844.8 938.2 843.6C937.4 842.4 936.2 840.5 936.2 839.0C936.3 837.5 937.7 836.0 938.4 834.5C939.2 833.0 939.6 831.1 940.7 830.2C941.8 829.3 943.5 829.1 945.0 829.0C946.5 828.9 948.3 829.0 949.5 829.8C950.6 830.7 951.7 832.6 952.2 834.1C952.7 835.6 952.5 837.4 952.4 839.0Z" fill="url(#woods)"/>
<path d="M1030.4 838.2C1030.6 839.7 1030.6 841.5 1029.9 842.8C1029.3 844.2 1028.1 845.7 1026.8 846.5C1025.5 847.4 1023.6 847.8 1022.0 847.8C1020.4 847.8 1018.5 847.5 1017.2 846.7C1015.8 845.8 1014.6 844.3 1013.9 842.9C1013.2 841.5 1012.7 839.8 1012.7 838.2C1012.8 836.7 1013.3 835.1 1014.0 833.7C1014.8 832.2 1015.8 830.5 1017.1 829.8C1018.4 829.0 1020.5 828.8 1022.0 829.1C1023.5 829.3 1025.0 830.2 1026.2 831.0C1027.3 831.9 1028.4 833.0 1029.1 834.2C1029.8 835.4 1030.3 836.8 1030.4 838.2Z" fill="url(#woods)"/>
<path d="M1096.4 883.8C1095.3 885.7 1094.2 887.3 1092.3 888.8C1090.4 890.4 1088.1 893.0 1084.9 893.1C1081.6 893.2 1076.8 890.5 1072.8 889.3C1068.8 888.2 1064.0 888.0 1061.0 886.3C1057.9 884.6 1055.6 881.5 1054.5 879.2C1053.5 876.9 1054.4 874.8 1054.7 872.6C1055.1 870.4 1054.6 867.4 1056.7 866.1C1058.9 864.9 1063.9 865.4 1067.7 865.1C1071.5 864.8 1075.9 863.5 1079.4 864.5C1083.0 865.5 1085.6 869.0 1088.9 871.1C1092.2 873.2 1097.8 875.1 1099.1 877.2C1100.3 879.3 1097.5 881.8 1096.4 883.8Z" fill="url(#woods)"/>
<path d="M1191.9 862.7C1193.6 868.5 1195.4 876.6 1195.0 881.3C1194.6 885.9 1191.2 887.8 1189.4 890.8C1187.6 893.8 1186.6 897.6 1184.4 899.2C1182.1 900.8 1178.7 902.6 1175.8 900.5C1173.0 898.4 1169.6 891.6 1167.2 886.7C1164.8 881.7 1162.8 876.1 1161.6 870.8C1160.3 865.5 1159.8 860.1 1159.6 855.1C1159.5 850.1 1159.6 844.5 1160.8 840.9C1161.9 837.3 1164.2 834.0 1166.7 833.3C1169.2 832.6 1172.7 834.3 1175.7 836.5C1178.7 838.7 1182.0 842.2 1184.6 846.5C1187.3 850.9 1190.1 856.9 1191.9 862.7Z" fill="url(#woods)"/>
<path d="M1237.7 874.5C1237.7 876.5 1237.5 878.8 1236.8 880.4C1236.2 882.0 1234.9 883.5 1233.8 884.3C1232.7 885.2 1231.3 885.6 1230.0 885.6C1228.7 885.5 1227.5 885.0 1226.3 884.2C1225.1 883.3 1223.3 882.3 1222.8 880.7C1222.3 879.1 1223.3 876.6 1223.3 874.5C1223.3 872.4 1222.4 869.8 1222.9 868.4C1223.4 866.9 1225.4 866.6 1226.6 865.6C1227.8 864.5 1228.8 862.4 1230.0 862.2C1231.2 861.9 1232.9 862.9 1234.1 863.9C1235.2 865.0 1236.4 866.7 1237.0 868.4C1237.6 870.2 1237.7 872.5 1237.7 874.5Z" fill="url(#woods)"/>
<path d="M1060.6 919.5C1060.4 920.8 1059.9 922.1 1059.3 923.2C1058.7 924.3 1058.0 925.5 1057.0 926.4C1056.0 927.2 1054.5 928.1 1053.2 928.1C1052.0 928.1 1050.7 926.9 1049.7 926.2C1048.6 925.4 1047.4 924.7 1046.7 923.5C1046.0 922.4 1045.5 920.8 1045.5 919.5C1045.6 918.2 1046.3 916.7 1047.0 915.7C1047.7 914.6 1048.9 913.9 1049.9 913.3C1050.9 912.8 1052.0 912.6 1053.2 912.4C1054.5 912.1 1056.3 911.3 1057.4 911.8C1058.5 912.3 1059.4 914.1 1059.9 915.4C1060.4 916.7 1060.7 918.2 1060.6 919.5Z" fill="url(#woods)"/>
<path d="M1253.8 810.8C1253.7 812.3 1251.9 813.8 1250.9 815.2C1250.0 816.6 1249.5 818.5 1248.2 819.3C1246.9 820.1 1244.9 819.8 1243.2 819.8C1241.6 819.7 1240.0 819.5 1238.6 818.9C1237.1 818.2 1235.2 817.2 1234.4 815.8C1233.7 814.5 1234.0 812.5 1234.0 810.8C1233.9 809.0 1233.6 807.1 1234.2 805.5C1234.9 804.0 1236.5 802.3 1238.0 801.6C1239.5 801.0 1241.6 801.3 1243.2 801.4C1244.9 801.6 1246.5 801.9 1247.9 802.6C1249.4 803.4 1251.1 804.3 1252.1 805.7C1253.0 807.0 1254.0 809.2 1253.8 810.8Z" fill="url(#woods)"/>
<path d="M892.0 922.0C894.1 916.8 901.2 915.8 907.0 915.8C912.8 915.8 920.3 919.7 927.0 922.0C933.7 924.3 941.2 926.2 947.0 929.5C952.8 932.8 957.0 940.8 962.0 942.0C967.0 943.2 971.2 937.4 977.0 937.0C982.8 936.6 992.4 937.0 997.0 939.5C1001.6 942.0 1004.5 947.8 1004.5 952.0C1004.5 956.2 1002.4 962.0 997.0 964.5C991.6 967.0 979.5 967.4 972.0 967.0C964.5 966.6 959.5 963.7 952.0 962.0C944.5 960.3 934.5 957.8 927.0 957.0C919.5 956.2 912.4 958.7 907.0 957.0C901.6 955.3 897.0 952.8 894.5 947.0C892.0 941.2 889.9 927.2 892.0 922.0Z" fill="url(#woods)"/>
<path d="M1076.3 962.9C1075.6 964.7 1073.2 966.1 1071.2 967.6C1069.1 969.1 1067.3 971.2 1064.0 971.9C1060.6 972.6 1055.4 972.2 1051.0 971.9C1046.6 971.6 1041.3 971.4 1037.4 970.2C1033.6 969.0 1030.1 966.7 1028.1 964.8C1026.2 962.8 1025.1 960.3 1025.7 958.5C1026.4 956.6 1029.6 955.1 1032.0 953.6C1034.5 952.2 1036.9 950.7 1040.4 950.0C1043.9 949.2 1048.7 948.7 1053.0 948.9C1057.4 949.2 1062.6 950.1 1066.4 951.4C1070.2 952.7 1074.0 954.9 1075.7 956.8C1077.3 958.7 1077.1 961.1 1076.3 962.9Z" fill="url(#woods)"/>
<path d="M912.1 984.5C912.1 985.6 911.3 986.8 910.7 987.8C910.1 988.9 909.4 990.1 908.4 990.8C907.4 991.5 905.7 992.2 904.5 992.0C903.3 991.9 902.1 990.8 901.1 990.1C900.0 989.4 898.8 988.9 898.1 988.0C897.3 987.0 896.3 985.6 896.4 984.5C896.5 983.4 898.0 982.4 898.7 981.4C899.5 980.4 899.9 979.2 900.8 978.6C901.8 977.9 903.3 977.7 904.5 977.7C905.7 977.8 907.0 978.3 907.9 978.9C908.9 979.5 909.8 980.3 910.5 981.3C911.2 982.2 912.0 983.4 912.1 984.5Z" fill="url(#woods)"/>
<path d="M869.1 892.0C868.9 895.4 869.1 899.1 867.3 902.0C865.6 904.8 862.0 907.7 858.7 909.2C855.3 910.7 851.0 910.7 847.0 911.0C843.0 911.2 838.3 911.8 834.4 910.6C830.5 909.3 826.2 906.6 823.6 903.5C821.1 900.4 818.5 895.5 819.1 892.0C819.7 888.5 824.6 885.3 827.2 882.3C829.8 879.2 831.3 875.3 834.6 873.8C837.9 872.3 842.8 873.1 847.0 873.1C851.2 873.0 856.1 871.9 859.7 873.3C863.3 874.7 867.1 878.2 868.7 881.4C870.2 884.5 869.3 888.6 869.1 892.0Z" fill="url(#woods)"/>
<path d="M868.8 840.6C868.4 843.0 868.0 846.2 865.9 847.7C863.9 849.1 859.9 848.8 856.7 849.2C853.4 849.6 849.5 850.9 846.4 849.9C843.3 848.9 840.4 845.6 838.2 843.2C836.1 840.8 834.6 838.2 833.8 835.6C832.9 833.0 832.2 829.9 833.1 827.6C833.9 825.3 836.5 823.5 838.8 822.0C841.1 820.6 844.0 819.1 847.0 818.9C850.1 818.6 854.0 819.4 857.1 820.6C860.1 821.8 863.2 824.0 865.2 826.1C867.1 828.3 868.2 831.1 868.8 833.5C869.4 835.9 869.3 838.3 868.8 840.6Z" fill="url(#woods)"/>
<path d="M798.2 764.5C798.2 765.9 797.5 767.3 796.8 768.6C796.2 769.8 795.5 771.3 794.4 772.0C793.4 772.6 791.9 772.5 790.8 772.4C789.6 772.3 788.4 772.0 787.3 771.4C786.2 770.8 784.8 770.0 784.3 768.9C783.7 767.7 783.8 765.9 783.9 764.5C784.0 763.1 784.4 761.7 784.9 760.6C785.5 759.4 786.4 758.4 787.3 757.6C788.3 756.8 789.6 755.8 790.8 755.7C791.9 755.7 793.3 756.5 794.3 757.3C795.4 758.0 796.3 759.1 796.9 760.3C797.6 761.6 798.2 763.1 798.2 764.5Z" fill="url(#woods)"/>
<path d="M1276.3 784.5C1276.2 786.0 1276.5 787.7 1275.9 788.8C1275.4 790.0 1274.1 790.7 1273.0 791.6C1271.9 792.5 1270.7 794.2 1269.5 794.2C1268.3 794.2 1267.0 792.5 1266.0 791.6C1265.0 790.7 1263.8 789.9 1263.3 788.7C1262.7 787.5 1262.8 785.9 1262.8 784.5C1262.9 783.1 1262.9 781.8 1263.4 780.4C1263.8 779.0 1264.3 776.9 1265.3 776.0C1266.3 775.2 1268.2 775.2 1269.5 775.4C1270.8 775.6 1271.9 776.5 1273.1 777.2C1274.3 777.9 1276.2 778.4 1276.7 779.6C1277.3 780.8 1276.4 783.0 1276.3 784.5Z" fill="url(#woods)"/>
<path d="M1304.8 827.0C1304.8 828.7 1305.0 830.4 1304.5 831.9C1304.0 833.5 1302.9 835.5 1301.6 836.2C1300.4 836.9 1298.5 836.4 1297.0 836.4C1295.5 836.3 1293.7 836.7 1292.5 836.0C1291.3 835.2 1290.5 833.3 1289.7 831.8C1288.9 830.3 1287.6 828.6 1287.6 827.0C1287.6 825.4 1288.7 823.6 1289.5 822.1C1290.3 820.6 1291.2 818.6 1292.4 817.9C1293.7 817.3 1295.6 817.9 1297.0 818.1C1298.4 818.3 1299.6 818.6 1300.9 819.2C1302.2 819.9 1304.0 820.6 1304.7 821.9C1305.3 823.2 1304.9 825.3 1304.8 827.0Z" fill="url(#woods)"/>
<path d="M1319.0 894.5C1319.0 896.6 1318.9 898.9 1318.3 900.9C1317.7 902.9 1316.6 905.1 1315.3 906.4C1313.9 907.7 1311.9 908.7 1310.2 908.8C1308.6 908.8 1306.6 907.8 1305.1 906.6C1303.7 905.4 1302.0 903.6 1301.3 901.6C1300.6 899.6 1300.8 896.8 1300.8 894.5C1300.9 892.2 1300.8 889.6 1301.6 887.6C1302.3 885.7 1303.8 883.4 1305.2 882.6C1306.7 881.7 1308.5 882.8 1310.2 882.7C1312.0 882.7 1314.1 881.3 1315.4 882.2C1316.8 883.1 1317.9 885.9 1318.5 888.0C1319.1 890.0 1319.0 892.4 1319.0 894.5Z" fill="url(#woods)"/>
<path d="M149.2 340.0C173.3 338.0 266.0 338.0 289.7 340.0C313.5 342.0 296.2 348.8 291.8 352.2C287.4 355.6 271.4 360.4 263.3 360.4C255.1 360.4 250.4 351.9 242.9 352.2C235.4 352.6 225.9 357.7 218.5 362.4C211.0 367.2 197.4 377.3 198.1 380.7C198.8 384.1 215.4 380.7 222.5 382.8C229.7 384.8 238.8 386.5 240.9 393.0C242.9 399.4 239.2 414.0 234.8 421.5C230.3 428.9 219.5 432.3 214.4 437.8C209.3 443.2 201.8 449.3 204.2 454.1C206.6 458.8 225.6 462.9 228.6 466.3C231.7 469.7 229.3 473.7 222.5 474.4C215.8 475.1 198.8 471.0 187.9 470.3C177.1 469.7 165.9 471.7 157.4 470.3C148.9 469.0 140.4 478.8 137.0 462.2C133.6 445.6 135.6 388.9 137.0 370.5C138.4 352.2 143.1 357.3 145.1 352.2C147.2 347.1 125.1 342.0 149.2 340.0Z" fill="url(#woods)"/>
<path d="M316.2 352.2C324.4 346.4 352.9 341.4 361.0 340.0C369.2 338.6 368.5 338.6 365.1 344.1C361.7 349.5 348.1 363.8 340.7 372.6C333.2 381.4 327.1 388.9 320.3 397.0C313.5 405.2 306.0 417.7 299.9 421.5C293.8 425.2 286.7 422.1 283.6 419.4C280.6 416.7 278.9 409.9 281.6 405.2C284.3 400.4 294.8 396.0 299.9 390.9C305.0 385.8 309.4 381.1 312.2 374.6C314.9 368.2 308.1 358.0 316.2 352.2Z" fill="url(#woods)"/>
<path d="M322.3 419.4C323.4 414.0 326.1 410.6 332.5 409.2C339.0 407.9 351.2 409.9 361.0 411.3C370.9 412.6 383.8 414.3 391.6 417.4C399.4 420.4 401.8 428.6 407.9 429.6C414.0 430.6 420.1 421.5 428.2 423.5C436.4 425.5 451.2 432.0 457.0 441.8C462.7 451.7 462.9 471.0 462.9 482.6C462.9 494.1 463.7 506.7 457.0 511.1C450.2 515.5 433.0 511.8 422.1 509.0C411.2 506.3 404.5 496.8 391.6 494.8C378.7 492.7 354.6 499.5 344.7 496.8C334.9 494.1 338.3 484.6 332.5 478.5C326.7 472.4 311.1 466.3 310.1 460.2C309.1 454.1 324.4 448.6 326.4 441.8C328.4 435.0 321.3 424.9 322.3 419.4Z" fill="url(#woods)"/>
<path d="M376.2 693.9C386.1 686.1 411.8 680.4 427.4 676.9C443.1 673.3 454.5 671.9 470.1 672.6C485.8 673.3 507.1 680.4 521.4 681.1C535.6 681.8 549.1 669.7 555.5 676.9C561.9 684.0 561.2 710.3 559.8 723.8C558.4 737.4 553.4 748.0 547.0 758.0C540.6 768.0 532.8 777.9 521.4 783.6C510.0 789.3 492.9 793.6 478.7 792.2C464.4 790.7 450.2 781.5 436.0 775.1C421.7 768.7 404.6 762.3 393.2 753.7C381.9 745.2 370.5 733.8 367.6 723.8C364.8 713.9 366.2 701.8 376.2 693.9Z" fill="url(#woodsd)"/>
<path d="M576.9 753.7C587.6 747.3 603.9 737.4 619.6 736.6C635.3 735.9 658.7 743.0 670.8 749.5C682.9 755.9 691.5 763.7 692.2 775.1C692.9 786.5 682.2 805.0 675.1 817.8C668.0 830.6 660.9 844.8 649.5 852.0C638.1 859.1 621.0 861.9 606.8 860.5C592.5 859.1 574.0 852.0 564.1 843.4C554.1 834.9 548.4 820.6 547.0 809.2C545.6 797.9 550.6 784.3 555.5 775.1C560.5 765.8 566.2 760.1 576.9 753.7Z" fill="url(#woodsd)"/>
<path d="M662.3 766.5C668.0 753.0 689.4 743.8 705.0 745.2C720.7 746.6 739.9 767.3 756.3 775.1C772.6 782.9 785.4 790.7 803.2 792.2C821.0 793.6 850.2 777.9 863.0 783.6C875.8 789.3 880.1 810.7 880.1 826.3C880.1 842.0 873.0 861.9 863.0 877.6C853.1 893.2 836.0 910.3 820.3 920.3C804.7 930.3 784.7 938.8 769.1 937.4C753.4 935.9 739.2 921.7 726.4 911.7C713.6 901.8 701.5 891.8 692.2 877.6C682.9 863.3 675.8 844.8 670.8 826.3C665.9 807.8 656.6 780.1 662.3 766.5Z" fill="url(#woodsd)"/>
<path d="M201.1 557.3C207.5 550.9 237.4 549.4 248.0 553.0C258.7 556.6 265.8 570.8 265.1 578.6C264.4 586.5 253.0 597.8 243.8 600.0C234.5 602.1 216.7 598.6 209.6 591.4C202.5 584.3 194.7 563.7 201.1 557.3Z" fill="url(#woodsd)"/>
<path d="M212.0 235.3C214.2 228.1 225.1 220.6 233.7 215.3C242.3 210.1 253.7 204.2 263.7 203.7C273.7 203.1 288.1 202.8 293.7 212.0C299.2 221.2 293.7 245.9 297.0 258.7C300.3 271.4 311.2 282.0 313.7 288.7C316.2 295.3 318.1 297.0 312.0 298.7C305.9 300.3 287.8 302.0 277.0 298.7C266.2 295.3 256.4 285.3 247.0 278.7C237.6 272.0 226.2 265.9 220.3 258.7C214.5 251.4 209.8 242.6 212.0 235.3Z" fill="#e4e2bc"/><path d="M212.0 235.3C214.2 228.1 225.1 220.6 233.7 215.3C242.3 210.1 253.7 204.2 263.7 203.7C273.7 203.1 288.1 202.8 293.7 212.0C299.2 221.2 293.7 245.9 297.0 258.7C300.3 271.4 311.2 282.0 313.7 288.7C316.2 295.3 318.1 297.0 312.0 298.7C305.9 300.3 287.8 302.0 277.0 298.7C266.2 295.3 256.4 285.3 247.0 278.7C237.6 272.0 226.2 265.9 220.3 258.7C214.5 251.4 209.8 242.6 212.0 235.3Z" fill="url(#orch)"/>
<path d="M784.5 937.0C788.2 932.8 795.3 930.3 799.5 932.0C803.7 933.7 806.6 941.2 809.5 947.0C812.4 952.8 815.5 959.5 817.0 967.0C818.5 974.5 819.9 985.8 818.2 992.0C816.6 998.2 813.9 1002.8 807.0 1004.5C800.1 1006.2 782.0 1009.9 777.0 1002.0C772.0 994.1 775.8 967.8 777.0 957.0C778.2 946.2 780.8 941.2 784.5 937.0Z" fill="#e4e2bc"/><path d="M784.5 937.0C788.2 932.8 795.3 930.3 799.5 932.0C803.7 933.7 806.6 941.2 809.5 947.0C812.4 952.8 815.5 959.5 817.0 967.0C818.5 974.5 819.9 985.8 818.2 992.0C816.6 998.2 813.9 1002.8 807.0 1004.5C800.1 1006.2 782.0 1009.9 777.0 1002.0C772.0 994.1 775.8 967.8 777.0 957.0C778.2 946.2 780.8 941.2 784.5 937.0Z" fill="url(#orch)"/>
<path d="M777.0 1022.0C781.2 1016.9 792.8 1018.2 802.0 1019.5C811.2 1020.8 826.2 1024.4 832.0 1029.5C837.8 1034.6 846.2 1046.6 837.0 1050.0C827.8 1053.4 787.0 1054.7 777.0 1050.0C767.0 1045.3 772.8 1027.1 777.0 1022.0Z" fill="#e4e2bc"/><path d="M777.0 1022.0C781.2 1016.9 792.8 1018.2 802.0 1019.5C811.2 1020.8 826.2 1024.4 832.0 1029.5C837.8 1034.6 846.2 1046.6 837.0 1050.0C827.8 1053.4 787.0 1054.7 777.0 1050.0C767.0 1045.3 772.8 1027.1 777.0 1022.0Z" fill="url(#orch)"/>
<path d="M1476.7 1013.3C1478.9 1009.7 1486.1 1007.8 1493.3 1008.3C1500.6 1008.9 1512.2 1012.5 1520.0 1016.7C1527.8 1020.8 1535.0 1027.2 1540.0 1033.3C1545.0 1039.4 1557.8 1050.0 1550.0 1053.3C1542.2 1056.7 1505.0 1057.2 1493.3 1053.3C1481.7 1049.4 1482.8 1036.7 1480.0 1030.0C1477.2 1023.3 1474.4 1016.9 1476.7 1013.3Z" fill="#e4e2bc"/><path d="M1476.7 1013.3C1478.9 1009.7 1486.1 1007.8 1493.3 1008.3C1500.6 1008.9 1512.2 1012.5 1520.0 1016.7C1527.8 1020.8 1535.0 1027.2 1540.0 1033.3C1545.0 1039.4 1557.8 1050.0 1550.0 1053.3C1542.2 1056.7 1505.0 1057.2 1493.3 1053.3C1481.7 1049.4 1482.8 1036.7 1480.0 1030.0C1477.2 1023.3 1474.4 1016.9 1476.7 1013.3Z" fill="url(#orch)"/>
<path d="M270.3 542.0C275.1 540.3 289.8 539.5 297.0 540.3C304.2 541.2 311.2 543.9 313.7 547.0C316.2 550.1 314.8 555.9 312.0 558.7C309.2 561.4 302.8 563.7 297.0 563.7C291.2 563.7 281.7 560.9 277.0 558.7C272.3 556.4 269.8 553.1 268.7 550.3C267.6 547.6 265.6 543.7 270.3 542.0Z" fill="#5a5b2a" fill-opacity="0.68" filter="url(#b2)"/><path d="M270.3 542.0C275.1 540.3 289.8 539.5 297.0 540.3C304.2 541.2 311.2 543.9 313.7 547.0C316.2 550.1 314.8 555.9 312.0 558.7C309.2 561.4 302.8 563.7 297.0 563.7C291.2 563.7 281.7 560.9 277.0 558.7C272.3 556.4 269.8 553.1 268.7 550.3C267.6 547.6 265.6 543.7 270.3 542.0Z" fill="url(#dense)"/>
<path d="M345.3 532.0C349.2 526.2 363.9 520.9 370.3 520.3C376.7 519.8 380.9 524.5 383.7 528.7C386.4 532.8 382.0 544.2 387.0 545.3C392.0 546.4 409.8 534.8 413.7 535.3C417.6 535.9 415.3 543.1 410.3 548.7C405.3 554.2 391.4 565.9 383.7 568.7C375.9 571.4 369.8 567.6 363.7 565.3C357.6 563.1 350.1 560.9 347.0 555.3C343.9 549.8 341.4 537.8 345.3 532.0Z" fill="#5a5b2a" fill-opacity="0.68" filter="url(#b2)"/><path d="M345.3 532.0C349.2 526.2 363.9 520.9 370.3 520.3C376.7 519.8 380.9 524.5 383.7 528.7C386.4 532.8 382.0 544.2 387.0 545.3C392.0 546.4 409.8 534.8 413.7 535.3C417.6 535.9 415.3 543.1 410.3 548.7C405.3 554.2 391.4 565.9 383.7 568.7C375.9 571.4 369.8 567.6 363.7 565.3C357.6 563.1 350.1 560.9 347.0 555.3C343.9 549.8 341.4 537.8 345.3 532.0Z" fill="url(#dense)"/>
<path d="M268.7 487.0C270.3 484.8 276.2 483.9 278.7 485.3C281.2 486.7 283.9 492.0 283.7 495.3C283.4 498.7 279.5 504.8 277.0 505.3C274.5 505.9 270.1 501.7 268.7 498.7C267.3 495.6 267.0 489.2 268.7 487.0Z" fill="#5a5b2a" fill-opacity="0.68" filter="url(#b2)"/><path d="M268.7 487.0C270.3 484.8 276.2 483.9 278.7 485.3C281.2 486.7 283.9 492.0 283.7 495.3C283.4 498.7 279.5 504.8 277.0 505.3C274.5 505.9 270.1 501.7 268.7 498.7C267.3 495.6 267.0 489.2 268.7 487.0Z" fill="url(#dense)"/>
<path d="M137.0 598.7C140.3 589.2 151.4 593.7 157.0 595.3C162.6 597.0 164.8 608.1 170.3 608.7C175.9 609.2 184.8 603.1 190.3 598.7C195.9 594.2 200.1 583.7 203.7 582.0C207.3 580.3 211.4 584.2 212.0 588.7C212.6 593.1 210.1 602.6 207.0 608.7C203.9 614.8 195.3 618.1 193.7 625.3C192.0 632.6 197.6 643.1 197.0 652.0C196.4 660.9 195.9 673.1 190.3 678.7C184.8 684.2 170.9 686.4 163.7 685.3C156.4 684.2 151.4 677.6 147.0 672.0C142.6 666.4 138.7 664.2 137.0 652.0C135.3 639.8 133.7 608.1 137.0 598.7Z" fill="#5a5b2a" fill-opacity="0.68" filter="url(#b2)"/><path d="M137.0 598.7C140.3 589.2 151.4 593.7 157.0 595.3C162.6 597.0 164.8 608.1 170.3 608.7C175.9 609.2 184.8 603.1 190.3 598.7C195.9 594.2 200.1 583.7 203.7 582.0C207.3 580.3 211.4 584.2 212.0 588.7C212.6 593.1 210.1 602.6 207.0 608.7C203.9 614.8 195.3 618.1 193.7 625.3C192.0 632.6 197.6 643.1 197.0 652.0C196.4 660.9 195.9 673.1 190.3 678.7C184.8 684.2 170.9 686.4 163.7 685.3C156.4 684.2 151.4 677.6 147.0 672.0C142.6 666.4 138.7 664.2 137.0 652.0C135.3 639.8 133.7 608.1 137.0 598.7Z" fill="url(#dense)"/>
<path d="M250.3 638.7C253.1 633.7 262.6 623.7 270.3 622.0C278.1 620.3 292.0 626.4 297.0 628.7C302.0 630.9 304.8 631.4 300.3 635.3C295.9 639.2 278.1 649.2 270.3 652.0C262.6 654.8 257.0 654.2 253.7 652.0C250.3 649.8 247.6 643.7 250.3 638.7Z" fill="#5a5b2a" fill-opacity="0.68" filter="url(#b2)"/><path d="M250.3 638.7C253.1 633.7 262.6 623.7 270.3 622.0C278.1 620.3 292.0 626.4 297.0 628.7C302.0 630.9 304.8 631.4 300.3 635.3C295.9 639.2 278.1 649.2 270.3 652.0C262.6 654.8 257.0 654.2 253.7 652.0C250.3 649.8 247.6 643.7 250.3 638.7Z" fill="url(#dense)"/>
<path d="M137.0 698.7C145.9 678.7 174.8 697.6 190.3 692.0C205.9 686.4 218.7 669.2 230.3 665.3C242.0 661.4 252.6 664.2 260.3 668.7C268.1 673.1 269.8 686.4 277.0 692.0C284.2 697.6 297.0 696.4 303.7 702.0C310.3 707.6 315.9 717.0 317.0 725.3C318.1 733.7 315.9 746.4 310.3 752.0C304.8 757.6 291.4 753.7 283.7 758.7C275.9 763.7 264.8 775.3 263.7 782.0C262.6 788.7 269.2 796.4 277.0 798.7C284.8 800.9 298.1 794.8 310.3 795.3C322.6 795.9 340.3 799.2 350.3 802.0C360.3 804.8 405.9 810.3 370.3 812.0C334.8 813.7 175.9 830.9 137.0 812.0C98.1 793.1 128.1 718.7 137.0 698.7Z" fill="#5a5b2a" fill-opacity="0.68" filter="url(#b2)"/><path d="M137.0 698.7C145.9 678.7 174.8 697.6 190.3 692.0C205.9 686.4 218.7 669.2 230.3 665.3C242.0 661.4 252.6 664.2 260.3 668.7C268.1 673.1 269.8 686.4 277.0 692.0C284.2 697.6 297.0 696.4 303.7 702.0C310.3 707.6 315.9 717.0 317.0 725.3C318.1 733.7 315.9 746.4 310.3 752.0C304.8 757.6 291.4 753.7 283.7 758.7C275.9 763.7 264.8 775.3 263.7 782.0C262.6 788.7 269.2 796.4 277.0 798.7C284.8 800.9 298.1 794.8 310.3 795.3C322.6 795.9 340.3 799.2 350.3 802.0C360.3 804.8 405.9 810.3 370.3 812.0C334.8 813.7 175.9 830.9 137.0 812.0C98.1 793.1 128.1 718.7 137.0 698.7Z" fill="url(#dense)"/>
<path d="M303.7 793.3C308.7 786.7 313.7 787.2 323.7 790.0C333.7 792.8 353.7 805.0 363.7 810.0C373.7 815.0 372.6 818.9 383.7 820.0C394.8 821.1 422.6 815.0 430.3 816.7C438.1 818.3 425.9 827.8 430.3 830.0C434.8 832.2 449.2 833.3 457.0 830.0C464.8 826.7 469.2 812.8 477.0 810.0C484.8 807.2 497.6 810.0 503.7 813.3C509.8 816.7 514.8 824.4 513.7 830.0C512.6 835.6 501.4 838.3 497.0 846.7C492.6 855.0 491.4 870.0 487.0 880.0C482.6 890.0 475.3 898.9 470.3 906.7C465.3 914.4 452.6 924.4 457.0 926.7C461.4 928.9 483.7 922.8 497.0 920.0C510.3 917.2 526.4 909.4 537.0 910.0C547.6 910.6 558.1 917.2 560.3 923.3C562.6 929.4 557.6 941.7 550.3 946.7C543.1 951.7 527.0 953.3 517.0 953.3C507.0 953.3 499.2 944.4 490.3 946.7C481.4 948.9 467.0 958.3 463.7 966.7C460.3 975.0 471.4 987.8 470.3 996.7C469.2 1005.6 464.8 1015.6 457.0 1020.0C449.2 1024.4 434.8 1024.4 423.7 1023.3C412.6 1022.2 399.2 1012.2 390.3 1013.3C381.4 1014.4 377.0 1028.9 370.3 1030.0C363.7 1031.1 353.7 1025.0 350.3 1020.0C347.0 1015.0 357.0 1003.9 350.3 1000.0C343.7 996.1 321.4 1000.6 310.3 996.7C299.2 992.8 289.8 986.7 283.7 976.7C277.6 966.7 274.2 952.8 273.7 936.7C273.1 920.6 277.0 897.8 280.3 880.0C283.7 862.2 289.8 844.4 293.7 830.0C297.6 815.6 298.7 800.0 303.7 793.3Z" fill="#5a5b2a" fill-opacity="0.68" filter="url(#b2)"/><path d="M303.7 793.3C308.7 786.7 313.7 787.2 323.7 790.0C333.7 792.8 353.7 805.0 363.7 810.0C373.7 815.0 372.6 818.9 383.7 820.0C394.8 821.1 422.6 815.0 430.3 816.7C438.1 818.3 425.9 827.8 430.3 830.0C434.8 832.2 449.2 833.3 457.0 830.0C464.8 826.7 469.2 812.8 477.0 810.0C484.8 807.2 497.6 810.0 503.7 813.3C509.8 816.7 514.8 824.4 513.7 830.0C512.6 835.6 501.4 838.3 497.0 846.7C492.6 855.0 491.4 870.0 487.0 880.0C482.6 890.0 475.3 898.9 470.3 906.7C465.3 914.4 452.6 924.4 457.0 926.7C461.4 928.9 483.7 922.8 497.0 920.0C510.3 917.2 526.4 909.4 537.0 910.0C547.6 910.6 558.1 917.2 560.3 923.3C562.6 929.4 557.6 941.7 550.3 946.7C543.1 951.7 527.0 953.3 517.0 953.3C507.0 953.3 499.2 944.4 490.3 946.7C481.4 948.9 467.0 958.3 463.7 966.7C460.3 975.0 471.4 987.8 470.3 996.7C469.2 1005.6 464.8 1015.6 457.0 1020.0C449.2 1024.4 434.8 1024.4 423.7 1023.3C412.6 1022.2 399.2 1012.2 390.3 1013.3C381.4 1014.4 377.0 1028.9 370.3 1030.0C363.7 1031.1 353.7 1025.0 350.3 1020.0C347.0 1015.0 357.0 1003.9 350.3 1000.0C343.7 996.1 321.4 1000.6 310.3 996.7C299.2 992.8 289.8 986.7 283.7 976.7C277.6 966.7 274.2 952.8 273.7 936.7C273.1 920.6 277.0 897.8 280.3 880.0C283.7 862.2 289.8 844.4 293.7 830.0C297.6 815.6 298.7 800.0 303.7 793.3Z" fill="url(#dense)"/>
<path d="M137.0 720.0C167.0 704.4 287.0 716.7 317.0 720.0C347.0 723.3 320.3 734.4 317.0 740.0C313.7 745.6 305.3 750.6 297.0 753.3C288.7 756.1 271.4 749.4 267.0 756.7C262.6 763.9 270.9 785.0 270.3 796.7C269.8 808.3 269.2 821.1 263.7 826.7C258.1 832.2 247.0 833.9 237.0 830.0C227.0 826.1 214.8 807.8 203.7 803.3C192.6 798.9 181.4 801.7 170.3 803.3C159.2 805.0 142.6 827.2 137.0 813.3C131.4 799.4 107.0 735.6 137.0 720.0Z" fill="#5a5b2a" fill-opacity="0.68" filter="url(#b2)"/><path d="M137.0 720.0C167.0 704.4 287.0 716.7 317.0 720.0C347.0 723.3 320.3 734.4 317.0 740.0C313.7 745.6 305.3 750.6 297.0 753.3C288.7 756.1 271.4 749.4 267.0 756.7C262.6 763.9 270.9 785.0 270.3 796.7C269.8 808.3 269.2 821.1 263.7 826.7C258.1 832.2 247.0 833.9 237.0 830.0C227.0 826.1 214.8 807.8 203.7 803.3C192.6 798.9 181.4 801.7 170.3 803.3C159.2 805.0 142.6 827.2 137.0 813.3C131.4 799.4 107.0 735.6 137.0 720.0Z" fill="url(#dense)"/>
<path d="M187.0 850.0C191.4 846.1 203.7 843.9 213.7 843.3C223.7 842.8 243.7 842.8 247.0 846.7C250.3 850.6 240.9 861.7 233.7 866.7C226.4 871.7 211.4 876.7 203.7 876.7C195.9 876.7 189.8 871.1 187.0 866.7C184.2 862.2 182.6 853.9 187.0 850.0Z" fill="#5a5b2a" fill-opacity="0.68" filter="url(#b2)"/><path d="M187.0 850.0C191.4 846.1 203.7 843.9 213.7 843.3C223.7 842.8 243.7 842.8 247.0 846.7C250.3 850.6 240.9 861.7 233.7 866.7C226.4 871.7 211.4 876.7 203.7 876.7C195.9 876.7 189.8 871.1 187.0 866.7C184.2 862.2 182.6 853.9 187.0 850.0Z" fill="url(#dense)"/>
<path d="M137.0 850.0C140.3 845.6 152.6 850.6 157.0 853.3C161.4 856.1 164.8 862.2 163.7 866.7C162.6 871.1 154.8 877.8 150.3 880.0C145.9 882.2 139.2 885.0 137.0 880.0C134.8 875.0 133.7 854.4 137.0 850.0Z" fill="#5a5b2a" fill-opacity="0.68" filter="url(#b2)"/><path d="M137.0 850.0C140.3 845.6 152.6 850.6 157.0 853.3C161.4 856.1 164.8 862.2 163.7 866.7C162.6 871.1 154.8 877.8 150.3 880.0C145.9 882.2 139.2 885.0 137.0 880.0C134.8 875.0 133.7 854.4 137.0 850.0Z" fill="url(#dense)"/>
<path d="M583.7 973.3C593.1 968.9 622.6 968.3 637.0 970.0C651.4 971.7 659.2 987.2 670.3 983.3C681.4 979.4 690.3 953.3 703.7 946.7C717.0 940.0 742.0 940.6 750.3 943.3C758.7 946.1 757.0 956.1 753.7 963.3C750.3 970.6 736.4 978.3 730.3 986.7C724.2 995.0 727.0 1007.8 717.0 1013.3C707.0 1018.9 680.3 1015.6 670.3 1020.0C660.3 1024.4 667.0 1040.0 657.0 1040.0C647.0 1040.0 623.1 1027.2 610.3 1020.0C597.6 1012.8 584.8 1004.4 580.3 996.7C575.9 988.9 574.2 977.8 583.7 973.3Z" fill="#5a5b2a" fill-opacity="0.68" filter="url(#b2)"/><path d="M583.7 973.3C593.1 968.9 622.6 968.3 637.0 970.0C651.4 971.7 659.2 987.2 670.3 983.3C681.4 979.4 690.3 953.3 703.7 946.7C717.0 940.0 742.0 940.6 750.3 943.3C758.7 946.1 757.0 956.1 753.7 963.3C750.3 970.6 736.4 978.3 730.3 986.7C724.2 995.0 727.0 1007.8 717.0 1013.3C707.0 1018.9 680.3 1015.6 670.3 1020.0C660.3 1024.4 667.0 1040.0 657.0 1040.0C647.0 1040.0 623.1 1027.2 610.3 1020.0C597.6 1012.8 584.8 1004.4 580.3 996.7C575.9 988.9 574.2 977.8 583.7 973.3Z" fill="url(#dense)"/>
<path d="M523.7 1036.7C528.7 1031.7 544.2 1021.7 553.7 1020.0C563.1 1018.3 570.9 1021.7 580.3 1026.7C589.8 1031.7 619.8 1046.1 610.3 1050.0C600.9 1053.9 538.1 1052.2 523.7 1050.0C509.2 1047.8 518.7 1041.7 523.7 1036.7Z" fill="#5a5b2a" fill-opacity="0.68" filter="url(#b2)"/><path d="M523.7 1036.7C528.7 1031.7 544.2 1021.7 553.7 1020.0C563.1 1018.3 570.9 1021.7 580.3 1026.7C589.8 1031.7 619.8 1046.1 610.3 1050.0C600.9 1053.9 538.1 1052.2 523.7 1050.0C509.2 1047.8 518.7 1041.7 523.7 1036.7Z" fill="url(#dense)"/>
<path d="M137.0 970.0C142.6 955.0 159.2 957.2 170.3 960.0C181.4 962.8 200.9 976.7 203.7 986.7C206.4 996.7 195.3 1009.4 187.0 1020.0C178.7 1030.6 162.0 1045.0 153.7 1050.0C145.3 1055.0 139.8 1063.3 137.0 1050.0C134.2 1036.7 131.4 985.0 137.0 970.0Z" fill="#5a5b2a" fill-opacity="0.68" filter="url(#b2)"/><path d="M137.0 970.0C142.6 955.0 159.2 957.2 170.3 960.0C181.4 962.8 200.9 976.7 203.7 986.7C206.4 996.7 195.3 1009.4 187.0 1020.0C178.7 1030.6 162.0 1045.0 153.7 1050.0C145.3 1055.0 139.8 1063.3 137.0 1050.0C134.2 1036.7 131.4 985.0 137.0 970.0Z" fill="url(#dense)"/>
<path d="M217.0 1033.3C221.4 1028.3 238.1 1020.0 247.0 1020.0C255.9 1020.0 267.6 1028.3 270.3 1033.3C273.1 1038.3 272.0 1047.2 263.7 1050.0C255.3 1052.8 228.1 1052.8 220.3 1050.0C212.6 1047.2 212.6 1038.3 217.0 1033.3Z" fill="#5a5b2a" fill-opacity="0.68" filter="url(#b2)"/><path d="M217.0 1033.3C221.4 1028.3 238.1 1020.0 247.0 1020.0C255.9 1020.0 267.6 1028.3 270.3 1033.3C273.1 1038.3 272.0 1047.2 263.7 1050.0C255.3 1052.8 228.1 1052.8 220.3 1050.0C212.6 1047.2 212.6 1038.3 217.0 1033.3Z" fill="url(#dense)"/>
<path d="M542.0 400.3L550.3 399.3L549.7 425.3L543.0 427.0Z" fill="#8f8781"/>
<path d="M567.0 412.0L577.0 407.0L583.7 412.0L582.0 422.0L570.3 425.3L565.3 418.7Z" fill="#8f8781"/>
<path d="M587.0 438.7L593.7 432.7L620.3 443.7L617.0 452.0L603.7 452.0Z" fill="#8f8781"/>
<path d="M960.3 223.0L970.3 223.0L972.0 258.0L964.3 258.0Z" fill="#8f8781"/>
<path d="M821.0 396.0L837.0 396.0L836.3 410.3L821.7 409.3Z" fill="#8f8781"/>
<path d="M790.3 407.0L799.7 407.0L799.7 414.7L790.3 414.7Z" fill="#8f8781"/>
<path d="M803.7 407.0L812.0 407.0L812.0 415.3L803.7 415.3Z" fill="#8f8781"/>
<path d="M793.0 423.7L825.7 423.7L825.7 432.0L793.0 432.0Z" fill="#8f8781"/>
<path d="M305.3 668.7L318.7 648.7L327.0 643.7L329.7 652.0L323.7 665.3L322.0 682.0L307.0 685.3Z" fill="#8f8781"/>
<path d="M700.3 700.3L737.0 665.3L763.7 675.3L763.7 718.7L737.0 722.0L733.7 752.0L710.3 752.0L700.3 745.3L700.3 722.0L710.3 715.3Z" fill="#8f8781"/>
<path d="M570.3 465.3L580.3 448.7L590.3 448.7L580.3 468.7Z" fill="#8f8781"/>
<path d="M610.3 448.7L623.7 448.7L620.3 462.0L615.3 462.0Z" fill="#8f8781"/>
<path d="M1245.0 753.2L1251.5 753.2L1251.5 760.8L1245.0 760.8Z" fill="#8f8781"/>
<path d="M1236.5 777.5L1243.5 777.5L1243.5 785.0L1236.5 785.0Z" fill="#8f8781"/>
<path d="M897.0 1033.2L912.0 1029.5L923.2 1023.2L924.5 1042.0L928.2 1050.0L875.8 1050.0L877.0 1042.0L897.0 1042.0Z" fill="#8f8781"/>
<path d="M1333.2 896.2L1340.8 896.2L1344.5 917.0L1322.0 917.8L1322.0 909.0L1332.8 907.5Z" fill="#8f8781"/>
<path d="M1213.0 693.0L1221.0 689.0L1245.0 710.0L1238.0 716.0Z" fill="#8f8781"/>
<path d="M357.0 92.0C361.4 97.6 378.1 115.3 383.7 125.3C389.2 135.3 384.8 144.2 390.3 152.0C395.9 159.8 410.3 165.3 417.0 172.0C423.7 178.7 427.6 183.1 430.3 192.0C433.1 200.9 432.0 215.9 433.7 225.3C435.3 234.8 438.1 239.8 440.3 248.7C442.6 257.6 444.2 272.3 447.0 278.7C449.8 285.1 448.7 283.7 457.0 287.0C465.3 290.3 487.6 293.4 497.0 298.7C506.4 303.9 507.0 310.3 513.7 318.7C520.3 327.0 528.7 337.6 537.0 348.7C545.3 359.8 559.2 379.2 563.7 385.3" fill="none" stroke="#d8ae90" stroke-width="2.6" stroke-linecap="butt"/>
<path d="M438.7 247.0C432.8 251.4 415.1 263.9 403.7 273.7C392.3 283.4 380.3 296.7 370.3 305.3C360.3 313.9 353.7 317.6 343.7 325.3C333.7 333.1 320.3 345.9 310.3 352.0C300.3 358.1 295.9 361.4 283.7 362.0C271.4 362.6 250.3 353.1 237.0 355.3C223.7 357.6 214.8 368.1 203.7 375.3C192.6 382.6 181.4 389.8 170.3 398.7C159.2 407.6 142.6 423.7 137.0 428.7" fill="none" stroke="#d8ae90" stroke-width="2.6" stroke-linecap="butt"/>
<path d="M170.3 243.7C175.9 246.2 187.0 253.4 203.7 258.7C220.3 263.9 250.3 273.1 270.3 275.3C290.3 277.6 307.0 270.9 323.7 272.0C340.3 273.1 359.2 279.8 370.3 282.0C381.4 284.2 387.0 284.8 390.3 285.3" fill="none" stroke="#d8ae90" stroke-width="2.6" stroke-dasharray="8 3.5" stroke-linecap="butt"/>
<path d="M452.0 285.3C448.4 289.2 436.7 298.7 430.3 308.7C423.9 318.7 419.2 335.3 413.7 345.3C408.1 355.3 404.2 360.9 397.0 368.7C389.8 376.4 377.0 384.8 370.3 392.0C363.7 399.2 359.2 408.7 357.0 412.0" fill="none" stroke="#d8ae90" stroke-width="2.6" stroke-dasharray="8 3.5" stroke-linecap="butt"/>
<path d="M710.3 92.0C703.7 99.8 681.4 124.8 670.3 138.7C659.2 152.6 649.2 165.3 643.7 175.3C638.1 185.3 635.9 190.9 637.0 198.7C638.1 206.4 643.7 214.8 650.3 222.0C657.0 229.2 668.1 233.7 677.0 242.0C685.9 250.3 695.9 261.4 703.7 272.0C711.4 282.6 717.6 294.2 723.7 305.3C729.8 316.4 735.9 329.2 740.3 338.7C744.8 348.1 745.9 354.2 750.3 362.0C754.8 369.8 762.6 379.8 767.0 385.3C771.4 390.9 775.3 393.7 777.0 395.3" fill="none" stroke="#d8ae90" stroke-width="2.6" stroke-linecap="butt"/>
<path d="M537.0 348.7C535.3 354.2 529.8 369.2 527.0 382.0C524.2 394.8 521.7 413.7 520.3 425.3C518.9 437.0 519.8 444.2 518.7 452.0C517.6 459.8 518.9 466.4 513.7 472.0C508.4 477.6 497.0 480.3 487.0 485.3C477.0 490.3 464.8 493.1 453.7 502.0C442.6 510.9 429.2 528.1 420.3 538.7C411.4 549.2 405.3 556.4 400.3 565.3C395.3 574.2 392.0 587.6 390.3 592.0" fill="none" stroke="#d8ae90" stroke-width="2.6" stroke-dasharray="8 3.5" stroke-linecap="butt"/>
<path d="M563.7 392.0C564.8 393.9 563.7 400.3 570.3 403.7C577.0 407.0 592.6 407.8 603.7 412.0C614.8 416.2 627.0 422.0 637.0 428.7C647.0 435.3 659.2 448.1 663.7 452.0" fill="none" stroke="#d8ae90" stroke-width="2.6" stroke-dasharray="8 3.5" stroke-linecap="butt"/>
<path d="M880.3 105.3C880.9 109.8 884.8 122.0 883.7 132.0C882.6 142.0 876.2 153.7 873.7 165.3C871.2 177.0 868.7 189.2 868.7 202.0C868.7 214.8 871.2 228.1 873.7 242.0C876.2 255.9 880.3 272.6 883.7 285.3C887.0 298.1 890.9 308.1 893.7 318.7C896.4 329.2 898.4 340.3 900.3 348.7C902.3 357.0 904.8 359.8 905.3 368.7C905.9 377.6 902.8 392.6 903.7 402.0C904.5 411.4 908.1 419.2 910.3 425.3C912.6 431.4 914.2 434.2 917.0 438.7C919.8 443.1 921.2 446.4 927.0 452.0C932.8 457.6 943.7 465.3 952.0 472.0C960.3 478.7 970.8 485.8 977.0 492.0C983.2 498.2 985.3 502.4 989.5 509.5C993.7 516.6 997.4 527.0 1002.0 534.5C1006.6 542.0 1012.4 549.5 1017.0 554.5C1021.6 559.5 1027.4 562.8 1029.5 564.5" fill="none" stroke="#d8ae90" stroke-width="2.6" stroke-linecap="butt"/>
<path d="M940.3 105.3C942.0 108.7 948.1 116.4 950.3 125.3C952.6 134.2 953.7 147.6 953.7 158.7C953.7 169.8 949.8 180.9 950.3 192.0C950.9 203.1 955.9 219.8 957.0 225.3" fill="none" stroke="#d8ae90" stroke-width="2.6" stroke-linecap="butt"/>
<path d="M957.0 225.3C958.1 232.0 961.4 248.7 963.7 265.3C965.9 282.0 968.1 307.0 970.3 325.3C972.6 343.7 974.8 361.4 977.0 375.3C979.2 389.2 980.3 395.9 983.7 408.7C987.0 421.4 994.4 444.8 997.0 452.0C999.6 459.2 998.7 448.7 999.5 452.0C1000.3 455.3 1003.2 465.3 1002.0 472.0C1000.8 478.7 994.9 487.8 992.0 492.0C989.1 496.2 985.8 496.2 984.5 497.0" fill="none" stroke="#d8ae90" stroke-width="2.6" stroke-dasharray="8 3.5" stroke-linecap="butt"/>
<path d="M880.3 278.7C874.2 281.4 855.3 289.8 843.7 295.3C832.0 300.9 821.4 307.0 810.3 312.0C799.2 317.0 789.2 322.0 777.0 325.3C764.8 328.7 752.0 331.4 737.0 332.0C722.0 332.6 703.7 326.4 687.0 328.7C670.3 330.9 648.1 339.2 637.0 345.3C625.9 351.4 625.9 357.6 620.3 365.3C614.8 373.1 612.0 385.6 603.7 392.0C595.3 398.4 575.9 401.7 570.3 403.7" fill="none" stroke="#d8ae90" stroke-width="2.6" stroke-dasharray="8 3.5" stroke-linecap="butt"/>
<path d="M785.3 412.0L783.7 452.0" fill="none" stroke="#d8ae90" stroke-width="2.6" stroke-dasharray="8 3.5" stroke-linecap="butt"/>
<path d="M555.3 548.7C563.4 549.2 588.9 550.1 603.7 552.0C618.4 553.9 627.0 559.8 643.7 560.3C660.3 560.9 690.3 555.1 703.7 555.3C717.0 555.6 718.1 563.1 723.7 562.0C729.2 560.9 732.0 558.7 737.0 548.7C742.0 538.7 749.2 514.8 753.7 502.0C758.1 489.2 762.0 477.0 763.7 472.0" fill="none" stroke="#d8ae90" stroke-width="2.6" stroke-dasharray="8 3.5" stroke-linecap="butt"/>
<path d="M723.7 562.0C727.6 560.3 738.1 554.2 747.0 552.0C755.9 549.8 768.7 547.0 777.0 548.7C785.3 550.3 791.6 556.4 797.0 562.0C802.4 567.6 806.2 576.2 809.5 582.0C812.8 587.8 815.8 594.5 817.0 597.0" fill="none" stroke="#d8ae90" stroke-width="2.6" stroke-dasharray="8 3.5" stroke-linecap="butt"/>
<path d="M523.7 562.0C519.8 567.0 505.9 582.6 500.3 592.0C494.8 601.4 496.4 609.8 490.3 618.7C484.2 627.6 472.6 634.2 463.7 645.3C454.8 656.4 441.4 678.7 437.0 685.3" fill="none" stroke="#d8ae90" stroke-width="2.6" stroke-dasharray="8 3.5" stroke-linecap="butt"/>
<path d="M320.3 475.3C316.4 480.9 305.9 498.7 297.0 508.7C288.1 518.7 272.0 530.9 267.0 535.3" fill="none" stroke="#d8ae90" stroke-width="2.6" stroke-dasharray="8 3.5" stroke-linecap="butt"/>
<path d="M917.0 439.5C914.5 440.5 906.6 443.7 902.0 445.8C897.4 447.8 894.5 447.6 889.5 452.0C884.5 456.4 876.6 463.7 872.0 472.0C867.4 480.3 866.2 490.8 862.0 502.0C857.8 513.2 852.8 524.5 847.0 539.5C841.2 554.5 833.7 576.6 827.0 592.0C820.3 607.4 815.3 619.9 807.0 632.0C798.7 644.1 785.5 655.2 777.0 664.5C768.5 673.8 762.2 680.0 756.0 687.5C749.8 695.0 742.2 705.8 739.5 709.5" fill="none" stroke="#d8ae90" stroke-width="2.6" stroke-linecap="butt"/>
<path d="M740.0 705.0C738.5 707.3 734.8 714.2 731.0 719.0C727.2 723.8 720.2 728.7 717.0 734.0C713.8 739.3 712.8 748.2 712.0 751.0" fill="none" stroke="#dcc0a8" stroke-width="2.6" stroke-linecap="butt"/>
<path d="M1105.0 587.5C1107.6 590.3 1115.7 597.7 1120.8 604.2C1125.9 610.7 1130.9 619.8 1135.8 626.7C1140.7 633.6 1144.8 638.6 1150.0 645.8C1155.2 652.9 1160.6 662.5 1166.7 669.6C1172.8 676.7 1179.7 682.3 1186.5 688.5C1193.3 694.7 1201.2 702.0 1207.3 706.8C1213.4 711.5 1219.9 715.1 1223.0 717.0C1226.1 718.9 1229.8 718.5 1226.0 718.0C1222.2 717.5 1208.8 714.8 1200.0 714.0C1191.2 713.2 1181.3 712.7 1173.0 713.0C1164.7 713.3 1156.0 714.7 1150.0 716.0C1144.0 717.3 1147.1 719.2 1137.0 721.0C1126.9 722.8 1103.7 723.5 1089.5 727.0C1075.3 730.5 1064.5 737.4 1052.0 742.0C1039.5 746.6 1027.0 749.5 1014.5 754.5C1002.0 759.5 989.5 765.3 977.0 772.0C964.5 778.7 951.2 786.6 939.5 794.5C927.8 802.4 916.2 811.6 907.0 819.5C897.8 827.4 887.8 835.8 884.5 842.0C881.2 848.2 884.1 850.8 887.0 857.0C889.9 863.2 895.3 873.2 902.0 879.5C908.7 885.8 916.2 890.8 927.0 894.5C937.8 898.2 956.2 898.7 967.0 902.0C977.8 905.3 985.8 909.1 992.0 914.5C998.2 919.9 1001.6 927.0 1004.5 934.5C1007.4 942.0 1008.2 949.9 1009.5 959.5C1010.8 969.1 1009.9 981.6 1012.0 992.0C1014.1 1002.4 1019.5 1012.3 1022.0 1022.0C1024.5 1031.7 1026.2 1045.3 1027.0 1050.0" fill="none" stroke="#d8ae90" stroke-width="2.6" stroke-linecap="butt"/>
<path d="M777.0 744.5C781.2 746.2 793.7 746.6 802.0 754.5C810.3 762.4 817.4 780.8 827.0 792.0C836.6 803.2 849.9 813.7 859.5 822.0C869.1 830.3 880.3 838.7 884.5 842.0" fill="none" stroke="#d8ae90" stroke-width="2.6" stroke-dasharray="8 3.5" stroke-linecap="butt"/>
<path d="M904.5 882.0C902.0 886.6 892.8 898.7 889.5 909.5C886.2 920.3 885.3 934.9 884.5 947.0C883.7 959.1 886.6 975.3 884.5 982.0C882.4 988.7 875.3 990.8 872.0 987.0C868.7 983.2 866.6 967.0 864.5 959.5C862.4 952.0 862.4 947.8 859.5 942.0C856.6 936.2 852.4 928.7 847.0 924.5C841.6 920.3 830.3 918.2 827.0 917.0" fill="none" stroke="#d8ae90" stroke-width="2.6" stroke-dasharray="8 3.5" stroke-linecap="butt"/>
<path d="M1227.0 739.5C1220.8 742.8 1200.8 753.2 1189.5 759.5C1178.2 765.8 1165.8 770.8 1159.5 777.0C1153.2 783.2 1155.8 789.9 1152.0 797.0C1148.2 804.1 1141.6 813.2 1137.0 819.5C1132.4 825.8 1127.4 827.4 1124.5 834.5C1121.6 841.6 1122.4 853.2 1119.5 862.0C1116.6 870.8 1112.0 878.7 1107.0 887.0C1102.0 895.3 1094.1 904.1 1089.5 912.0C1084.9 919.9 1080.8 926.6 1079.5 934.5C1078.2 942.4 1079.5 949.9 1082.0 959.5C1084.5 969.1 1092.8 981.6 1094.5 992.0C1096.2 1002.4 1093.7 1012.3 1092.0 1022.0C1090.3 1031.7 1085.8 1045.3 1084.5 1050.0" fill="none" stroke="#d8ae90" stroke-width="2.6" stroke-dasharray="8 3.5" stroke-linecap="butt"/>
<path d="M1227.0 739.5C1224.5 744.9 1215.8 760.3 1212.0 772.0C1208.2 783.7 1206.2 797.8 1204.5 809.5C1202.8 821.2 1200.8 831.6 1202.0 842.0C1203.2 852.4 1207.0 862.0 1212.0 872.0C1217.0 882.0 1226.6 893.2 1232.0 902.0C1237.4 910.8 1242.4 920.8 1244.5 924.5" fill="none" stroke="#d8ae90" stroke-width="2.6" stroke-linecap="butt"/>
<path d="M872.0 987.0C874.9 992.0 880.3 1011.2 889.5 1017.0C898.7 1022.8 915.8 1019.1 927.0 1022.0C938.2 1024.9 947.4 1029.8 957.0 1034.5C966.6 1039.2 979.9 1047.4 984.5 1050.0" fill="none" stroke="#d8ae90" stroke-width="2.6" stroke-dasharray="8 3.5" stroke-linecap="butt"/>
<path d="M1267.0 937.0C1271.2 936.0 1284.9 930.8 1292.0 930.8C1299.1 930.8 1301.6 933.5 1309.5 937.0C1317.4 940.5 1328.2 946.6 1339.5 952.0C1350.8 957.4 1365.8 964.5 1377.0 969.5C1388.2 974.5 1397.8 978.2 1407.0 982.0C1416.2 985.8 1423.7 987.8 1432.0 992.0C1440.3 996.2 1449.5 1002.0 1457.0 1007.0C1464.5 1012.0 1470.3 1014.8 1477.0 1022.0C1483.7 1029.2 1493.7 1045.3 1497.0 1050.0" fill="none" stroke="#d8ae90" stroke-width="2.6" stroke-linecap="butt"/>
<path d="M1309.5 937.0C1304.9 939.5 1290.8 946.6 1282.0 952.0C1273.2 957.4 1263.7 963.7 1257.0 969.5C1250.3 975.3 1245.3 978.2 1242.0 987.0C1238.7 995.8 1236.8 1011.5 1237.0 1022.0C1237.2 1032.5 1242.2 1045.3 1243.2 1050.0" fill="none" stroke="#d8ae90" stroke-width="2.6" stroke-linecap="butt"/>
<path d="M656.0 437.0C658.7 440.8 664.2 457.5 672.0 460.0C679.8 462.5 692.7 455.0 703.0 452.0C713.3 449.0 724.5 445.3 734.0 442.0C743.5 438.7 751.7 435.5 760.0 432.0C768.3 428.5 764.5 422.7 784.0 421.0C803.5 419.3 859.8 420.7 877.0 422.0C894.2 423.3 885.3 427.6 887.0 428.7" fill="none" stroke="#d8ae90" stroke-width="2.6" stroke-dasharray="8 3.5" stroke-linecap="butt"/>
<path d="M262.0 92.0C266.7 96.4 280.6 109.5 290.3 118.7C300.1 127.8 310.3 136.4 320.3 147.0C330.3 157.6 340.9 168.9 350.3 182.0C359.8 195.1 368.7 210.9 377.0 225.3C385.3 239.8 394.5 258.4 400.3 268.7C406.2 278.9 410.1 283.9 412.0 287.0" fill="none" stroke="#1e5959" stroke-width="3.7" stroke-linecap="round" stroke-linejoin="round"/>
<path d="M263.7 162.0C267.6 160.9 277.6 157.3 287.0 155.3C296.4 153.4 314.8 151.2 320.3 150.3" fill="none" stroke="#1e5959" stroke-width="3.7" stroke-linecap="round" stroke-linejoin="round"/>
<path d="M137.0 305.3C140.3 304.2 147.6 300.9 157.0 298.7C166.4 296.4 183.1 292.6 193.7 292.0C204.2 291.4 211.4 293.1 220.3 295.3C229.2 297.6 238.7 303.9 247.0 305.3C255.3 306.7 262.6 304.3 270.3 303.7C278.1 303.0 284.8 301.6 293.7 301.3C302.6 301.1 312.0 301.3 323.7 302.0C335.3 302.7 352.6 305.6 363.7 305.3C374.8 305.1 382.3 303.1 390.3 300.3C398.4 297.6 405.9 292.8 412.0 288.7C418.1 284.5 422.6 280.3 427.0 275.3C431.4 270.3 434.8 263.9 438.7 258.7C442.6 253.4 439.5 249.5 450.3 243.7C461.2 237.8 489.2 228.9 503.7 223.7C518.1 218.4 525.9 217.3 537.0 212.0C548.1 206.7 559.2 197.8 570.3 192.0C581.4 186.2 590.3 180.6 603.7 177.0C617.0 173.4 633.7 171.4 650.3 170.3C667.0 169.2 682.6 169.6 703.7 170.3C724.8 171.1 761.4 174.4 777.0 174.7C792.6 174.9 791.4 174.7 797.0 172.0C802.6 169.3 806.4 164.2 810.3 158.7C814.2 153.1 814.8 143.9 820.3 138.7C825.9 133.4 835.3 128.7 843.7 127.0C852.0 125.3 862.6 127.0 870.3 128.7C878.1 130.3 881.4 133.7 890.3 137.0C899.2 140.3 913.1 145.9 923.7 148.7C934.2 151.4 946.4 152.7 953.7 153.7C960.9 154.7 964.8 154.5 967.0 154.7" fill="none" stroke="#1e5959" stroke-width="3.7" stroke-linecap="round" stroke-linejoin="round"/>
<path d="M385.3 305.3C382.8 309.8 378.4 320.3 370.3 332.0C362.3 343.7 348.1 362.0 337.0 375.3C325.9 388.7 314.2 399.2 303.7 412.0C293.1 424.8 282.6 442.0 273.7 452.0C264.8 462.0 255.9 465.3 250.3 472.0C244.8 478.7 244.8 487.0 240.3 492.0C235.9 497.0 229.8 500.1 223.7 502.0C217.6 503.9 212.6 503.4 203.7 503.7C194.8 503.9 181.4 502.3 170.3 503.7C159.2 505.1 142.6 510.6 137.0 512.0" fill="none" stroke="#1e5959" stroke-width="5.7" stroke-linecap="round" stroke-linejoin="round"/>
<path d="M357.0 478.7C358.1 474.2 361.4 460.3 363.7 452.0C365.9 443.7 365.9 437.6 370.3 428.7C374.8 419.8 382.0 406.4 390.3 398.7C398.7 390.9 407.0 387.0 420.3 382.0C433.7 377.0 452.0 374.5 470.3 368.7C488.7 362.8 522.6 343.1 530.3 347.0C538.1 350.9 521.4 380.1 517.0 392.0C512.6 403.9 508.7 408.7 503.7 418.7C498.7 428.7 491.4 443.1 487.0 452.0C482.6 460.9 482.6 465.3 477.0 472.0C471.4 478.7 463.1 483.7 453.7 492.0C444.2 500.3 430.9 512.6 420.3 522.0C409.8 531.4 399.2 538.9 390.3 548.7C381.4 558.4 370.9 575.1 367.0 580.3" fill="none" stroke="#1e5959" stroke-width="3.7" stroke-linecap="round" stroke-linejoin="round"/>
<path d="M530.3 347.0C534.2 347.3 545.3 346.7 553.7 348.7C562.0 350.6 570.9 355.6 580.3 358.7C589.8 361.7 600.9 366.4 610.3 367.0C619.8 367.6 627.0 365.1 637.0 362.0C647.0 358.9 658.1 352.0 670.3 348.7C682.6 345.3 699.2 342.0 710.3 342.0C721.4 342.0 729.2 347.6 737.0 348.7C744.8 349.8 750.3 349.5 757.0 348.7C763.7 347.8 770.3 343.7 777.0 343.7C783.7 343.7 789.8 346.4 797.0 348.7C804.2 350.9 812.6 356.4 820.3 357.0C828.1 357.6 834.2 355.6 843.7 352.0C853.1 348.4 867.6 339.3 877.0 335.3C886.4 331.3 893.7 328.6 900.3 328.0C907.0 327.4 912.0 329.7 917.0 332.0C922.0 334.3 925.9 340.9 930.3 342.0C934.8 343.1 933.7 339.2 943.7 338.7C953.7 338.1 982.6 338.7 990.3 338.7" fill="none" stroke="#1e5959" stroke-width="3.7" stroke-linecap="round" stroke-linejoin="round"/>
<path d="M820.3 356.3C816.4 357.8 804.2 362.4 797.0 365.3C789.8 368.2 784.2 372.0 777.0 373.7C769.8 375.3 763.1 372.3 753.7 375.3C744.2 378.4 734.2 384.2 720.3 392.0C706.4 399.8 683.1 413.7 670.3 422.0C657.6 430.3 649.2 437.0 643.7 442.0C638.1 447.0 640.9 444.8 637.0 452.0C633.1 459.2 629.2 475.3 620.3 485.3C611.4 495.3 593.7 503.1 583.7 512.0C573.7 520.9 572.0 529.8 560.3 538.7C548.7 547.6 528.7 557.0 513.7 565.3C498.7 573.7 480.3 579.8 470.3 588.7C460.3 597.6 460.3 607.0 453.7 618.7C447.0 630.3 439.8 645.9 430.3 658.7C420.9 671.4 407.6 686.2 397.0 695.3C386.4 704.5 372.0 710.6 367.0 713.7" fill="none" stroke="#1e5959" stroke-width="3.7" stroke-linecap="round" stroke-linejoin="round"/>
<path d="M781.0 400.3C780.3 401.7 779.3 403.4 777.0 408.7C774.7 413.9 770.3 424.8 767.0 432.0C763.7 439.2 760.9 442.6 757.0 452.0C753.1 461.4 749.8 475.9 743.7 488.7C737.6 501.4 728.1 516.4 720.3 528.7C712.6 540.9 705.3 551.4 697.0 562.0C688.7 572.6 680.3 580.9 670.3 592.0C660.3 603.1 647.0 616.4 637.0 628.7C627.0 640.9 617.0 652.6 610.3 665.3C603.7 678.1 599.7 696.2 597.0 705.3C594.3 714.5 596.8 710.1 594.0 720.3C591.2 730.6 586.5 748.9 580.3 766.7C574.2 784.4 564.2 808.3 557.0 826.7C549.8 845.0 543.1 861.1 537.0 876.7C530.9 892.2 526.4 907.2 520.3 920.0C514.2 932.8 507.6 942.2 500.3 953.3C493.1 964.4 484.2 976.7 477.0 986.7C469.8 996.7 465.9 1007.8 457.0 1013.3C448.1 1018.9 434.2 1018.1 423.7 1020.0C413.1 1021.9 398.7 1024.2 393.7 1025.0" fill="none" stroke="#1e5959" stroke-width="5.2" stroke-linecap="round" stroke-linejoin="round"/>
<path d="M137.0 227.0L157.0 220.3" fill="none" stroke="#1e5959" stroke-width="3.7" stroke-linecap="round" stroke-linejoin="round"/>
<path d="M930.3 342.0C928.4 343.4 923.7 347.7 918.7 350.3C913.7 352.9 908.4 356.4 900.3 357.7C892.3 358.9 879.8 355.8 870.3 357.7C860.9 359.5 852.6 363.5 843.7 368.7C834.8 373.8 828.1 382.3 817.0 388.7C805.9 395.1 783.7 403.9 777.0 407.0" fill="none" stroke="#1e5959" stroke-width="3.7" stroke-linecap="round" stroke-linejoin="round"/>
<path d="M995.3 393.7C990.1 395.6 973.9 401.4 963.7 405.3C953.4 409.2 942.6 413.4 933.7 417.0C924.8 420.6 919.8 423.9 910.3 427.0C900.9 430.1 888.1 434.8 877.0 435.3C865.9 435.9 853.8 429.8 843.7 430.3C833.6 430.9 820.9 437.3 816.3 438.7" fill="none" stroke="#1e5959" stroke-width="3.7" stroke-linecap="round" stroke-linejoin="round"/>
<path d="M816.3 438.7C814.8 439.5 810.2 441.4 807.0 443.7C803.8 445.9 800.2 447.0 797.0 452.0C793.8 457.0 791.0 466.4 787.7 473.7C784.3 480.9 782.7 485.1 777.0 495.3C771.3 505.6 763.7 519.8 753.7 535.3C743.7 550.9 728.1 573.7 717.0 588.7C705.9 603.7 694.8 612.6 687.0 625.3C679.2 638.1 676.2 650.3 670.3 665.3C664.5 680.3 655.3 706.2 652.0 715.3C648.7 724.4 652.3 713.7 650.3 720.0C648.4 726.3 643.1 741.1 640.3 753.3C637.6 765.6 637.0 780.6 633.7 793.3C630.3 806.1 623.4 820.0 620.3 830.0C617.3 840.0 616.2 849.4 615.3 853.3" fill="none" stroke="#1e5959" stroke-width="5.2" stroke-linecap="round" stroke-linejoin="round"/>
<path d="M207.0 505.3C204.2 510.3 193.9 524.8 190.3 535.3C186.7 545.9 185.9 557.6 185.3 568.7C184.8 579.8 185.9 588.1 187.0 602.0C188.1 615.9 190.9 634.8 192.0 652.0C193.1 669.2 193.4 696.4 193.7 705.3" fill="none" stroke="#1e5959" stroke-width="3.7" stroke-linecap="round" stroke-linejoin="round"/>
<path d="M560.3 538.7C558.1 543.7 552.6 559.2 547.0 568.7C541.4 578.1 532.6 585.3 527.0 595.3C521.4 605.3 517.0 616.4 513.7 628.7C510.3 640.9 508.7 655.9 507.0 668.7C505.3 681.4 504.9 697.0 503.7 705.3C502.4 713.7 501.6 709.6 499.3 718.7C497.1 727.8 495.2 747.0 490.3 760.0C485.5 773.0 477.6 783.3 470.3 796.7C463.1 810.0 455.3 826.7 447.0 840.0C438.7 853.3 428.7 867.8 420.3 876.7C412.0 885.6 405.3 888.9 397.0 893.3C388.7 897.8 379.2 898.3 370.3 903.3C361.4 908.3 350.9 915.6 343.7 923.3C336.4 931.1 332.0 942.2 327.0 950.0C322.0 957.8 320.9 963.3 313.7 970.0C306.4 976.7 292.0 981.7 283.7 990.0C275.3 998.3 269.2 1012.2 263.7 1020.0C258.1 1027.8 257.6 1031.7 250.3 1036.7C243.1 1041.7 225.3 1047.8 220.3 1050.0" fill="none" stroke="#1e5959" stroke-width="3.7" stroke-linecap="round" stroke-linejoin="round"/>
<path d="M717.0 588.7C717.0 597.0 717.3 625.3 717.0 638.7C716.7 652.0 715.3 659.5 715.3 668.7C715.3 677.8 716.7 689.5 717.0 693.7" fill="none" stroke="#1e5959" stroke-width="3.7" stroke-linecap="round" stroke-linejoin="round"/>
<path d="M363.7 720.0C358.1 725.0 341.4 741.1 330.3 750.0C319.2 758.9 305.9 765.0 297.0 773.3C288.1 781.7 282.0 790.0 277.0 800.0C272.0 810.0 269.8 821.7 267.0 833.3C264.2 845.0 263.7 857.8 260.3 870.0C257.0 882.2 253.7 895.0 247.0 906.7C240.3 918.3 230.3 928.3 220.3 940.0C210.3 951.7 198.1 963.3 187.0 976.7C175.9 990.0 162.0 1009.4 153.7 1020.0C145.3 1030.6 139.8 1036.7 137.0 1040.0" fill="none" stroke="#1e5959" stroke-width="3.7" stroke-linecap="round" stroke-linejoin="round"/>
<path d="M267.0 833.3C262.0 835.6 246.4 841.1 237.0 846.7C227.6 852.2 218.7 860.0 210.3 866.7C202.0 873.3 192.6 879.4 187.0 886.7C181.4 893.9 182.0 903.9 177.0 910.0C172.0 916.1 163.7 919.7 157.0 923.3C150.3 926.9 140.3 930.3 137.0 931.7" fill="none" stroke="#1e5959" stroke-width="3.7" stroke-linecap="round" stroke-linejoin="round"/>
<path d="M542.0 1038.3L548.7 1050.0" fill="none" stroke="#1e5959" stroke-width="3.7" stroke-linecap="round" stroke-linejoin="round"/>
<path d="M1023.2 469.5C1019.7 472.4 1009.7 479.1 1002.0 487.0C994.3 494.9 985.3 506.2 977.0 517.0C968.7 527.8 961.2 539.9 952.0 552.0C942.8 564.1 931.6 578.2 922.0 589.5C912.4 600.8 902.8 610.8 894.5 619.5C886.2 628.2 877.0 634.5 872.0 642.0C867.0 649.5 866.2 656.6 864.5 664.5C862.8 672.4 863.2 679.9 862.0 689.5C860.8 699.1 859.1 711.6 857.0 722.0C854.9 732.4 853.2 741.6 849.5 752.0C845.8 762.4 839.5 773.7 834.5 784.5C829.5 795.3 823.2 808.2 819.5 817.0C815.8 825.8 813.2 833.7 812.0 837.0" fill="none" stroke="#1e5959" stroke-width="3.7" stroke-linecap="round" stroke-linejoin="round"/>
<path d="M1129.5 579.5C1126.6 582.0 1117.0 588.2 1112.0 594.5C1107.0 600.8 1104.1 607.4 1099.5 617.0C1094.9 626.6 1091.2 641.2 1084.5 652.0C1077.8 662.8 1067.0 674.5 1059.5 682.0C1052.0 689.5 1045.3 693.0 1039.5 697.0C1033.7 701.0 1027.0 704.3 1024.5 705.8" fill="none" stroke="#1e5959" stroke-width="3.2" stroke-linecap="round" stroke-linejoin="round"/>
<path d="M830.8 866.5C834.3 867.8 844.3 872.2 852.0 874.5C859.7 876.8 869.5 879.2 877.0 880.0C884.5 880.8 888.7 880.5 897.0 879.0C905.3 877.5 917.0 873.2 927.0 870.8C937.0 868.3 946.2 868.5 957.0 864.5C967.8 860.5 982.4 850.2 992.0 847.0C1001.6 843.8 1006.6 846.2 1014.5 845.0C1022.4 843.8 1029.1 842.5 1039.5 839.5C1049.9 836.5 1064.5 831.2 1077.0 827.0C1089.5 822.8 1102.8 818.2 1114.5 814.5C1126.2 810.8 1137.4 809.5 1147.0 804.5C1156.6 799.5 1162.8 790.3 1172.0 784.5C1181.2 778.7 1192.0 773.7 1202.0 769.5C1212.0 765.3 1222.8 763.7 1232.0 759.5C1241.2 755.3 1249.9 748.2 1257.0 744.5C1264.1 740.8 1271.6 738.2 1274.5 737.0" fill="none" stroke="#1e5959" stroke-width="3.7" stroke-linecap="round" stroke-linejoin="round"/>
<path d="M1307.0 762.0C1303.7 765.8 1295.3 777.0 1287.0 784.5C1278.7 792.0 1266.2 799.1 1257.0 807.0C1247.8 814.9 1241.2 822.8 1232.0 832.0C1222.8 841.2 1211.2 852.0 1202.0 862.0C1192.8 872.0 1185.3 881.2 1177.0 892.0C1168.7 902.8 1158.2 917.8 1152.0 927.0C1145.8 936.2 1142.0 939.5 1139.5 947.0C1137.0 954.5 1137.4 964.5 1137.0 972.0C1136.6 979.5 1137.4 983.7 1137.0 992.0C1136.6 1000.3 1137.4 1012.3 1134.5 1022.0C1131.6 1031.7 1122.0 1045.3 1119.5 1050.0" fill="none" stroke="#1e5959" stroke-width="3.7" stroke-linecap="round" stroke-linejoin="round"/>
<path d="M962.0 959.5C966.6 961.2 978.7 966.6 989.5 969.5C1000.3 972.4 1014.5 975.3 1027.0 977.0C1039.5 978.7 1053.2 979.2 1064.5 979.5C1075.8 979.8 1086.2 980.2 1094.5 979.0C1102.8 977.8 1107.4 974.2 1114.5 972.0C1121.6 969.8 1133.2 966.8 1137.0 965.8" fill="none" stroke="#1e5959" stroke-width="3.7" stroke-linecap="round" stroke-linejoin="round"/>
<path d="M1234.5 947.0C1234.3 954.5 1234.9 979.5 1233.2 992.0C1231.6 1004.5 1228.0 1012.3 1224.5 1022.0C1221.0 1031.7 1214.1 1045.3 1212.0 1050.0" fill="none" stroke="#1e5959" stroke-width="3.7" stroke-linecap="round" stroke-linejoin="round"/>
<path d="M1330.2 780.0C1328.0 784.5 1321.4 797.9 1317.0 806.8C1312.6 815.6 1309.3 823.2 1303.8 833.2C1298.2 843.2 1290.4 855.6 1283.8 866.8C1277.1 877.9 1269.3 890.6 1263.8 900.0C1258.2 909.4 1252.5 919.4 1250.2 923.2" fill="none" stroke="#1e5959" stroke-width="3.7" stroke-linecap="round" stroke-linejoin="round"/>
<path d="M769.5 998.2C776.2 997.8 797.0 995.8 809.5 995.8C822.0 995.8 833.2 996.0 844.5 998.2C855.8 1000.5 866.2 1004.5 877.0 1009.5C887.8 1014.5 897.0 1021.5 909.5 1028.2C922.0 1035.0 944.9 1046.4 952.0 1050.0" fill="none" stroke="#1e5959" stroke-width="3.7" stroke-linecap="round" stroke-linejoin="round"/>
<path d="M950.0 92.0C951.3 94.7 955.5 102.5 958.0 108.0C960.5 113.5 963.5 117.2 965.0 125.0C966.5 132.8 966.2 140.0 967.0 155.0C967.8 170.0 968.3 194.3 970.0 215.0C971.7 235.7 974.5 258.3 977.0 279.0C979.5 299.7 981.7 320.2 985.0 339.0C988.3 357.8 992.2 373.7 997.0 392.0C1001.8 410.3 1009.0 436.2 1014.0 449.0C1019.0 461.8 1021.3 462.2 1027.0 469.0C1032.7 475.8 1040.8 483.3 1048.0 490.0C1055.2 496.7 1062.7 502.0 1070.0 509.0C1077.3 516.0 1085.3 524.8 1092.0 532.0C1098.7 539.2 1103.4 544.0 1110.0 552.0C1116.6 560.0 1126.2 573.1 1131.7 580.0C1137.2 586.9 1138.9 588.0 1143.3 593.3C1147.7 598.6 1153.7 605.3 1158.3 611.7C1162.9 618.1 1166.6 625.5 1170.8 631.7C1175.0 638.0 1178.0 642.9 1183.3 649.2C1188.6 655.5 1197.6 664.5 1202.5 669.6C1207.4 674.7 1208.2 675.5 1212.5 680.0C1216.8 684.5 1222.3 690.6 1228.0 696.4C1233.7 702.2 1238.6 708.1 1246.4 714.6C1254.2 721.1 1265.0 727.6 1275.0 735.4C1285.0 743.2 1297.2 754.1 1306.3 761.5C1315.4 768.9 1321.5 772.3 1329.7 779.7C1337.9 787.1 1346.6 796.6 1355.7 805.7C1364.8 814.8 1377.0 827.0 1384.4 834.4C1391.8 841.8 1392.4 842.4 1400.0 850.0C1407.6 857.6 1416.7 868.3 1430.0 880.0C1443.3 891.7 1466.2 909.5 1480.0 920.0C1493.8 930.5 1499.2 934.7 1513.0 943.0C1526.8 951.3 1546.3 960.0 1563.0 970.0C1579.7 980.0 1596.3 992.5 1613.0 1003.0C1629.7 1013.5 1649.0 1025.2 1663.0 1033.0C1677.0 1040.8 1691.3 1047.2 1697.0 1050.0L1762 1050L1762 92Z" fill="#205453"/>
<clipPath id="seaclip"><path d="M950.0 92.0C951.3 94.7 955.5 102.5 958.0 108.0C960.5 113.5 963.5 117.2 965.0 125.0C966.5 132.8 966.2 140.0 967.0 155.0C967.8 170.0 968.3 194.3 970.0 215.0C971.7 235.7 974.5 258.3 977.0 279.0C979.5 299.7 981.7 320.2 985.0 339.0C988.3 357.8 992.2 373.7 997.0 392.0C1001.8 410.3 1009.0 436.2 1014.0 449.0C1019.0 461.8 1021.3 462.2 1027.0 469.0C1032.7 475.8 1040.8 483.3 1048.0 490.0C1055.2 496.7 1062.7 502.0 1070.0 509.0C1077.3 516.0 1085.3 524.8 1092.0 532.0C1098.7 539.2 1103.4 544.0 1110.0 552.0C1116.6 560.0 1126.2 573.1 1131.7 580.0C1137.2 586.9 1138.9 588.0 1143.3 593.3C1147.7 598.6 1153.7 605.3 1158.3 611.7C1162.9 618.1 1166.6 625.5 1170.8 631.7C1175.0 638.0 1178.0 642.9 1183.3 649.2C1188.6 655.5 1197.6 664.5 1202.5 669.6C1207.4 674.7 1208.2 675.5 1212.5 680.0C1216.8 684.5 1222.3 690.6 1228.0 696.4C1233.7 702.2 1238.6 708.1 1246.4 714.6C1254.2 721.1 1265.0 727.6 1275.0 735.4C1285.0 743.2 1297.2 754.1 1306.3 761.5C1315.4 768.9 1321.5 772.3 1329.7 779.7C1337.9 787.1 1346.6 796.6 1355.7 805.7C1364.8 814.8 1377.0 827.0 1384.4 834.4C1391.8 841.8 1392.4 842.4 1400.0 850.0C1407.6 857.6 1416.7 868.3 1430.0 880.0C1443.3 891.7 1466.2 909.5 1480.0 920.0C1493.8 930.5 1499.2 934.7 1513.0 943.0C1526.8 951.3 1546.3 960.0 1563.0 970.0C1579.7 980.0 1596.3 992.5 1613.0 1003.0C1629.7 1013.5 1649.0 1025.2 1663.0 1033.0C1677.0 1040.8 1691.3 1047.2 1697.0 1050.0L1762 1050L1762 92Z"/></clipPath>
<rect x="262" y="92" width="1" height="958" fill="#a6a8a2" fill-opacity="0.9"/><rect x="387" y="92" width="1" height="958" fill="#a6a8a2" fill-opacity="0.9"/><rect x="512" y="92" width="1" height="958" fill="#a6a8a2" fill-opacity="0.9"/><rect x="637" y="92" width="1" height="958" fill="#a6a8a2" fill-opacity="0.9"/><rect x="762" y="92" width="1" height="958" fill="#a6a8a2" fill-opacity="0.9"/><rect x="887" y="92" width="1" height="958" fill="#a6a8a2" fill-opacity="0.9"/><rect x="1012" y="92" width="1" height="958" fill="#a6a8a2" fill-opacity="0.9"/><rect x="1137" y="92" width="1" height="958" fill="#a6a8a2" fill-opacity="0.9"/><rect x="1262" y="92" width="1" height="958" fill="#a6a8a2" fill-opacity="0.9"/><rect x="1387" y="92" width="1" height="958" fill="#101818"/><rect x="1512" y="92" width="1" height="958" fill="#a6a8a2" fill-opacity="0.9"/><rect x="1637" y="92" width="1" height="958" fill="#a6a8a2" fill-opacity="0.9"/><rect x="137" y="217" width="1625" height="1" fill="#a6a8a2" fill-opacity="0.9"/><rect x="137" y="342" width="1625" height="1" fill="#a6a8a2" fill-opacity="0.9"/><rect x="137" y="467" width="1625" height="1" fill="#a6a8a2" fill-opacity="0.9"/><rect x="137" y="592" width="1625" height="1" fill="#a6a8a2" fill-opacity="0.9"/><rect x="137" y="717" width="1625" height="1" fill="#a6a8a2" fill-opacity="0.9"/><rect x="137" y="842" width="1625" height="1" fill="#a6a8a2" fill-opacity="0.9"/><rect x="137" y="967" width="1625" height="1" fill="#a6a8a2" fill-opacity="0.9"/>
<g clip-path="url(#seaclip)"><rect x="262" y="92" width="1" height="958" fill="#8cb2b2" fill-opacity="1"/><rect x="387" y="92" width="1" height="958" fill="#8cb2b2" fill-opacity="1"/><rect x="512" y="92" width="1" height="958" fill="#8cb2b2" fill-opacity="1"/><rect x="637" y="92" width="1" height="958" fill="#8cb2b2" fill-opacity="1"/><rect x="762" y="92" width="1" height="958" fill="#8cb2b2" fill-opacity="1"/><rect x="887" y="92" width="1" height="958" fill="#8cb2b2" fill-opacity="1"/><rect x="1012" y="92" width="1" height="958" fill="#8cb2b2" fill-opacity="1"/><rect x="1137" y="92" width="1" height="958" fill="#8cb2b2" fill-opacity="1"/><rect x="1262" y="92" width="1" height="958" fill="#8cb2b2" fill-opacity="1"/><rect x="1387" y="92" width="1" height="958" fill="#101818"/><rect x="1512" y="92" width="1" height="958" fill="#8cb2b2" fill-opacity="1"/><rect x="1637" y="92" width="1" height="958" fill="#8cb2b2" fill-opacity="1"/><rect x="137" y="217" width="1625" height="1" fill="#8cb2b2" fill-opacity="1"/><rect x="137" y="342" width="1625" height="1" fill="#8cb2b2" fill-opacity="1"/><rect x="137" y="467" width="1625" height="1" fill="#8cb2b2" fill-opacity="1"/><rect x="137" y="592" width="1625" height="1" fill="#8cb2b2" fill-opacity="1"/><rect x="137" y="717" width="1625" height="1" fill="#8cb2b2" fill-opacity="1"/><rect x="137" y="842" width="1625" height="1" fill="#8cb2b2" fill-opacity="1"/><rect x="137" y="967" width="1625" height="1" fill="#8cb2b2" fill-opacity="1"/></g>
<path d="M894.0 92.0C894.2 99.2 895.7 118.3 895.0 135.0C894.3 151.7 890.8 177.0 890.0 192.0C889.2 207.0 889.3 215.0 890.0 225.0C890.7 235.0 891.5 240.8 894.0 252.0C896.5 263.2 901.2 277.5 905.0 292.0C908.8 306.5 914.5 327.3 917.0 339.0C919.5 350.7 918.0 350.3 920.0 362.0C922.0 373.7 926.2 398.5 929.0 409.0C931.8 419.5 933.5 419.8 937.0 425.0C940.5 430.2 945.5 435.5 950.0 440.0C954.5 444.5 954.8 445.2 964.0 452.0C973.2 458.8 991.7 471.5 1005.0 481.0C1018.3 490.5 1031.2 499.1 1044.0 509.0C1056.8 518.9 1072.8 532.2 1082.0 540.6C1091.2 549.0 1093.1 552.8 1099.0 559.5C1104.9 566.2 1111.1 573.0 1117.5 581.0C1123.9 589.0 1132.1 600.3 1137.5 607.5C1142.9 614.7 1145.7 618.2 1150.0 624.2C1154.3 630.2 1159.1 637.8 1163.3 643.3C1167.5 648.8 1171.4 653.1 1175.0 657.5C1178.6 661.9 1181.8 665.5 1185.0 669.6C1188.2 673.7 1189.7 677.5 1194.3 682.0C1198.9 686.5 1206.0 691.0 1212.5 696.4C1219.0 701.8 1227.2 709.4 1233.3 714.6C1239.4 719.8 1243.8 723.3 1249.0 727.6C1254.2 731.9 1259.4 736.3 1264.6 740.6C1269.8 744.9 1275.0 748.8 1280.2 753.6C1285.4 758.4 1291.0 764.1 1295.8 769.3C1300.6 774.5 1304.6 778.8 1308.9 784.9C1313.2 791.0 1318.0 799.2 1321.9 805.7C1325.8 812.2 1328.8 818.4 1332.3 824.0C1335.8 829.6 1339.2 833.5 1342.7 839.6C1346.2 845.7 1349.4 852.7 1353.1 860.4C1356.8 868.1 1360.2 875.7 1365.0 886.0C1369.8 896.3 1377.3 912.2 1382.0 922.0C1386.7 931.8 1389.7 938.5 1393.0 944.5C1396.3 950.5 1398.4 954.5 1402.0 958.0C1405.6 961.5 1411.2 962.1 1414.5 965.7C1417.8 969.3 1419.4 975.0 1422.0 979.5C1424.6 984.0 1427.0 986.2 1430.0 993.0C1433.0 999.8 1437.0 1010.5 1440.0 1020.0C1443.0 1029.5 1446.7 1045.0 1448.0 1050.0" fill="none" stroke="#0a0a0a" stroke-width="3.6" stroke-linejoin="round"/>
<rect x="384.8" y="381.5" width="9" height="9" rx="1" fill="#8a8a92" stroke="#6d6d78" stroke-width="1"/>
<rect x="565.8" y="387.5" width="9" height="9" rx="1" fill="#8a8a92" stroke="#6d6d78" stroke-width="1"/>
<rect x="293.8" y="488.2" width="9" height="9" rx="1" fill="#8a8a92" stroke="#6d6d78" stroke-width="1"/>
<rect x="324.2" y="627.5" width="9" height="9" rx="1" fill="#8a8a92" stroke="#6d6d78" stroke-width="1"/>
<rect x="328.5" y="663.2" width="9" height="9" rx="1" fill="#8a8a92" stroke="#6d6d78" stroke-width="1"/>
<rect x="714.2" y="568.2" width="9" height="9" rx="1" fill="#8a8a92" stroke="#6d6d78" stroke-width="1"/>
<rect x="685.2" y="717.5" width="9" height="9" rx="1" fill="#8a8a92" stroke="#6d6d78" stroke-width="1"/>
<rect x="728.2" y="702.5" width="9" height="9" rx="1" fill="#8a8a92" stroke="#6d6d78" stroke-width="1"/>
<rect x="718.2" y="752.8" width="9" height="9" rx="1" fill="#8a8a92" stroke="#6d6d78" stroke-width="1"/>
<rect x="685.2" y="718.8" width="9" height="9" rx="1" fill="#8a8a92" stroke="#6d6d78" stroke-width="1"/>
<rect x="718.2" y="752.8" width="9" height="9" rx="1" fill="#8a8a92" stroke="#6d6d78" stroke-width="1"/>
<rect x="1002.5" y="683.0" width="9" height="9" rx="1" fill="#8a8a92" stroke="#6d6d78" stroke-width="1"/>
<rect x="813.8" y="448.8" width="9" height="9" rx="1" fill="#8a8a92" stroke="#6d6d78" stroke-width="1"/>
<rect x="1442.0" y="974.0" width="7.5" height="7.5" fill="#8c8781"/>
<rect x="1457.3" y="995.3" width="7.5" height="7.5" fill="#8c8781"/>
<rect x="1551.3" y="1002.3" width="7.5" height="7.5" fill="#8c8781"/>
<rect x="1567.0" y="992.3" width="7.5" height="7.5" fill="#8c8781"/>
<rect x="1559.6" y="1027.0" width="7.5" height="7.5" fill="#8c8781"/>
<text x="673.0" y="165.0" font-family="Liberation Sans,Arial,sans-serif" font-size="10.5" font-weight="normal" font-style="italic" fill="#111" text-anchor="start" fill-opacity="1">Zeliana River</text>
<text x="592.0" y="401.0" font-family="Liberation Sans,Arial,sans-serif" font-size="12" font-weight="normal" font-style="normal" fill="#111" text-anchor="start" fill-opacity="1">Skotina</text>
<text x="982.0" y="238.0" font-family="Liberation Sans,Arial,sans-serif" font-size="12" font-weight="normal" font-style="normal" fill="#10181c" text-anchor="start" fill-opacity="1">Skala Skotinas</text>
<text x="991.0" y="342.0" font-family="Liberation Sans,Arial,sans-serif" font-size="11.5" font-weight="normal" font-style="italic" fill="#0c2224" text-anchor="start" fill-opacity="1">Rinakia River</text>
<text x="1350.0" y="402.0" font-family="Liberation Sans,Arial,sans-serif" font-size="13.5" font-weight="bold" font-style="italic" fill="#0a1a1c" text-anchor="start" fill-opacity="1">Aegean Sea</text>
<text x="1094.0" y="523.0" font-family="Liberation Sans,Arial,sans-serif" font-size="12.5" font-weight="bold" font-style="normal" fill="#1a1a1a" text-anchor="start" fill-opacity="1">Platamon Railway Tunnel</text>
<text x="1094.0" y="577.0" font-family="Liberation Sans,Arial,sans-serif" font-size="12" font-weight="normal" font-style="normal" fill="#222" text-anchor="start" fill-opacity="1">Ruins</text>
<text x="954.0" y="628.0" font-family="Liberation Sans,Arial,sans-serif" font-size="12" font-weight="normal" font-style="normal" fill="#222" text-anchor="start" fill-opacity="1">Castle Ridge</text>
<text x="774.0" y="699.0" font-family="Liberation Sans,Arial,sans-serif" font-size="12" font-weight="normal" font-style="normal" fill="#111" text-anchor="start" fill-opacity="1">Panteleemon</text>
<text x="1251.0" y="708.0" font-family="Liberation Sans,Arial,sans-serif" font-size="13.5" font-weight="bold" font-style="normal" fill="#111" text-anchor="start" fill-opacity="1">Platamon</text>
<text x="1183.0" y="951.0" font-family="Liberation Sans,Arial,sans-serif" font-size="12" font-weight="normal" font-style="normal" fill="#111" text-anchor="start" fill-opacity="1">Derbina</text>
<text x="262.0" y="650.0" font-family="Liberation Sans,Arial,sans-serif" font-size="10.5" font-weight="normal" font-style="normal" fill="#2a2a1a" text-anchor="start" fill-opacity="1">Skotina</text>
<text x="753.0" y="1014.0" font-family="Liberation Sans,Arial,sans-serif" font-size="10" font-weight="normal" font-style="italic" fill="#111" text-anchor="start" fill-opacity="1">Silramala River</text>
<path d="M917.5 342.8L919.9 357.8" stroke="#0a0a0a" stroke-width="3.600" stroke-linecap="round"/><circle cx="918.7" cy="350.3" r="6.800" fill="#ececec" stroke="#0a0a0a" stroke-width="1"/><path d="M916.7 346.3v8M920.7 346.3v8M915.2 348.8h7M915.2 351.8h7" stroke="#0a0a0a" stroke-width="1.2" fill="none"/><path d="M915.2 345.3q3.500 1.800 7 0M915.2 355.3q3.500 -1.800 7 0" stroke="#0a0a0a" stroke-width="0.9" fill="none"/><path d="M901.0 350.2L903.0 365.2" stroke="#0a0a0a" stroke-width="3.600" stroke-linecap="round"/><circle cx="902.0" cy="357.7" r="6.800" fill="#ececec" stroke="#0a0a0a" stroke-width="1"/><path d="M898.4 354.2h2.200v7h-2.200M905.6 354.2h-2.200v7h2.200" stroke="#0a0a0a" stroke-width="1.500" fill="none"/><path d="M931.5 408.8L933.9 423.8" stroke="#0a0a0a" stroke-width="3.600" stroke-linecap="round"/><circle cx="932.7" cy="416.3" r="6.800" fill="#ececec" stroke="#0a0a0a" stroke-width="1"/><path d="M930.7 412.3v8M934.7 412.3v8M929.2 414.8h7M929.2 417.8h7" stroke="#0a0a0a" stroke-width="1.2" fill="none"/><path d="M929.2 411.3q3.500 1.800 7 0M929.2 421.3q3.500 -1.800 7 0" stroke="#0a0a0a" stroke-width="0.9" fill="none"/><path d="M911.0 418.8L913.0 433.8" stroke="#0a0a0a" stroke-width="3.600" stroke-linecap="round"/><circle cx="912.0" cy="426.3" r="6.800" fill="#ececec" stroke="#0a0a0a" stroke-width="1"/><path d="M908.4 422.8h2.200v7h-2.200M915.6 422.8h-2.200v7h2.200" stroke="#0a0a0a" stroke-width="1.500" fill="none"/><path d="M781.5 391.8L782.5 406.8" stroke="#0a0a0a" stroke-width="3.600" stroke-linecap="round"/><circle cx="782.0" cy="399.3" r="6.800" fill="#ececec" stroke="#0a0a0a" stroke-width="1"/><rect x="780.8" y="397.6" width="2.400" height="3.400" fill="#0a0a0a"/><path d="M778.0 394.7q4 2.200 8 0M778.0 403.9q4 -2.200 8 0" stroke="#555" stroke-width="0.9" fill="none"/><path d="M815.8 432.2L816.8 447.2" stroke="#0a0a0a" stroke-width="3.600" stroke-linecap="round"/><circle cx="816.3" cy="439.7" r="6.800" fill="#ececec" stroke="#0a0a0a" stroke-width="1"/><rect x="815.1" y="438.0" width="2.400" height="3.400" fill="#0a0a0a"/><path d="M812.3 435.1q4 2.200 8 0M812.3 444.3q4 -2.200 8 0" stroke="#555" stroke-width="0.9" fill="none"/><rect x="1037.2" y="507.3" width="23.0" height="23.0" rx="1.5" fill="#14581f" stroke="#0a0a0a" stroke-width="1.4"/><rect x="1041.2" y="510.8" width="15.5" height="9.0" fill="#e9e9e9" stroke="#9cc69c" stroke-width="1.2"/><path d="M1044.2 517.8v-4.500h9.5v4.500M1047.5 517.8v-4.500M1050.5 517.8v-4.500" stroke="#111" stroke-width="1.3" fill="none"/><rect x="1038.7" y="522.3" width="20.0" height="6.5" fill="#f2b55a"/><rect x="1048.1" y="523.3" width="1.2" height="4.5" fill="#2a0a0a"/><path d="M1066 526L1081 540" stroke="#0a0a0a" stroke-width="4" stroke-linecap="round"/><path d="M1026 562L1046 580" stroke="#0a0a0a" stroke-width="4" stroke-linecap="round"/><circle cx="1073.9" cy="533.3" r="6.800" fill="#f0687a" stroke="#0a0a0a" stroke-width="1"/><path d="M1070.3 529.8h2.200v7h-2.200M1077.5 529.8h-2.200v7h2.200" stroke="#0a0a0a" stroke-width="1.500" fill="none"/><rect x="1037.2" y="545.5" width="23.0" height="23.0" rx="1.5" fill="#14581f" stroke="#0a0a0a" stroke-width="1.4"/><rect x="1041.2" y="549.0" width="15.5" height="9.0" fill="#e9e9e9" stroke="#9cc69c" stroke-width="1.2"/><path d="M1041.7 549.5L1056.2 557.5M1041.7 557.5L1056.2 549.5" stroke="#111" stroke-width="1.2"/><rect x="1038.7" y="560.5" width="20.0" height="6.5" fill="#f2b55a"/><rect x="1048.1" y="561.5" width="1.2" height="4.5" fill="#2a0a0a"/><circle cx="1036.1" cy="571.7" r="6.800" fill="#f0687a" stroke="#0a0a0a" stroke-width="1"/><path d="M1032.5 568.2h2.200v7h-2.200M1039.7 568.2h-2.200v7h2.200" stroke="#0a0a0a" stroke-width="1.500" fill="none"/><rect x="1048.3" y="590.5" width="23.4" height="16.7" rx="1.5" fill="#14581f" stroke="#0a0a0a" stroke-width="1.4"/><rect x="1058" y="591.500" width="10" height="5.500" fill="#e9e9e9"/><path d="M1059 592l8.500 4.500" stroke="#111" stroke-width="1.1"/><rect x="1050.0" y="599.0" width="20.0" height="6.5" fill="#f2b55a"/><rect x="1059.4" y="600.0" width="1.2" height="4.5" fill="#2a0a0a"/><rect x="1084.4" y="537.8" width="17.8" height="20.0" rx="1" fill="#4fae4f" stroke="#0e5a16" stroke-width="1.2"/><rect x="1087.4" y="540.8" width="11.8" height="14.0" fill="#f2e63a" stroke="#0a0a0a" stroke-width="0.9"/><path d="M1089.6 545.8v-2.600h7.4v2.600" fill="none" stroke="#1a1a90" stroke-width="2"/><rect x="1092.3" y="544.8" width="2" height="3" fill="#1a1a90"/><rect x="1090.8" y="548.3" width="5" height="4.200" fill="#1a1a90"/><rect x="1057.8" y="559.0" width="35.0" height="31.5" rx="1.5" fill="#14581f" stroke="#0a0a0a" stroke-width="1.4"/><rect x="1061.0" y="562.0" width="14.0" height="8.5" fill="#e9e9e9" stroke="#9cc69c" stroke-width="1.2"/><path d="M1061.5 562.5L1074.5 570.0M1061.5 570.0L1074.5 562.5" stroke="#111" stroke-width="1.2"/><rect x="1078" y="561.700" width="9.500" height="9.500" fill="#e4f2e4" stroke="#9cc69c" stroke-width="0.8"/><path d="M1082.750 563l3.400 3.600h-2v3.200h-2.800v-3.200h-2z" fill="#148a5a"/><text x="1074.500" y="581.300" font-family="Liberation Sans,Arial,sans-serif" font-size="10.500" font-weight="bold" fill="#ffffff" text-anchor="middle">21</text><rect x="1059.3" y="582.3" width="32.0" height="6.0" fill="#f2b55a"/><rect x="1072.1" y="583.3" width="1.2" height="4.0" fill="#2a0a0a"/><rect x="1076.3" y="583.3" width="1.2" height="4.0" fill="#2a0a0a"/><path d="M1061 583v4.500M1061 583.500h3v2.500h-3" stroke="#1a0a0a" stroke-width="1.2" fill="#1a0a0a"/><rect x="1040.0" y="578.3" width="17.2" height="19.5" rx="1" fill="#4fae4f" stroke="#0e5a16" stroke-width="1.2"/><rect x="1043.0" y="581.3" width="11.2" height="13.5" fill="#ffffff" stroke="#0a0a0a" stroke-width="0.9"/><path d="M1045.2 586.3v-2.600h6.8v2.600" fill="none" stroke="#1a1ad0" stroke-width="2"/><rect x="1047.6" y="585.3" width="2" height="3" fill="#1a1ad0"/><rect x="1046.1" y="588.8" width="5" height="4.200" fill="#1a1ad0"/><circle cx="1093.300" cy="547.800" r="37.500" fill="none" stroke="#f4f43c" stroke-width="2"/><rect x="964.4" y="603.1" width="23.0" height="23.0" rx="1.5" fill="#14581f" stroke="#0a0a0a" stroke-width="1.4"/><rect x="968.4" y="606.6" width="15.5" height="9.0" fill="#e9e9e9" stroke="#9cc69c" stroke-width="1.2"/><path d="M968.9 607.1L983.4 615.1M968.9 615.1L983.4 607.1" stroke="#111" stroke-width="1.2"/><rect x="965.9" y="618.1" width="20.0" height="6.5" fill="#f2b55a"/><rect x="975.3" y="619.1" width="1.2" height="4.5" fill="#2a0a0a"/><rect x="1020.3" y="606.2" width="23.0" height="14.5" rx="1.5" fill="#14581f" stroke="#0a0a0a" stroke-width="1.4"/><rect x="1024.3" y="609.2" width="15.5" height="8.5" fill="#e9e9e9" stroke="#9cc69c" stroke-width="1.2"/><circle cx="1032.0" cy="613.5" r="2.2" fill="#0a0a0a"/><rect x="729.4" y="670.2" width="23.0" height="23.0" rx="1.5" fill="#14581f" stroke="#0a0a0a" stroke-width="1.4"/><rect x="733.4" y="673.7" width="15.5" height="9.0" fill="#e9e9e9" stroke="#9cc69c" stroke-width="1.2"/><path d="M733.9 674.2L748.4 682.2M733.9 682.2L748.4 674.2" stroke="#111" stroke-width="1.2"/><rect x="730.9" y="685.2" width="20.0" height="6.5" fill="#f2b55a"/><rect x="740.3" y="686.2" width="1.2" height="4.5" fill="#2a0a0a"/><rect x="736.8" y="721.6" width="19.0" height="21.0" rx="1" fill="#4fae4f" stroke="#0e5a16" stroke-width="1.2"/><rect x="739.8" y="724.6" width="13.0" height="15.0" fill="#ffffff" stroke="#0a0a0a" stroke-width="0.9"/><path d="M742.0 729.6v-2.600h8.6v2.600" fill="none" stroke="#1a1ad0" stroke-width="2"/><path d="M746.3 729.6l3.800 3.800h-2.300v3.200h-3v-3.200h-2.300z" fill="#1a1ad0"/><rect x="1225.3" y="723.0" width="23.4" height="14.5" rx="1.5" fill="#14581f" stroke="#0a0a0a" stroke-width="1.4"/><rect x="1228.8" y="715.3" width="19.0" height="20.3" rx="1" fill="#4fae4f" stroke="#0e5a16" stroke-width="1.2"/><rect x="1231.8" y="718.3" width="13.0" height="14.3" fill="#ffffff" stroke="#0a0a0a" stroke-width="0.9"/><path d="M1234.0 723.3v-2.600h8.6v2.600" fill="none" stroke="#1a1ad0" stroke-width="2"/><path d="M1238.3 723.3l3.800 3.800h-2.300v3.200h-3v-3.200h-2.300z" fill="#1a1ad0"/><rect x="1233.1" y="926.3" width="35.6" height="32.4" rx="1.5" fill="#14581f" stroke="#0a0a0a" stroke-width="1.4"/><rect x="1237.0" y="929.5" width="14.0" height="8.5" fill="#e9e9e9" stroke="#9cc69c" stroke-width="1.2"/><circle cx="1242.500" cy="933.700" r="3" fill="#0a0a0a"/><path d="M1243.500 931a3 3 0 0 1 0 5.400z" fill="#e9e9e9"/><rect x="1255.500" y="929.500" width="9.500" height="9.500" fill="#e4f2e4" stroke="#9cc69c" stroke-width="0.8"/><path d="M1260.250 930.500l4 4.500h-8z" fill="#146a2a"/><rect x="1234.6" y="950.0" width="32.6" height="7.0" fill="#f2b55a"/><rect x="1249" y="955" width="1" height="2" fill="#111"/><rect x="1251" y="955" width="1" height="2" fill="#111"/><rect x="1246.3" y="934.7" width="17.5" height="19.0" rx="1" fill="#4fae4f" stroke="#0e5a16" stroke-width="1.2"/><rect x="1249.3" y="937.7" width="11.5" height="13.0" fill="#ffffff" stroke="#0a0a0a" stroke-width="0.9"/><path d="M1251.5 942.7v-2.600h7.1v2.600" fill="none" stroke="#1a1ad0" stroke-width="2"/><path d="M1255.0 942.7l3.800 3.800h-2.300v3.200h-3v-3.200h-2.300z" fill="#1a1ad0"/>
</g>
<rect x="137" y="91" width="1626" height="1" fill="#0c0c0c"/><rect x="1761" y="92" width="2" height="958" fill="#0c0c0c"/>
<rect x="857.500" y="84" width="23" height="23.500" rx="1.5" fill="#bcbcbc" stroke="#0a0a0a" stroke-width="1.4"/><rect x="868.500" y="100" width="1.300" height="5.500" fill="#111"/><rect x="868" y="76.300" width="22.600" height="23" rx="1.5" fill="#bcbcbc" stroke="#0a0a0a" stroke-width="1.4"/><rect x="884.500" y="80" width="3.500" height="7" fill="#fff" stroke="#0a0a0a" stroke-width="1"/><rect x="860.6" y="76.3" width="23" height="23" rx="1.5" fill="#bcbcbc" stroke="#0a0a0a" stroke-width="1.4"/><rect x="861.3" y="77.0" width="21.600" height="12.500" fill="#9a9a9a"/><rect x="864.4" y="79.6" width="15.500" height="8.500" fill="#ececec" stroke="#0a0a0a" stroke-width="1.4"/><path d="M865.1 80.1l14 7.500M865.1 87.6l14 -7.500" stroke="#111" stroke-width="1.1"/><rect x="871.6" y="91.8" width="1.300" height="5" fill="#111"/><rect x="917.5" y="82.2" width="23" height="23" rx="1.5" fill="#bcbcbc" stroke="#0a0a0a" stroke-width="1.4"/><rect x="918.2" y="82.9" width="21.600" height="12.500" fill="#9a9a9a"/><rect x="921.3" y="85.5" width="15.500" height="8.500" fill="#ececec" stroke="#0a0a0a" stroke-width="1.4"/><path d="M922.0 93.5l14 -7.500" stroke="#111" stroke-width="1.3"/><rect x="928.5" y="97.7" width="1.300" height="5" fill="#111"/>
</svg><div class="p" style="left:0;top:0;width:41px;height:267px;"><svg class="tx"><rect width="100%" height="100%" fill="url(#dimple)" opacity="1"/></svg>
<div class="t" style="left:6px;top:6px;">Main</div>
<div class="b " style="left:8px;top:23px;width:29px;height:22px;line-height:22px;text-indent:-2px;">Brief</div>
<div class="b dis" style="left:8px;top:47px;width:29px;height:22px;line-height:22px;text-indent:-2px;">Obj</div>
<div class="b " style="left:8px;top:71px;width:29px;height:22px;line-height:22px;text-indent:-2px;">Reinf</div>
<div class="b " style="left:8px;top:95px;width:29px;height:22px;line-height:22px;text-indent:-2px;">OB</div>
<div class="b " style="left:8px;top:119px;width:29px;height:22px;line-height:22px;text-indent:-2px;">Ord</div>
<div class="b " style="left:8px;top:143px;width:29px;height:22px;line-height:22px;text-indent:-2px;">Plan</div>
<div class="b " style="left:8px;top:167px;width:29px;height:22px;line-height:22px;text-indent:-2px;">FS</div>
<div class="b " style="left:8px;top:191px;width:29px;height:22px;line-height:22px;text-indent:-2px;">Tools</div>
<div class="b " style="left:8px;top:215px;width:29px;height:22px;line-height:22px;text-indent:-2px;">Sup</div>
<div class="b " style="left:8px;top:239px;width:29px;height:22px;line-height:22px;text-indent:-2px;">Msg</div>
</div>
<div class="p" style="left:43px;top:0;width:222px;height:220px;"><svg class="tx"><rect width="100%" height="100%" fill="url(#dimple)" opacity="1"/></svg>
<div class="t" style="left:5px;top:6px;">Controls</div>
<div class="a" style="left:6px;top:23px;width:128px;height:128px;background:#5b553f;border:1px solid #14150f;box-sizing:border-box;"></div><svg class="a" style="left:7px;top:39px;" width="126" height="97" viewBox="0 0 126 97"><defs><clipPath id="mmc"><rect width="126" height="97"/></clipPath></defs><g clip-path="url(#mmc)"><rect width="126" height="97" fill="#ecebca"/><path d="M-5 30 Q22 32 40 50 T 66 84 L70 100 L-5 100Z" fill="#dcc98f" filter="url(#b4)"/><path d="M-5 46 Q14 46 30 60 T 52 92 L54 100 L-5 100Z" fill="#bfa463" filter="url(#b4)"/><path d="M-5 66 Q10 64 22 76 T 36 100 L-5 100Z" fill="#a08548" filter="url(#b3)"/><ellipse cx="45.9" cy="63.9" rx="3.7" ry="1.9" fill="#94844a" fill-opacity="0.75"/><ellipse cx="27.2" cy="52.4" rx="2.8" ry="1.5" fill="#6e6a38" fill-opacity="0.75"/><ellipse cx="21.6" cy="20.8" rx="4.6" ry="3.3" fill="#7d7440" fill-opacity="0.75"/><ellipse cx="27.2" cy="92.2" rx="3.9" ry="2.9" fill="#6e6a38" fill-opacity="0.75"/><ellipse cx="1.0" cy="22.2" rx="4.5" ry="2.3" fill="#8a7c46" fill-opacity="0.75"/><ellipse cx="2.5" cy="84.2" rx="2.8" ry="3.1" fill="#8a7c46" fill-opacity="0.75"/><ellipse cx="44.8" cy="65.9" rx="5.3" ry="3.3" fill="#7d7440" fill-opacity="0.75"/><ellipse cx="32.1" cy="80.8" rx="2.7" ry="3.3" fill="#80743c" fill-opacity="0.75"/><ellipse cx="22.4" cy="47.7" rx="3.4" ry="3.5" fill="#94844a" fill-opacity="0.75"/><ellipse cx="41.1" cy="54.0" rx="4.0" ry="2.1" fill="#80743c" fill-opacity="0.75"/><ellipse cx="45.3" cy="63.1" rx="4.9" ry="2.2" fill="#80743c" fill-opacity="0.75"/><ellipse cx="12.4" cy="22.8" rx="5.2" ry="1.8" fill="#94844a" fill-opacity="0.75"/><ellipse cx="42.5" cy="67.5" rx="5.1" ry="3.4" fill="#94844a" fill-opacity="0.75"/><ellipse cx="8.3" cy="73.3" rx="2.0" ry="2.2" fill="#80743c" fill-opacity="0.75"/><ellipse cx="15.4" cy="85.1" rx="2.6" ry="1.6" fill="#94844a" fill-opacity="0.75"/><ellipse cx="26.0" cy="81.7" rx="2.2" ry="2.0" fill="#6e6a38" fill-opacity="0.75"/><ellipse cx="17.2" cy="42.7" rx="5.0" ry="2.8" fill="#8a7c46" fill-opacity="0.75"/><ellipse cx="36.8" cy="50.1" rx="2.9" ry="3.4" fill="#80743c" fill-opacity="0.75"/><ellipse cx="24.4" cy="91.8" rx="5.1" ry="2.2" fill="#8a7c46" fill-opacity="0.75"/><ellipse cx="31.0" cy="45.5" rx="4.0" ry="3.2" fill="#6e6a38" fill-opacity="0.75"/><ellipse cx="21.0" cy="19.1" rx="4.5" ry="2.0" fill="#6e6a38" fill-opacity="0.75"/><ellipse cx="48.1" cy="59.4" rx="2.9" ry="2.3" fill="#8a7c46" fill-opacity="0.75"/><ellipse cx="6.4" cy="16.3" rx="2.1" ry="2.4" fill="#8a7c46" fill-opacity="0.75"/><ellipse cx="8.2" cy="32.8" rx="3.1" ry="3.4" fill="#94844a" fill-opacity="0.75"/><ellipse cx="13.1" cy="22.6" rx="2.6" ry="2.3" fill="#80743c" fill-opacity="0.75"/><ellipse cx="32.7" cy="52.4" rx="4.6" ry="1.6" fill="#7d7440" fill-opacity="0.75"/><ellipse cx="30.1" cy="73.6" rx="2.9" ry="1.8" fill="#6e6a38" fill-opacity="0.75"/><ellipse cx="42.4" cy="51.1" rx="4.0" ry="2.6" fill="#7d7440" fill-opacity="0.75"/><ellipse cx="44.4" cy="54.3" rx="4.0" ry="1.6" fill="#6e6a38" fill-opacity="0.75"/><ellipse cx="17.6" cy="36.0" rx="5.5" ry="1.7" fill="#7d7440" fill-opacity="0.75"/><ellipse cx="35.3" cy="79.1" rx="5.4" ry="2.5" fill="#7d7440" fill-opacity="0.75"/><ellipse cx="39.3" cy="49.4" rx="3.8" ry="3.3" fill="#7d7440" fill-opacity="0.75"/><ellipse cx="3.2" cy="46.2" rx="2.9" ry="2.9" fill="#94844a" fill-opacity="0.75"/><ellipse cx="25.0" cy="28.8" rx="3.3" ry="2.5" fill="#7d7440" fill-opacity="0.75"/><ellipse cx="12.0" cy="40.8" rx="4.1" ry="1.9" fill="#94844a" fill-opacity="0.75"/><ellipse cx="43.1" cy="66.8" rx="5.0" ry="2.9" fill="#6e6a38" fill-opacity="0.75"/><path d="M0 15h6l8 -8h10l12 -3h14l6 -3" stroke="#2b5f58" stroke-width="0.8" fill="none" stroke-opacity="0.85"/><path d="M6 1l10 12l-6 12l-10 6" stroke="#2b5f58" stroke-width="0.8" fill="none" stroke-opacity="0.85"/><path d="M17 13l14 4l18 -1l10 2" stroke="#2b5f58" stroke-width="0.8" fill="none" stroke-opacity="0.85"/><path d="M31 17l-6 14l-4 16" stroke="#2b5f58" stroke-width="0.8" fill="none" stroke-opacity="0.85"/><path d="M49 22l-8 8l-6 14l-2 14" stroke="#2b5f58" stroke-width="0.8" fill="none" stroke-opacity="0.85"/><path d="M52 24l-6 10l-2 14" stroke="#2b5f58" stroke-width="0.8" fill="none" stroke-opacity="0.85"/><path d="M59 21l-7 12l-6 10l-4 14" stroke="#2b5f58" stroke-width="0.8" fill="none" stroke-opacity="0.85"/><path d="M66 30l-8 10l-5 14" stroke="#2b5f58" stroke-width="0.8" fill="none" stroke-opacity="0.85"/><path d="M74 42l-10 8l-8 12" stroke="#2b5f58" stroke-width="0.8" fill="none" stroke-opacity="0.85"/><path d="M84 52l-12 8l-14 4" stroke="#2b5f58" stroke-width="0.8" fill="none" stroke-opacity="0.85"/><path d="M90 58l-8 14l-4 12" stroke="#2b5f58" stroke-width="0.8" fill="none" stroke-opacity="0.85"/><path d="M94 62l-4 16l-10 14" stroke="#2b5f58" stroke-width="0.8" fill="none" stroke-opacity="0.85"/><path d="M0 30l10 4l6 10" stroke="#2b5f58" stroke-width="0.8" fill="none" stroke-opacity="0.85"/><path d="M20 40l-8 14l-10 8" stroke="#2b5f58" stroke-width="0.8" fill="none" stroke-opacity="0.85"/><path d="M76 72l-2 14l-12 8" stroke="#2b5f58" stroke-width="0.8" fill="none" stroke-opacity="0.85"/><path d="M92 82h12l2 12" stroke="#2b5f58" stroke-width="0.8" fill="none" stroke-opacity="0.85"/><path d="M100 70l8 10l6 16" stroke="#2b5f58" stroke-width="0.8" fill="none" stroke-opacity="0.85"/><path d="M36 60l-10 12l-14 6" stroke="#2b5f58" stroke-width="0.8" fill="none" stroke-opacity="0.85"/><path d="M0 84l20 -4l18 6l14 -4" stroke="#2b5f58" stroke-width="0.8" fill="none" stroke-opacity="0.85"/><path d="M58 62l12 4l10 -2" stroke="#2b5f58" stroke-width="0.8" fill="none" stroke-opacity="0.85"/><path d="M46 20l-7 10l-3 12M47 21l-6 10l-3 12" stroke="#2b5f58" stroke-width="1.1" fill="none"/><path d="M64.400 -1 L65 18.500 Q66.500 27 72 34 Q82 47 95 58.500 Q107 67.500 120 72 L127 74 L127 -1Z" fill="#205f5e"/><path d="M59 0v19l3 5l10 12l22 24l12 14l10 24" stroke="#26261c" stroke-width="0.7" fill="none"/><path d="M58.700 1v18" stroke="#b8947c" stroke-width="1"/><g fill="#30dc3c"><rect x="70" y="33" width="3.500" height="3.500"/><rect x="72" y="37.500" width="3" height="3"/><rect x="64" y="40" width="2" height="2"/><rect x="67" y="40.500" width="2" height="2"/><rect x="46" y="45" width="3" height="3"/><rect x="84.500" y="48" width="3.500" height="2.500"/><rect x="86" y="64.500" width="2.500" height="2.500"/></g><g fill="#0c0c0c"><rect x="58.500" y="15" width="2" height="3"/><rect x="59.500" y="18.500" width="2.500" height="2.500"/><rect x="49" y="22" width="2.500" height="2.500"/><rect x="52" y="24.500" width="2" height="2"/><rect x="60.500" y="22.500" width="2" height="2.500"/></g><rect x="57" y="-0.500" width="5" height="3.500" fill="#e86a6a"/><rect x="58.500" y="0.500" width="2" height="1.500" fill="#fff"/></g><rect x="0" y="72" width="126" height="1.200" fill="#e6e6da"/><rect x="0" y="73.200" width="126" height="0.800" fill="#2a2a20"/></svg><div class="a" style="left:7px;top:32px;width:126px;height:1px;background:#dcdccc;"></div><svg class="a" style="left:146px;top:23px;" width="64" height="64" viewBox="0 0 64 64"><defs><clipPath id="phc"><rect width="64" height="64"/></clipPath><linearGradient id="sky" x1="0" y1="0" x2="0" y2="1"><stop offset="0" stop-color="#5f8fcc"/><stop offset="0.65" stop-color="#a9c6e4"/><stop offset="1" stop-color="#d9e2ea"/></linearGradient><radialGradient id="sun" cx="0.33" cy="0.06" r="0.42"><stop offset="0" stop-color="#ffffff"/><stop offset="0.35" stop-color="#eef3f8" stop-opacity="0.85"/><stop offset="1" stop-color="#c0d4ea" stop-opacity="0"/></radialGradient></defs><g clip-path="url(#phc)"><rect width="64" height="42" fill="url(#sky)"/><rect width="64" height="42" fill="url(#sun)"/><circle cx="22" cy="6" r="12" fill="none" stroke="#e8eef6" stroke-opacity="0.45" stroke-width="0.8"/><rect y="39" width="64" height="25" fill="#b39a68"/><path d="M26 40 L37 40 L50 64 L16 64Z" fill="#c9b384"/><g filter="url(#b1)"><ellipse cx="0.7" cy="15.5" rx="3.0" ry="2.3" fill="#3f4a38" fill-opacity="0.85"/><ellipse cx="15.5" cy="12.4" rx="2.0" ry="1.1" fill="#4d5a44" fill-opacity="0.85"/><ellipse cx="15.0" cy="34.3" rx="2.0" ry="1.8" fill="#4d5a44" fill-opacity="0.85"/><ellipse cx="13.9" cy="27.6" rx="2.0" ry="2.3" fill="#37422f" fill-opacity="0.85"/><ellipse cx="15.7" cy="42.1" rx="1.8" ry="1.9" fill="#4d5a44" fill-opacity="0.85"/><ellipse cx="21.6" cy="46.8" rx="1.5" ry="2.1" fill="#4d5a44" fill-opacity="0.85"/><ellipse cx="13.0" cy="21.1" rx="3.3" ry="1.8" fill="#4d5a44" fill-opacity="0.85"/><ellipse cx="7.9" cy="28.4" rx="2.3" ry="2.3" fill="#586650" fill-opacity="0.85"/><ellipse cx="14.4" cy="30.4" rx="2.6" ry="1.0" fill="#586650" fill-opacity="0.85"/><ellipse cx="15.0" cy="30.8" rx="2.1" ry="2.0" fill="#4d5a44" fill-opacity="0.85"/><ellipse cx="-1.9" cy="28.8" rx="1.6" ry="2.4" fill="#3f4a38" fill-opacity="0.85"/><ellipse cx="15.3" cy="24.0" rx="2.3" ry="1.8" fill="#37422f" fill-opacity="0.85"/><ellipse cx="2.9" cy="36.8" rx="1.5" ry="1.1" fill="#4d5a44" fill-opacity="0.85"/><ellipse cx="-3.4" cy="9.6" rx="1.7" ry="1.3" fill="#37422f" fill-opacity="0.85"/><ellipse cx="5.3" cy="34.8" rx="2.5" ry="2.1" fill="#3f4a38" fill-opacity="0.85"/><ellipse cx="-1.3" cy="17.7" rx="2.2" ry="1.4" fill="#37422f" fill-opacity="0.85"/><ellipse cx="11.9" cy="25.5" rx="2.1" ry="1.9" fill="#4d5a44" fill-opacity="0.85"/><ellipse cx="0.5" cy="46.2" rx="2.5" ry="1.4" fill="#586650" fill-opacity="0.85"/><ellipse cx="4.7" cy="43.8" rx="2.7" ry="2.0" fill="#586650" fill-opacity="0.85"/><ellipse cx="13.2" cy="26.9" rx="1.6" ry="2.4" fill="#37422f" fill-opacity="0.85"/><ellipse cx="20.3" cy="30.3" rx="2.2" ry="1.4" fill="#37422f" fill-opacity="0.85"/><ellipse cx="0.9" cy="13.3" rx="2.1" ry="1.3" fill="#4d5a44" fill-opacity="0.85"/><ellipse cx="0.6" cy="14.1" rx="1.7" ry="1.6" fill="#4d5a44" fill-opacity="0.85"/><ellipse cx="15.8" cy="30.8" rx="1.8" ry="2.3" fill="#4d5a44" fill-opacity="0.85"/><ellipse cx="16.6" cy="25.3" rx="2.4" ry="2.0" fill="#37422f" fill-opacity="0.85"/><ellipse cx="7.8" cy="38.1" rx="3.2" ry="1.2" fill="#4d5a44" fill-opacity="0.85"/><ellipse cx="3.3" cy="18.6" rx="2.1" ry="1.1" fill="#586650" fill-opacity="0.85"/><ellipse cx="0.2" cy="25.8" rx="2.5" ry="1.1" fill="#586650" fill-opacity="0.85"/><ellipse cx="5.5" cy="13.1" rx="2.9" ry="1.5" fill="#586650" fill-opacity="0.85"/><ellipse cx="11.8" cy="20.3" rx="3.4" ry="2.0" fill="#586650" fill-opacity="0.85"/><ellipse cx="3.6" cy="16.3" rx="1.5" ry="1.8" fill="#586650" fill-opacity="0.85"/><ellipse cx="6.4" cy="34.1" rx="2.0" ry="1.7" fill="#586650" fill-opacity="0.85"/><ellipse cx="3.2" cy="38.7" rx="2.9" ry="2.2" fill="#586650" fill-opacity="0.85"/><ellipse cx="12.8" cy="24.1" rx="3.1" ry="1.6" fill="#586650" fill-opacity="0.85"/><ellipse cx="17.1" cy="23.7" rx="2.5" ry="1.2" fill="#586650" fill-opacity="0.85"/><ellipse cx="16.4" cy="22.6" rx="2.8" ry="2.0" fill="#37422f" fill-opacity="0.85"/><ellipse cx="14.7" cy="42.4" rx="2.6" ry="1.9" fill="#37422f" fill-opacity="0.85"/><ellipse cx="6.1" cy="39.0" rx="3.1" ry="1.4" fill="#3f4a38" fill-opacity="0.85"/><ellipse cx="12.1" cy="39.5" rx="2.7" ry="1.3" fill="#4d5a44" fill-opacity="0.85"/><ellipse cx="7.6" cy="24.9" rx="2.4" ry="1.3" fill="#3f4a38" fill-opacity="0.85"/><ellipse cx="11.6" cy="24.0" rx="3.3" ry="1.7" fill="#3f4a38" fill-opacity="0.85"/><ellipse cx="3.4" cy="31.7" rx="2.8" ry="1.1" fill="#4d5a44" fill-opacity="0.85"/><ellipse cx="16.1" cy="27.0" rx="2.0" ry="1.6" fill="#3f4a38" fill-opacity="0.85"/><ellipse cx="5.7" cy="15.3" rx="3.3" ry="1.8" fill="#586650" fill-opacity="0.85"/><ellipse cx="16.3" cy="34.0" rx="2.1" ry="1.8" fill="#586650" fill-opacity="0.85"/><ellipse cx="12.0" cy="17.5" rx="3.0" ry="1.9" fill="#586650" fill-opacity="0.85"/><ellipse cx="5.0" cy="28.2" rx="2.2" ry="1.7" fill="#4d5a44" fill-opacity="0.85"/><ellipse cx="18.4" cy="24.3" rx="2.2" ry="2.3" fill="#3f4a38" fill-opacity="0.85"/><ellipse cx="4.4" cy="33.0" rx="3.2" ry="1.8" fill="#586650" fill-opacity="0.85"/><ellipse cx="-1.1" cy="11.7" rx="2.2" ry="1.6" fill="#4d5a44" fill-opacity="0.85"/><ellipse cx="1.0" cy="27.5" rx="2.8" ry="1.5" fill="#4d5a44" fill-opacity="0.85"/><ellipse cx="4.5" cy="22.6" rx="3.4" ry="1.7" fill="#37422f" fill-opacity="0.85"/><ellipse cx="10.0" cy="28.7" rx="2.8" ry="2.3" fill="#4d5a44" fill-opacity="0.85"/><ellipse cx="5.7" cy="43.8" rx="3.1" ry="1.0" fill="#586650" fill-opacity="0.85"/><ellipse cx="9.3" cy="38.3" rx="1.6" ry="1.7" fill="#4d5a44" fill-opacity="0.85"/><ellipse cx="8.0" cy="18.9" rx="2.4" ry="2.4" fill="#3f4a38" fill-opacity="0.85"/><ellipse cx="12.6" cy="27.5" rx="2.0" ry="2.0" fill="#586650" fill-opacity="0.85"/><ellipse cx="8.8" cy="24.7" rx="2.2" ry="2.0" fill="#4d5a44" fill-opacity="0.85"/><ellipse cx="14.2" cy="28.7" rx="2.4" ry="2.3" fill="#4d5a44" fill-opacity="0.85"/><ellipse cx="21.1" cy="28.6" rx="2.3" ry="1.8" fill="#37422f" fill-opacity="0.85"/><ellipse cx="17.5" cy="12.1" rx="2.4" ry="2.0" fill="#4d5a44" fill-opacity="0.85"/><ellipse cx="15.3" cy="20.4" rx="2.9" ry="1.4" fill="#3f4a38" fill-opacity="0.85"/><ellipse cx="6.5" cy="17.0" rx="2.0" ry="2.1" fill="#586650" fill-opacity="0.85"/><ellipse cx="14.0" cy="35.9" rx="2.5" ry="1.7" fill="#586650" fill-opacity="0.85"/><ellipse cx="45.8" cy="26.5" rx="2.5" ry="1.1" fill="#4d5a44" fill-opacity="0.85"/><ellipse cx="52.7" cy="33.2" rx="1.6" ry="2.3" fill="#586650" fill-opacity="0.85"/><ellipse cx="63.9" cy="28.8" rx="1.6" ry="2.2" fill="#4d5a44" fill-opacity="0.85"/><ellipse cx="43.2" cy="16.7" rx="1.7" ry="2.3" fill="#586650" fill-opacity="0.85"/><ellipse cx="50.9" cy="18.7" rx="1.8" ry="1.3" fill="#4d5a44" fill-opacity="0.85"/><ellipse cx="57.4" cy="31.8" rx="2.6" ry="1.9" fill="#3f4a38" fill-opacity="0.85"/><ellipse cx="51.3" cy="41.8" rx="1.7" ry="1.6" fill="#4d5a44" fill-opacity="0.85"/><ellipse cx="56.1" cy="29.3" rx="2.8" ry="1.7" fill="#586650" fill-opacity="0.85"/><ellipse cx="59.3" cy="25.4" rx="1.6" ry="2.0" fill="#4d5a44" fill-opacity="0.85"/><ellipse cx="43.4" cy="22.7" rx="2.1" ry="2.3" fill="#4d5a44" fill-opacity="0.85"/><ellipse cx="52.3" cy="41.6" rx="2.0" ry="2.1" fill="#4d5a44" fill-opacity="0.85"/><ellipse cx="58.0" cy="10.4" rx="2.4" ry="1.5" fill="#4d5a44" fill-opacity="0.85"/><ellipse cx="50.7" cy="14.8" rx="1.7" ry="1.9" fill="#3f4a38" fill-opacity="0.85"/><ellipse cx="58.4" cy="20.0" rx="2.4" ry="1.5" fill="#37422f" fill-opacity="0.85"/><ellipse cx="46.9" cy="30.1" rx="3.0" ry="1.0" fill="#37422f" fill-opacity="0.85"/><ellipse cx="56.8" cy="30.9" rx="3.3" ry="2.0" fill="#4d5a44" fill-opacity="0.85"/><ellipse cx="53.0" cy="24.8" rx="3.2" ry="1.7" fill="#4d5a44" fill-opacity="0.85"/><ellipse cx="59.3" cy="39.8" rx="2.2" ry="1.3" fill="#586650" fill-opacity="0.85"/><ellipse cx="62.9" cy="22.4" rx="3.0" ry="1.5" fill="#586650" fill-opacity="0.85"/><ellipse cx="45.4" cy="14.5" rx="2.3" ry="2.2" fill="#3f4a38" fill-opacity="0.85"/><ellipse cx="45.4" cy="21.8" rx="2.9" ry="1.6" fill="#3f4a38" fill-opacity="0.85"/><ellipse cx="57.4" cy="30.5" rx="1.9" ry="1.7" fill="#37422f" fill-opacity="0.85"/><ellipse cx="49.6" cy="21.1" rx="2.3" ry="1.4" fill="#37422f" fill-opacity="0.85"/><ellipse cx="49.5" cy="39.0" rx="1.9" ry="1.9" fill="#3f4a38" fill-opacity="0.85"/><ellipse cx="48.1" cy="36.0" rx="3.2" ry="1.2" fill="#586650" fill-opacity="0.85"/><ellipse cx="63.0" cy="40.8" rx="2.9" ry="1.9" fill="#3f4a38" fill-opacity="0.85"/><ellipse cx="51.2" cy="29.3" rx="3.3" ry="1.5" fill="#3f4a38" fill-opacity="0.85"/><ellipse cx="49.0" cy="15.2" rx="2.4" ry="2.3" fill="#3f4a38" fill-opacity="0.85"/><ellipse cx="54.4" cy="20.4" rx="2.4" ry="1.3" fill="#4d5a44" fill-opacity="0.85"/><ellipse cx="63.8" cy="32.3" rx="2.6" ry="1.9" fill="#37422f" fill-opacity="0.85"/><ellipse cx="62.3" cy="20.7" rx="2.8" ry="1.3" fill="#586650" fill-opacity="0.85"/><ellipse cx="50.7" cy="44.9" rx="2.9" ry="1.2" fill="#4d5a44" fill-opacity="0.85"/><ellipse cx="55.2" cy="35.1" rx="1.6" ry="1.9" fill="#586650" fill-opacity="0.85"/><ellipse cx="55.5" cy="29.1" rx="3.0" ry="1.6" fill="#3f4a38" fill-opacity="0.85"/><ellipse cx="66.0" cy="32.9" rx="3.1" ry="1.8" fill="#3f4a38" fill-opacity="0.85"/><ellipse cx="51.9" cy="21.8" rx="3.0" ry="1.1" fill="#37422f" fill-opacity="0.85"/><ellipse cx="57.9" cy="31.5" rx="1.6" ry="1.6" fill="#3f4a38" fill-opacity="0.85"/><ellipse cx="65.7" cy="34.6" rx="2.3" ry="1.9" fill="#3f4a38" fill-opacity="0.85"/><ellipse cx="57.4" cy="27.0" rx="2.8" ry="1.9" fill="#4d5a44" fill-opacity="0.85"/><ellipse cx="50.1" cy="28.2" rx="2.1" ry="1.2" fill="#4d5a44" fill-opacity="0.85"/><ellipse cx="41.7" cy="17.6" rx="1.9" ry="1.0" fill="#586650" fill-opacity="0.85"/><ellipse cx="43.9" cy="30.1" rx="2.2" ry="1.9" fill="#3f4a38" fill-opacity="0.85"/><ellipse cx="58.1" cy="24.5" rx="2.4" ry="2.2" fill="#4d5a44" fill-opacity="0.85"/><ellipse cx="49.4" cy="27.2" rx="2.4" ry="2.1" fill="#586650" fill-opacity="0.85"/><ellipse cx="55.6" cy="21.1" rx="1.7" ry="1.1" fill="#4d5a44" fill-opacity="0.85"/><ellipse cx="48.9" cy="12.1" rx="3.3" ry="1.9" fill="#586650" fill-opacity="0.85"/><ellipse cx="63.1" cy="34.8" rx="1.6" ry="1.3" fill="#586650" fill-opacity="0.85"/><ellipse cx="63.8" cy="15.0" rx="1.6" ry="2.1" fill="#37422f" fill-opacity="0.85"/><ellipse cx="53.1" cy="16.3" rx="3.2" ry="1.9" fill="#4d5a44" fill-opacity="0.85"/><ellipse cx="46.3" cy="24.1" rx="3.1" ry="1.9" fill="#3f4a38" fill-opacity="0.85"/><ellipse cx="51.5" cy="13.6" rx="2.0" ry="2.1" fill="#37422f" fill-opacity="0.85"/><ellipse cx="47.3" cy="25.7" rx="2.1" ry="1.2" fill="#37422f" fill-opacity="0.85"/><ellipse cx="50.4" cy="21.7" rx="1.6" ry="2.1" fill="#3f4a38" fill-opacity="0.85"/><ellipse cx="55.2" cy="29.6" rx="1.7" ry="1.5" fill="#586650" fill-opacity="0.85"/><ellipse cx="62.1" cy="24.7" rx="1.9" ry="1.6" fill="#586650" fill-opacity="0.85"/><ellipse cx="55.0" cy="38.0" rx="1.8" ry="1.9" fill="#4d5a44" fill-opacity="0.85"/><ellipse cx="52.5" cy="24.6" rx="2.5" ry="1.2" fill="#4d5a44" fill-opacity="0.85"/><ellipse cx="37.4" cy="36.8" rx="3.0" ry="1.2" fill="#586650" fill-opacity="0.85"/><ellipse cx="48.2" cy="31.4" rx="2.6" ry="1.2" fill="#3f4a38" fill-opacity="0.85"/><ellipse cx="50.3" cy="26.3" rx="3.0" ry="1.6" fill="#3f4a38" fill-opacity="0.85"/><ellipse cx="53.1" cy="29.4" rx="3.2" ry="1.3" fill="#586650" fill-opacity="0.85"/><ellipse cx="49.2" cy="33.4" rx="2.0" ry="1.3" fill="#586650" fill-opacity="0.85"/><ellipse cx="54.1" cy="11.5" rx="2.2" ry="2.1" fill="#3f4a38" fill-opacity="0.85"/><ellipse cx="47.8" cy="22.2" rx="1.8" ry="2.2" fill="#37422f" fill-opacity="0.85"/><ellipse cx="50.7" cy="32.0" rx="2.3" ry="2.1" fill="#586650" fill-opacity="0.85"/><ellipse cx="56.8" cy="25.1" rx="3.0" ry="1.5" fill="#37422f" fill-opacity="0.85"/><ellipse cx="59.4" cy="18.4" rx="3.0" ry="1.5" fill="#3f4a38" fill-opacity="0.85"/><ellipse cx="60.6" cy="37.3" rx="2.7" ry="2.1" fill="#3f4a38" fill-opacity="0.85"/><ellipse cx="52.3" cy="31.1" rx="2.1" ry="1.5" fill="#37422f" fill-opacity="0.85"/><ellipse cx="42.7" cy="24.7" rx="2.4" ry="2.1" fill="#3f4a38" fill-opacity="0.85"/><ellipse cx="40.8" cy="24.9" rx="2.2" ry="1.8" fill="#4d5a44" fill-opacity="0.85"/><ellipse cx="52.4" cy="32.9" rx="1.7" ry="1.5" fill="#37422f" fill-opacity="0.85"/><ellipse cx="51.3" cy="44.7" rx="1.6" ry="2.1" fill="#586650" fill-opacity="0.85"/><ellipse cx="61.5" cy="19.8" rx="3.1" ry="2.0" fill="#4d5a44" fill-opacity="0.85"/><ellipse cx="49.9" cy="29.5" rx="1.7" ry="1.5" fill="#37422f" fill-opacity="0.85"/><ellipse cx="52.6" cy="29.5" rx="2.2" ry="1.2" fill="#4d5a44" fill-opacity="0.85"/><ellipse cx="58.3" cy="55.8" rx="4.9" ry="1" fill="#7d6c48" fill-opacity="0.6"/><ellipse cx="7.0" cy="57.0" rx="5.8" ry="1" fill="#7d6c48" fill-opacity="0.6"/><ellipse cx="45.8" cy="52.0" rx="7.4" ry="1" fill="#7d6c48" fill-opacity="0.6"/><ellipse cx="13.6" cy="50.9" rx="4.3" ry="1" fill="#7d6c48" fill-opacity="0.6"/><ellipse cx="39.8" cy="60.4" rx="3.8" ry="1" fill="#7d6c48" fill-opacity="0.6"/><ellipse cx="40.5" cy="58.3" rx="4.1" ry="1" fill="#7d6c48" fill-opacity="0.6"/><ellipse cx="4.0" cy="55.1" rx="7.2" ry="1" fill="#7d6c48" fill-opacity="0.6"/><ellipse cx="56.2" cy="57.6" rx="5.1" ry="1" fill="#7d6c48" fill-opacity="0.6"/><ellipse cx="27.2" cy="54.5" rx="7.5" ry="1" fill="#7d6c48" fill-opacity="0.6"/><ellipse cx="19.3" cy="50.5" rx="6.0" ry="1" fill="#7d6c48" fill-opacity="0.6"/><ellipse cx="61.9" cy="49.0" rx="3.2" ry="1" fill="#7d6c48" fill-opacity="0.6"/><ellipse cx="7.4" cy="55.0" rx="6.0" ry="1" fill="#7d6c48" fill-opacity="0.6"/><ellipse cx="11.8" cy="49.0" rx="6.0" ry="1" fill="#7d6c48" fill-opacity="0.6"/><ellipse cx="41.4" cy="57.0" rx="6.6" ry="1" fill="#7d6c48" fill-opacity="0.6"/><ellipse cx="3.9" cy="53.8" rx="7.2" ry="1" fill="#7d6c48" fill-opacity="0.6"/><ellipse cx="61.3" cy="51.1" rx="7.3" ry="1" fill="#7d6c48" fill-opacity="0.6"/><path d="M3 6v40M24 38v10M44 36v12M58 30v20" stroke="#4a4438" stroke-width="0.8"/></g></g><rect x="0.5" y="0.5" width="63" height="63" fill="none" stroke="#14150f"/></svg><svg class="a" style="left:146px;top:89px;" width="64" height="30" viewBox="0 0 64 30"><defs><radialGradient id="gg" cx="0.5" cy="1" r="1"><stop offset="0" stop-color="#d9d7c2"/><stop offset="0.75" stop-color="#d0ceb8"/><stop offset="1" stop-color="#b3b29c"/></radialGradient></defs><path d="M0.5 30 A31.5 29 0 0 1 63.5 30Z" fill="url(#gg)" stroke="#8c8d79" stroke-width="0.6"/><path d="M9.4 23.5L4.7 21.9" stroke="#96957e" stroke-width="1"/><path d="M11.6 19.5L7.3 17.1" stroke="#96957e" stroke-width="1"/><path d="M14.5 15.9L10.9 12.8" stroke="#96957e" stroke-width="1"/><path d="M18.2 13.0L15.4 9.3" stroke="#96957e" stroke-width="1"/><path d="M22.5 10.8L20.5 6.7" stroke="#96957e" stroke-width="1"/><path d="M27.1 9.5L26.1 5.0" stroke="#96957e" stroke-width="1"/><path d="M32.0 9.0L32.0 4.5" stroke="#96957e" stroke-width="1"/><path d="M36.9 9.5L37.9 5.0" stroke="#96957e" stroke-width="1"/><path d="M41.5 10.8L43.5 6.7" stroke="#96957e" stroke-width="1"/><path d="M45.8 13.0L48.6 9.3" stroke="#96957e" stroke-width="1"/><path d="M49.5 15.9L53.1 12.8" stroke="#96957e" stroke-width="1"/><path d="M52.4 19.5L56.7 17.1" stroke="#96957e" stroke-width="1"/><path d="M54.6 23.5L59.3 21.9" stroke="#96957e" stroke-width="1"/><path d="M22.5 10 L28 28" stroke="#d11414" stroke-width="1"/><rect x="28" y="28" width="13" height="3" fill="#6d6f5d"/></svg><div class="a" style="left:146px;top:116px;width:28px;height:14px;box-sizing:border-box;border:1px solid #10110c;background:#c9c9ad;color:#33352a;font-size:12px;line-height:13px;text-align:center;letter-spacing:-0.3px;">Lose</div><div class="a" style="left:185px;top:116px;width:25px;height:14px;box-sizing:border-box;border:1px solid #10110c;background:#a7a98f;color:#5d5f4d;font-size:12px;line-height:13px;text-align:center;letter-spacing:-0.3px;">Win</div><div class="f " style="left:146px;top:135px;width:64px;height:16px;line-height:14px;text-align:center;">D1, 15:00</div><svg class="a" style="left:6px;top:153px;" width="130" height="20" viewBox="0 0 130 20"><circle cx="7.5" cy="6.5" r="5.5" fill="#6b6a52" stroke="#3a3a2c" stroke-width="1.4"/><path d="M4.5 6.5h6" stroke="#b3b08a" stroke-width="1.4"/><path d="M11.5 10.5l6 6" stroke="#2a2a20" stroke-width="2"/><rect x="20" y="2" width="88" height="10" fill="#2c2d22"/><rect x="20" y="2" width="88" height="3" fill="#1d1e16"/><rect x="22.0" y="7.0" width="1" height="4.0" fill="#c9c7a0"/><rect x="24.9" y="8.5" width="1" height="2.5" fill="#6f7058"/><rect x="27.8" y="8.5" width="1" height="2.5" fill="#6f7058"/><rect x="30.7" y="8.5" width="1" height="2.5" fill="#6f7058"/><rect x="33.6" y="8.5" width="1" height="2.5" fill="#6f7058"/><rect x="36.5" y="7.0" width="1" height="4.0" fill="#c9c7a0"/><rect x="39.4" y="8.5" width="1" height="2.5" fill="#6f7058"/><rect x="42.3" y="8.5" width="1" height="2.5" fill="#6f7058"/><rect x="45.2" y="8.5" width="1" height="2.5" fill="#6f7058"/><rect x="48.1" y="8.5" width="1" height="2.5" fill="#6f7058"/><rect x="51.0" y="7.0" width="1" height="4.0" fill="#c9c7a0"/><rect x="53.9" y="8.5" width="1" height="2.5" fill="#6f7058"/><rect x="56.8" y="8.5" width="1" height="2.5" fill="#6f7058"/><rect x="59.7" y="8.5" width="1" height="2.5" fill="#6f7058"/><rect x="62.6" y="8.5" width="1" height="2.5" fill="#6f7058"/><rect x="65.5" y="7.0" width="1" height="4.0" fill="#c9c7a0"/><rect x="68.4" y="8.5" width="1" height="2.5" fill="#6f7058"/><rect x="71.3" y="8.5" width="1" height="2.5" fill="#6f7058"/><rect x="74.2" y="8.5" width="1" height="2.5" fill="#6f7058"/><rect x="77.1" y="8.5" width="1" height="2.5" fill="#6f7058"/><rect x="80.0" y="7.0" width="1" height="4.0" fill="#c9c7a0"/><rect x="82.9" y="8.5" width="1" height="2.5" fill="#6f7058"/><rect x="85.8" y="8.5" width="1" height="2.5" fill="#6f7058"/><rect x="88.7" y="8.5" width="1" height="2.5" fill="#6f7058"/><rect x="91.6" y="8.5" width="1" height="2.5" fill="#6f7058"/><rect x="94.5" y="7.0" width="1" height="4.0" fill="#c9c7a0"/><rect x="97.4" y="8.5" width="1" height="2.5" fill="#6f7058"/><rect x="100.3" y="8.5" width="1" height="2.5" fill="#6f7058"/><rect x="103.2" y="8.5" width="1" height="2.5" fill="#6f7058"/><rect x="106.1" y="8.5" width="1" height="2.5" fill="#6f7058"/><path d="M69 2h4.5v6l-2.2 3.5l-2.3 -3.5z" fill="#e02020"/><rect x="69.5" y="2.5" width="1.5" height="5" fill="#ff7a6a"/><circle cx="120.5" cy="6.5" r="5.5" fill="#6b6a52" stroke="#3a3a2c" stroke-width="1.4"/><path d="M117.2 6.5h6.6M120.5 3.2v6.6" stroke="#c9c48e" stroke-width="1.4"/><path d="M116.5 10.5l-6 6" stroke="#2a2a20" stroke-width="2"/></svg><svg class="a" style="left:138px;top:155px;" width="82" height="20" viewBox="0 0 82 20"><rect x="0" y="0" width="65" height="19" fill="#14150f"/><rect x="3.0" y="2" width="12.0" height="15" fill="#585a4a"/><rect x="3.0" y="2" width="12.0" height="1" fill="#8a8c76"/><rect x="3.0" y="2" width="1" height="15" fill="#7a7c68"/><rect x="3.0" y="15.5" width="12.0" height="1.5" fill="#2d2e24"/><rect x="17.0" y="2" width="12.0" height="15" fill="#585a4a"/><rect x="17.0" y="2" width="12.0" height="1" fill="#8a8c76"/><rect x="17.0" y="2" width="1" height="15" fill="#7a7c68"/><rect x="17.0" y="15.5" width="12.0" height="1.5" fill="#2d2e24"/><rect x="31.0" y="2" width="14.0" height="15" fill="#585a4a"/><rect x="31.0" y="2" width="14.0" height="1" fill="#8a8c76"/><rect x="31.0" y="2" width="1" height="15" fill="#7a7c68"/><rect x="31.0" y="15.5" width="14.0" height="1.5" fill="#2d2e24"/><rect x="47.0" y="2" width="16.0" height="15" fill="#585a4a"/><rect x="47.0" y="2" width="16.0" height="1" fill="#8a8c76"/><rect x="47.0" y="2" width="1" height="15" fill="#7a7c68"/><rect x="47.0" y="15.5" width="16.0" height="1.5" fill="#2d2e24"/><rect x="6.3" y="5.5" width="2" height="8" fill="#e8d820"/><rect x="9.8" y="5.5" width="2" height="8" fill="#e8d820"/><path d="M20.5 5l5 4.5l-5 4.5z" fill="#f4f4e6"/><path d="M33.5 5.5l4 4l-4 4zM38 5.5l4 4l-4 4z" fill="#f4f4e6"/><path d="M48.8 5.5l4 4l-4 4zM53 5.5l4 4l-4 4zM57.2 5.5l4 4l-4 4z" fill="#f4f4e6"/><rect x="65" y="0" width="16" height="19" fill="#54564a"/><rect x="65" y="0" width="16" height="1" fill="#7d7f6c"/><rect x="65" y="17.5" width="16" height="1.5" fill="#2a2b22"/><text x="73" y="14.5" font-family="Liberation Sans,Arial,sans-serif" font-size="13" fill="#f1f0dc" text-anchor="middle">R</text></svg><div class="f " style="left:6px;top:176px;width:211px;height:17px;line-height:15px;text-align:left;padding-left:3px;">Tanks at Platamon</div><div class="lab " style="left:3px;top:197px;color:#d8d8c0;">From</div><div class="f " style="left:38px;top:197px;width:72px;height:17px;line-height:15px;text-align:center;">D1, 15:00</div><div class="lab " style="left:115px;top:197px;color:#d8d8c0;">To</div><div class="f " style="left:138px;top:197px;width:72px;height:17px;line-height:15px;text-align:center;">D4, 12:00</div>
</div>
<div class="p" style="left:1370px;top:445px;width:433px;height:314px;"><svg class="tx"><rect width="100%" height="100%" fill="url(#dimple)" opacity="1"/></svg><div class="t" style="left:7px;top:6px;letter-spacing:0.15px;">Scenario Objectives</div><div class="a" style="left:7px;top:23px;width:214px;height:258px;box-sizing:border-box;border:1px solid #1d1f17;box-shadow:inset 1px 1px 0 #6a6c5a;"></div></div><div class="row" style="top:468px;color:#f4f3da;"><span class="n">Destroy the Enemy</span><span class="v">50</span><i></i></div><div class="row" style="top:488px;color:#9af04a;background:#000;"><span class="n">Platamon Railway Tunnel</span><span class="v">38</span><i></i></div><div class="row" style="top:508px;color:#9af04a;"><span class="n">Castle Hill Track</span><span class="v">25</span><i></i></div><div class="row" style="top:528px;color:#9af04a;"><span class="n">Panteleemon</span><span class="v">19</span><i></i></div><div class="row" style="top:548px;color:#9af04a;"><span class="n">Platamon Village</span><span class="v">19</span><i></i></div><div class="row" style="top:568px;color:#9af04a;"><span class="n">Derbina</span><span class="v">6</span><i></i></div><div class="row" style="top:588px;color:#b9bbaa;"><span class="n">AI-Poroi</span><span class="v">6</span><i></i></div><div class="row" style="top:608px;color:#b9bbaa;"><span class="n">Aigane</span><span class="v">6</span><i></i></div><div class="row" style="top:628px;color:#b9bbaa;"><span class="n" style="left:11px;">Exit 1 to Tempe</span><span class="v">31</span><i></i></div><div class="row" style="top:648px;color:#b9bbaa;"><span class="n" style="left:11px;">Exit 2 to Tempe</span></div><div class="a" style="left:1381px;top:638px;width:3px;height:19px;border:1px solid #ecebd2;border-right:none;"></div><svg class="a" style="left:1576px;top:468px;" width="14" height="258" viewBox="0 0 14 258"><rect x="0" y="0" width="14" height="258" fill="#77795f"/><rect x="0.5" y="0.5" width="13" height="257" fill="none" stroke="#c9c7a0" stroke-width="0.6"/><rect x="2" y="14" width="10" height="230" fill="#a81820"/><rect x="2" y="14" width="10" height="230" fill="url(#redtx)"/><rect x="2" y="14" width="2" height="230" fill="#d85050" opacity="0.5"/><rect x="10.5" y="14" width="1.5" height="230" fill="#5c0c10" opacity="0.7"/><path d="M7 2.5l5 5h-3v4h-4v-4h-3z" fill="#f4f4ea"/><path d="M7 255.5l5 -5h-3v-4h-4v4h-3z" fill="#f4f4ea"/></svg><div class="lab " style="left:1594px;top:469px;">From</div><div class="f " style="left:1623px;top:468px;width:73px;height:15px;line-height:15px;text-align:right;padding-right:4px;">D1, 15:00</div><div class="lab " style="left:1710px;top:469px;">To</div><div class="f " style="left:1727px;top:468px;width:73px;height:15px;line-height:15px;text-align:right;padding-right:4px;">D4, 12:00</div><div class="lab " style="left:1560px;width:94px;text-align:right;top:486px;">Occupation</div><div class="f " style="left:1659px;top:485px;width:72px;height:15px;line-height:15px;text-align:right;padding-right:4px;">0.0 / 37.5</div><div class="lab " style="left:1560px;width:94px;text-align:right;top:503px;">Completion</div><div class="f " style="left:1659px;top:502px;width:72px;height:15px;line-height:15px;text-align:right;padding-right:4px;">0.0 / 0.0</div><div class="lab dis" style="left:1560px;width:94px;text-align:right;top:520px;">APerFP</div><div class="f dis" style="left:1659px;top:519px;width:72px;height:15px;line-height:15px;text-align:right;padding-right:4px;">0.0 / 0.0</div><div class="lab dis" style="left:1560px;width:94px;text-align:right;top:537px;">Armour</div><div class="f dis" style="left:1659px;top:536px;width:72px;height:15px;line-height:15px;text-align:right;padding-right:4px;">0.0 / 0.0</div><div class="lab dis" style="left:1560px;width:94px;text-align:right;top:554px;">Bombard</div><div class="f dis" style="left:1659px;top:553px;width:72px;height:15px;line-height:15px;text-align:right;padding-right:4px;">0.0 / 0.0</div><div class="lab dis" style="left:1560px;width:94px;text-align:right;top:571px;">No of Units</div><div class="f dis" style="left:1659px;top:570px;width:72px;height:15px;line-height:15px;text-align:right;padding-right:4px;">0</div><div class="lab dis" style="left:1560px;width:94px;text-align:right;top:588px;">Kills</div><div class="f dis" style="left:1659px;top:587px;width:72px;height:15px;line-height:15px;text-align:right;padding-right:4px;">0.0 / 0.0</div><div class="b " style="left:1724px;top:730px;width:76px;height:23px;line-height:23px;">Dismiss</div>
<div class="p" style="left:0;top:1050px;width:1920px;height:30px;background:#7b7d68;box-shadow:inset 0 1px 0 #a0a28c,inset 0 2px 0 #8b8d78,inset 0 -3px 0 #3c3d32;"><svg class="tx"><rect width="100%" height="100%" fill="url(#dimple)" opacity="1"/></svg></div><div class="b " style="left:4px;top:1054px;width:109px;height:23px;line-height:23px;">F2 - Rout Status</div><div class="b " style="left:115px;top:1054px;width:109px;height:23px;line-height:23px;">1 - All units</div><div class="b " style="left:228px;top:1054px;width:48px;height:23px;line-height:23px;">All</div><div class="b " style="left:278px;top:1054px;width:48px;height:23px;line-height:23px;">Routine</div><div class="b " style="left:329px;top:1054px;width:48px;height:23px;line-height:23px;">Cmd</div><div class="b " style="left:379px;top:1054px;width:49px;height:23px;line-height:23px;">None</div><div class="b " style="left:430px;top:1054px;width:110px;height:23px;line-height:23px;">None</div><div class="a" style="left:543px;top:1051px;width:166px;height:29px;box-sizing:border-box;border-left:2px solid #55574a;border-right:2px solid #55574a;background:#7f816b;"></div><svg class="a" style="left:547px;top:1052px;" width="160" height="28" viewBox="0 0 160 28"><path d="M4 22V3h21" fill="none" stroke="#4d4f42" stroke-width="1.6"/><path d="M29 22V3h21" fill="none" stroke="#4d4f42" stroke-width="1.6"/><path d="M54 22V3h21" fill="none" stroke="#4d4f42" stroke-width="1.6"/><path d="M79 22V3h21" fill="none" stroke="#4d4f42" stroke-width="1.6"/><path d="M104 22V3h21" fill="none" stroke="#4d4f42" stroke-width="1.6"/><g stroke="#f0f0e4" stroke-width="1.3"><path d="M9 3v17M14.5 3v17M20 3v17M5 6.5h19M5 12h19M5 17.5h19"/></g><rect x="31" y="4" width="10" height="9" fill="#d6d6d6" stroke="#888" stroke-width="0.5"/><rect x="34" y="6" width="5" height="2.5" fill="#222"/><rect x="38" y="11" width="11" height="10" fill="#1c6a2c"/><rect x="39" y="17" width="9" height="3" fill="#e6c860"/><path d="M41 15l2.5-3l2.5 3z" fill="#fff"/><path d="M60 3v12M56.5 6.5h7" stroke="#c8c8d8" stroke-width="2.2"/><path d="M66.5 9v13M62 13h9" stroke="#3a2a10" stroke-width="3.4"/><path d="M66.5 9.6v11.8M62.6 13h7.8" stroke="#f0b060" stroke-width="1.6"/><rect x="82.5" y="5.500" width="14" height="14" fill="#fff" stroke="#111" stroke-width="1.4"/><path d="M84.500 8h10" stroke="#1830c0" stroke-width="2"/><path d="M89.500 9.500l4.500 4.500h-2.800v3.500h-3.400v-3.500h-2.800z" fill="#1830c0"/><rect x="107.5" y="5.500" width="14" height="14" fill="#e2e2e2" stroke="#111" stroke-width="1.4"/><path d="M114.500 7.500l4.500 5h-2.800v5h-3.400v-5h-2.800z" fill="#111"/><rect x="132" y="3" width="19" height="19" fill="#7e8d58" stroke="#d8d8b8" stroke-width="1"/><rect x="132" y="20.500" width="19" height="2" fill="#3c4428"/><circle cx="141.500" cy="10" r="3.800" fill="#f09820"/><path d="M135.500 19.500c0-4 3-5.500 6-5.500s6 1.500 6 5.500z" fill="#f09820"/></svg><div class="a" style="left:1728px;top:1051px;width:3px;height:29px;background:#55574a;border-right:1px solid #a5a792;"></div><div class="b " style="left:1734px;top:1054px;width:58px;height:23px;line-height:23px;">Menu</div><div class="b " style="left:1795px;top:1054px;width:58px;height:23px;line-height:23px;">Surrender</div><div class="b " style="left:1855px;top:1054px;width:58px;height:23px;line-height:23px;">Minimize</div><div class="a" style="left:1856px;top:1037px;width:62px;text-align:right;font-weight:bold;font-size:11px;color:#0c0c08;letter-spacing:1px;">5.0.7</div></body></html>
